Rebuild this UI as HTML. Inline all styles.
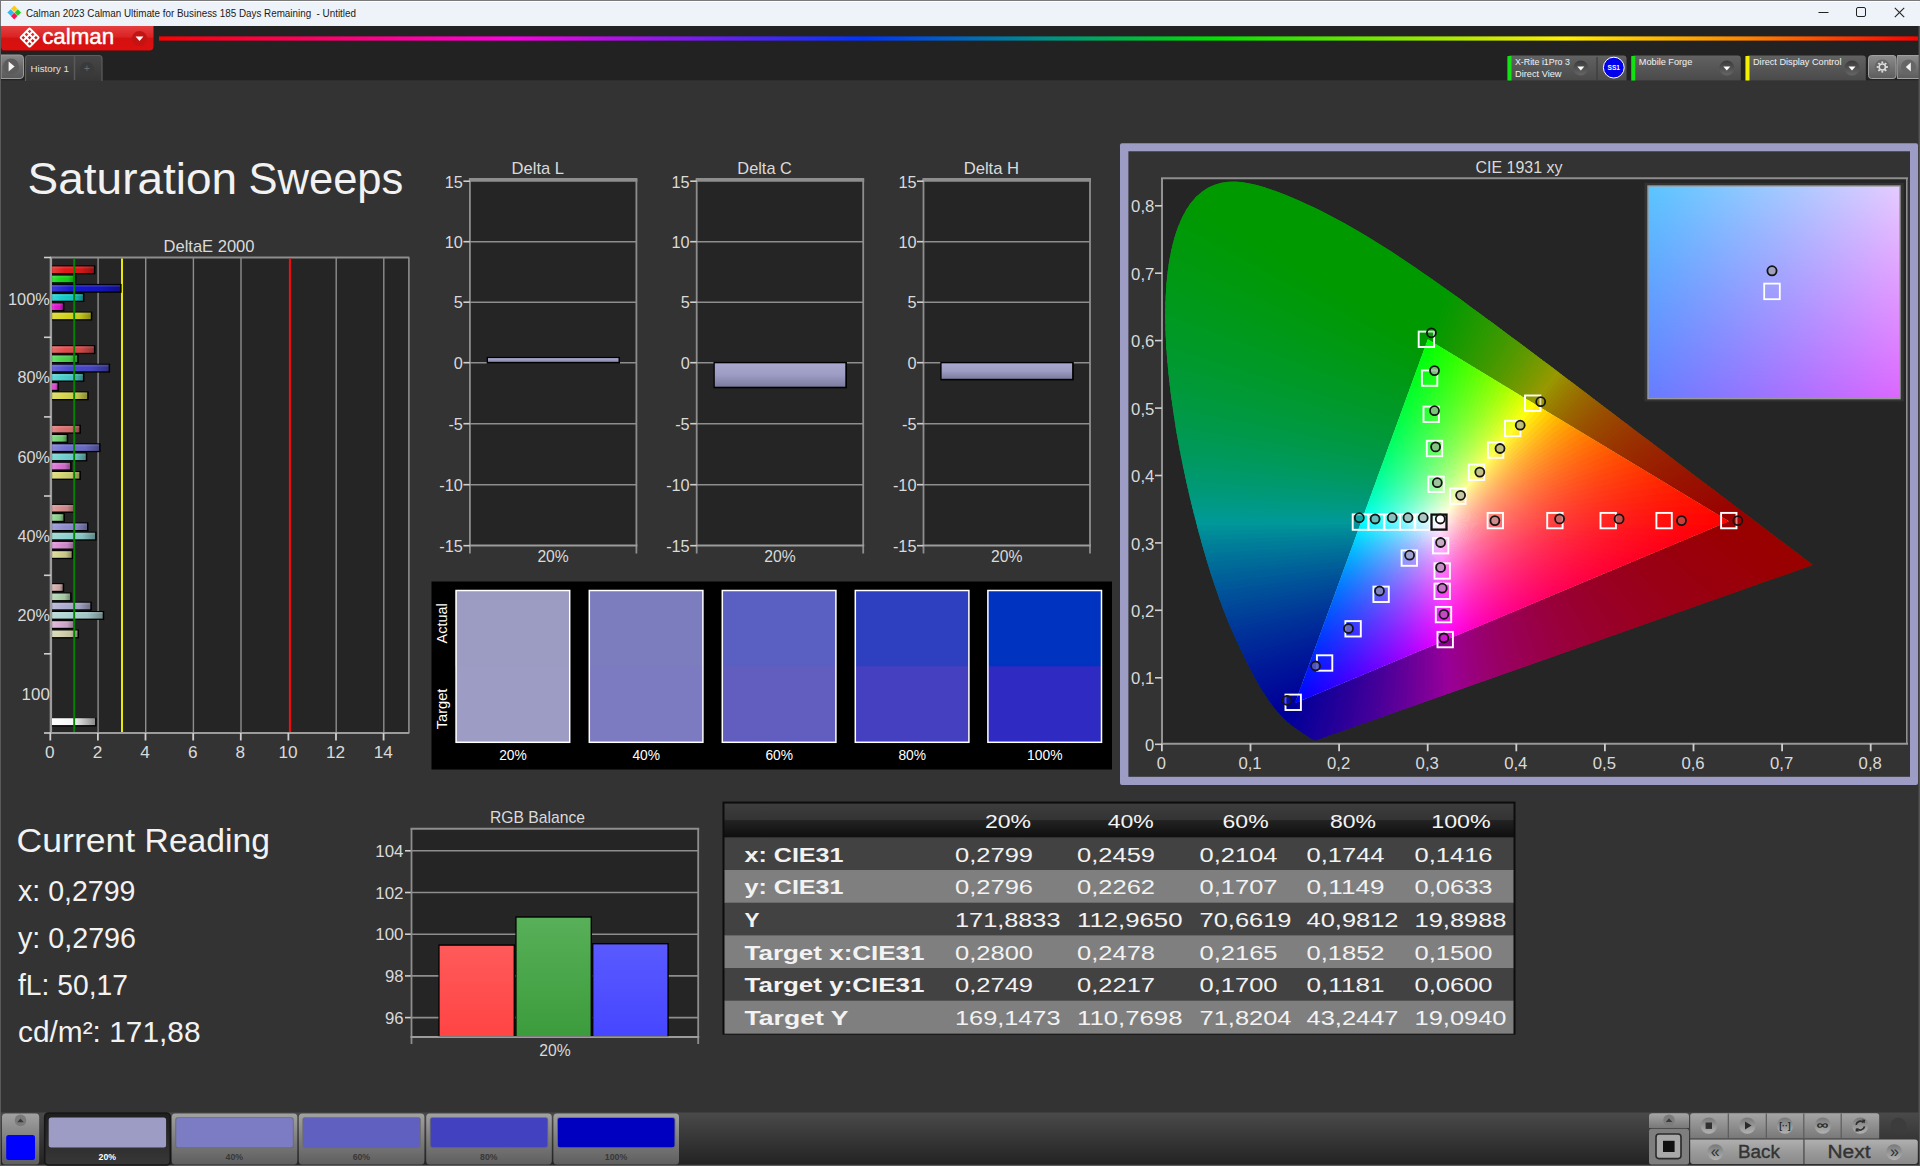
<!DOCTYPE html>
<html lang="en"><head><meta charset="utf-8"><title>Calman 2023 - Saturation Sweeps</title>
<style>
html,body{margin:0;padding:0;background:#333;overflow:hidden}
svg{display:block}
text{font-family:'Liberation Sans', Arial, sans-serif;white-space:pre}
</style></head><body>
<svg width="1920" height="1166" viewBox="0 0 1920 1166">
<defs>
<linearGradient id="redbtn" x1="0" y1="0" x2="0" y2="1"><stop offset="0" stop-color="#e34040"/><stop offset="0.45" stop-color="#dc2222"/><stop offset="0.5" stop-color="#d41111"/><stop offset="1" stop-color="#dd0f0f"/></linearGradient>
<linearGradient id="spec" x1="0" y1="0" x2="1" y2="0"><stop offset="0" stop-color="#ff0000"/><stop offset="0.2" stop-color="#ff00e0"/><stop offset="0.4" stop-color="#0033ff"/><stop offset="0.5" stop-color="#008c8c"/><stop offset="0.6" stop-color="#00e000"/><stop offset="0.8" stop-color="#ffee00"/><stop offset="0.9" stop-color="#ff8800"/><stop offset="1" stop-color="#ff0000"/></linearGradient>
<linearGradient id="gbtn" x1="0" y1="0" x2="0" y2="1"><stop offset="0" stop-color="#8a8a8a"/><stop offset="0.5" stop-color="#6a6a6a"/><stop offset="1" stop-color="#5a5a5a"/></linearGradient>
<linearGradient id="tab" x1="0" y1="0" x2="0" y2="1"><stop offset="0" stop-color="#474747"/><stop offset="1" stop-color="#363636"/></linearGradient>
<linearGradient id="dev" x1="0" y1="0" x2="0" y2="1"><stop offset="0" stop-color="#626262"/><stop offset="1" stop-color="#4a4a4a"/></linearGradient>
<linearGradient id="ddc" x1="0" y1="0" x2="0" y2="1"><stop offset="0" stop-color="#3a3a3a"/><stop offset="1" stop-color="#666666"/></linearGradient>
<linearGradient id="gbtn2" x1="0" y1="0" x2="0" y2="1"><stop offset="0" stop-color="#8c8c8c"/><stop offset="1" stop-color="#5c5c5c"/></linearGradient>
<linearGradient id="db0_0" x1="0" y1="0" x2="1" y2="0"><stop offset="0" stop-color="#e83e3e"/><stop offset="0.3" stop-color="#e41919"/><stop offset="0.7" stop-color="#d21717"/><stop offset="1" stop-color="#921010"/></linearGradient>
<linearGradient id="db0_1" x1="0" y1="0" x2="1" y2="0"><stop offset="0" stop-color="#40dd40"/><stop offset="0.3" stop-color="#1cd71c"/><stop offset="0.7" stop-color="#1ac61a"/><stop offset="1" stop-color="#128a12"/></linearGradient>
<linearGradient id="db0_2" x1="0" y1="0" x2="1" y2="0"><stop offset="0" stop-color="#3b3bd5"/><stop offset="0.3" stop-color="#1616cd"/><stop offset="0.7" stop-color="#1414bd"/><stop offset="1" stop-color="#0e0e83"/></linearGradient>
<linearGradient id="db0_3" x1="0" y1="0" x2="1" y2="0"><stop offset="0" stop-color="#3ed5d5"/><stop offset="0.3" stop-color="#19cdcd"/><stop offset="0.7" stop-color="#17bdbd"/><stop offset="1" stop-color="#108383"/></linearGradient>
<linearGradient id="db0_4" x1="0" y1="0" x2="1" y2="0"><stop offset="0" stop-color="#e83edd"/><stop offset="0.3" stop-color="#e419d7"/><stop offset="0.7" stop-color="#d217c6"/><stop offset="1" stop-color="#92108a"/></linearGradient>
<linearGradient id="db0_5" x1="0" y1="0" x2="1" y2="0"><stop offset="0" stop-color="#dddd42"/><stop offset="0.3" stop-color="#d7d71e"/><stop offset="0.7" stop-color="#c6c61c"/><stop offset="1" stop-color="#8a8a13"/></linearGradient>
<linearGradient id="db1_0" x1="0" y1="0" x2="1" y2="0"><stop offset="0" stop-color="#e56a6a"/><stop offset="0.3" stop-color="#e04d4d"/><stop offset="0.7" stop-color="#ce4747"/><stop offset="1" stop-color="#8f3232"/></linearGradient>
<linearGradient id="db1_1" x1="0" y1="0" x2="1" y2="0"><stop offset="0" stop-color="#6cdd6c"/><stop offset="0.3" stop-color="#50d650"/><stop offset="0.7" stop-color="#49c549"/><stop offset="1" stop-color="#338933"/></linearGradient>
<linearGradient id="db1_2" x1="0" y1="0" x2="1" y2="0"><stop offset="0" stop-color="#6868d7"/><stop offset="0.3" stop-color="#4b4bcf"/><stop offset="0.7" stop-color="#4545be"/><stop offset="1" stop-color="#303084"/></linearGradient>
<linearGradient id="db1_3" x1="0" y1="0" x2="1" y2="0"><stop offset="0" stop-color="#6ad7d7"/><stop offset="0.3" stop-color="#4dcfcf"/><stop offset="0.7" stop-color="#47bebe"/><stop offset="1" stop-color="#328484"/></linearGradient>
<linearGradient id="db1_4" x1="0" y1="0" x2="1" y2="0"><stop offset="0" stop-color="#e56add"/><stop offset="0.3" stop-color="#e04dd6"/><stop offset="0.7" stop-color="#ce47c5"/><stop offset="1" stop-color="#8f3289"/></linearGradient>
<linearGradient id="db1_5" x1="0" y1="0" x2="1" y2="0"><stop offset="0" stop-color="#dddd6d"/><stop offset="0.3" stop-color="#d6d651"/><stop offset="0.7" stop-color="#c5c54a"/><stop offset="1" stop-color="#898934"/></linearGradient>
<linearGradient id="db2_0" x1="0" y1="0" x2="1" y2="0"><stop offset="0" stop-color="#e28989"/><stop offset="0.3" stop-color="#dc7373"/><stop offset="0.7" stop-color="#cb6a6a"/><stop offset="1" stop-color="#8d4949"/></linearGradient>
<linearGradient id="db2_1" x1="0" y1="0" x2="1" y2="0"><stop offset="0" stop-color="#8bdc8b"/><stop offset="0.3" stop-color="#74d674"/><stop offset="0.7" stop-color="#6bc46b"/><stop offset="1" stop-color="#4a894a"/></linearGradient>
<linearGradient id="db2_2" x1="0" y1="0" x2="1" y2="0"><stop offset="0" stop-color="#8888d8"/><stop offset="0.3" stop-color="#7171d0"/><stop offset="0.7" stop-color="#6868c0"/><stop offset="1" stop-color="#484885"/></linearGradient>
<linearGradient id="db2_3" x1="0" y1="0" x2="1" y2="0"><stop offset="0" stop-color="#89d8d8"/><stop offset="0.3" stop-color="#73d0d0"/><stop offset="0.7" stop-color="#6ac0c0"/><stop offset="1" stop-color="#498585"/></linearGradient>
<linearGradient id="db2_4" x1="0" y1="0" x2="1" y2="0"><stop offset="0" stop-color="#e289dc"/><stop offset="0.3" stop-color="#dc73d6"/><stop offset="0.7" stop-color="#cb6ac4"/><stop offset="1" stop-color="#8d4989"/></linearGradient>
<linearGradient id="db2_5" x1="0" y1="0" x2="1" y2="0"><stop offset="0" stop-color="#dcdc8b"/><stop offset="0.3" stop-color="#d6d675"/><stop offset="0.7" stop-color="#c4c46c"/><stop offset="1" stop-color="#89894b"/></linearGradient>
<linearGradient id="db3_0" x1="0" y1="0" x2="1" y2="0"><stop offset="0" stop-color="#e0a2a2"/><stop offset="0.3" stop-color="#da9191"/><stop offset="0.7" stop-color="#c88585"/><stop offset="1" stop-color="#8b5d5d"/></linearGradient>
<linearGradient id="db3_1" x1="0" y1="0" x2="1" y2="0"><stop offset="0" stop-color="#a3dca3"/><stop offset="0.3" stop-color="#92d592"/><stop offset="0.7" stop-color="#86c486"/><stop offset="1" stop-color="#5d885d"/></linearGradient>
<linearGradient id="db3_2" x1="0" y1="0" x2="1" y2="0"><stop offset="0" stop-color="#a1a1d9"/><stop offset="0.3" stop-color="#9090d1"/><stop offset="0.7" stop-color="#8484c1"/><stop offset="1" stop-color="#5c5c86"/></linearGradient>
<linearGradient id="db3_3" x1="0" y1="0" x2="1" y2="0"><stop offset="0" stop-color="#a2d9d9"/><stop offset="0.3" stop-color="#91d1d1"/><stop offset="0.7" stop-color="#85c1c1"/><stop offset="1" stop-color="#5d8686"/></linearGradient>
<linearGradient id="db3_4" x1="0" y1="0" x2="1" y2="0"><stop offset="0" stop-color="#e0a2dc"/><stop offset="0.3" stop-color="#da91d5"/><stop offset="0.7" stop-color="#c885c4"/><stop offset="1" stop-color="#8b5d88"/></linearGradient>
<linearGradient id="db3_5" x1="0" y1="0" x2="1" y2="0"><stop offset="0" stop-color="#dcdca4"/><stop offset="0.3" stop-color="#d5d592"/><stop offset="0.7" stop-color="#c4c487"/><stop offset="1" stop-color="#88885e"/></linearGradient>
<linearGradient id="db4_0" x1="0" y1="0" x2="1" y2="0"><stop offset="0" stop-color="#debbbb"/><stop offset="0.3" stop-color="#d7afaf"/><stop offset="0.7" stop-color="#c6a1a1"/><stop offset="1" stop-color="#8a7070"/></linearGradient>
<linearGradient id="db4_1" x1="0" y1="0" x2="1" y2="0"><stop offset="0" stop-color="#bcdbbc"/><stop offset="0.3" stop-color="#afd5af"/><stop offset="0.7" stop-color="#a1c4a1"/><stop offset="1" stop-color="#708870"/></linearGradient>
<linearGradient id="db4_2" x1="0" y1="0" x2="1" y2="0"><stop offset="0" stop-color="#bbbbda"/><stop offset="0.3" stop-color="#aeaed3"/><stop offset="0.7" stop-color="#a0a0c2"/><stop offset="1" stop-color="#6f6f87"/></linearGradient>
<linearGradient id="db4_3" x1="0" y1="0" x2="1" y2="0"><stop offset="0" stop-color="#bbdada"/><stop offset="0.3" stop-color="#afd3d3"/><stop offset="0.7" stop-color="#a1c2c2"/><stop offset="1" stop-color="#708787"/></linearGradient>
<linearGradient id="db4_4" x1="0" y1="0" x2="1" y2="0"><stop offset="0" stop-color="#debbdb"/><stop offset="0.3" stop-color="#d7afd5"/><stop offset="0.7" stop-color="#c6a1c4"/><stop offset="1" stop-color="#8a7088"/></linearGradient>
<linearGradient id="db4_5" x1="0" y1="0" x2="1" y2="0"><stop offset="0" stop-color="#dbdbbc"/><stop offset="0.3" stop-color="#d5d5b0"/><stop offset="0.7" stop-color="#c4c4a2"/><stop offset="1" stop-color="#888870"/></linearGradient>
<linearGradient id="dbw" x1="0" y1="0" x2="1" y2="0"><stop offset="0" stop-color="#ffffff"/><stop offset="0.5" stop-color="#f4f4f4"/><stop offset="1" stop-color="#8a8a8a"/></linearGradient>
<linearGradient id="lav" x1="0" y1="0" x2="0" y2="1"><stop offset="0" stop-color="#a9a9cf"/><stop offset="0.5" stop-color="#9c9cc4"/><stop offset="1" stop-color="#7c7ca0"/></linearGradient>
<linearGradient id="rb_r" x1="0" y1="0" x2="0" y2="1"><stop offset="0" stop-color="#ff5a5a"/><stop offset="1" stop-color="#ff4444"/></linearGradient>
<linearGradient id="rb_g" x1="0" y1="0" x2="0" y2="1"><stop offset="0" stop-color="#58b058"/><stop offset="1" stop-color="#3c9c3c"/></linearGradient>
<linearGradient id="rb_b" x1="0" y1="0" x2="0" y2="1"><stop offset="0" stop-color="#5a5aff"/><stop offset="1" stop-color="#4646ff"/></linearGradient>
<clipPath id="locus"><path d="M1315.6,740.5 L1312.7,739.7 L1309.9,737.9 L1307.2,736.0 L1304.0,733.9 L1300.8,731.8 L1297.9,729.8 L1294.6,727.6 L1292.2,725.7 L1289.5,723.7 L1286.7,721.3 L1283.7,718.5 L1280.3,714.9 L1276.4,710.4 L1274.2,707.7 L1272.0,704.7 L1269.6,701.5 L1267.2,698.0 L1264.6,694.1 L1261.9,689.9 L1259.1,685.2 L1256.1,680.0 L1253.1,674.4 L1249.8,668.2 L1246.4,661.5 L1242.9,654.3 L1239.2,646.4 L1235.3,638.0 L1231.2,628.8 L1227.1,619.0 L1222.9,608.4 L1218.7,597.1 L1214.6,585.1 L1210.4,572.4 L1206.3,559.0 L1202.2,544.9 L1198.1,530.1 L1194.1,514.6 L1190.1,498.6 L1186.4,482.2 L1182.8,465.5 L1179.5,448.7 L1176.4,431.7 L1173.7,414.6 L1171.3,397.7 L1169.2,380.8 L1167.6,364.2 L1166.3,348.0 L1165.5,332.3 L1165.2,317.1 L1165.4,302.3 L1166.1,288.1 L1167.3,274.5 L1169.1,261.6 L1171.4,249.4 L1174.3,238.1 L1177.7,227.7 L1181.7,218.2 L1186.2,209.8 L1191.1,202.5 L1196.4,196.4 L1202.2,191.4 L1208.2,187.5 L1214.6,184.7 L1221.1,182.7 L1227.8,181.7 L1234.7,181.5 L1241.7,182.1 L1248.8,183.2 L1255.9,184.8 L1263.1,186.8 L1270.4,189.2 L1277.7,191.7 L1284.9,194.5 L1292.0,197.5 L1299.1,200.5 L1306.0,203.7 L1312.8,206.8 L1319.6,210.1 L1326.3,213.4 L1332.9,216.9 L1339.5,220.4 L1346.0,224.0 L1352.5,227.7 L1359.0,231.4 L1365.4,235.3 L1371.9,239.2 L1378.3,243.2 L1384.7,247.2 L1391.1,251.3 L1397.5,255.5 L1403.8,259.7 L1410.2,264.0 L1416.5,268.3 L1422.9,272.7 L1429.2,277.1 L1435.6,281.5 L1441.9,286.0 L1448.2,290.5 L1454.6,295.1 L1460.9,299.6 L1467.2,304.2 L1473.6,308.9 L1479.9,313.5 L1486.2,318.2 L1492.6,322.8 L1498.9,327.5 L1505.2,332.2 L1511.5,336.9 L1517.8,341.6 L1524.1,346.3 L1530.4,351.0 L1536.7,355.7 L1543.0,360.4 L1549.2,365.1 L1555.4,369.8 L1561.6,374.5 L1567.8,379.2 L1574.0,383.8 L1580.1,388.5 L1586.2,393.1 L1592.3,397.7 L1598.3,402.2 L1604.2,406.8 L1610.2,411.3 L1616.1,415.7 L1621.9,420.2 L1627.7,424.5 L1633.4,428.9 L1639.1,433.2 L1644.7,437.4 L1650.2,441.6 L1655.7,445.7 L1661.1,449.8 L1666.4,453.8 L1671.6,457.8 L1676.7,461.7 L1681.8,465.5 L1686.7,469.3 L1691.5,472.9 L1696.2,476.5 L1700.7,479.9 L1705.1,483.2 L1709.4,486.4 L1713.5,489.6 L1717.6,492.6 L1721.5,495.7 L1725.4,498.6 L1729.2,501.4 L1732.8,504.2 L1736.3,506.9 L1739.7,509.4 L1742.9,511.8 L1746.0,514.2 L1749.0,516.4 L1751.9,518.6 L1754.6,520.7 L1757.3,522.7 L1759.8,524.6 L1762.2,526.4 L1766.8,529.9 L1770.9,533.0 L1774.7,535.9 L1778.1,538.5 L1781.3,540.9 L1784.1,543.0 L1786.8,545.0 L1789.2,546.9 L1792.6,549.4 L1795.6,551.7 L1798.3,553.7 L1801.3,556.0 L1803.8,557.9 L1806.5,560.0 L1809.0,561.9 L1811.4,563.7 L1812.9,564.9Z"/></clipPath>
<clipPath id="tri"><path d="M1729.0,521.3 L1427.8,339.3 L1294.9,703.3 Z"/></clipPath>
<linearGradient id="w1" gradientUnits="userSpaceOnUse" x1="1439.1" y1="522.0" x2="1717.0" y2="526.3"><stop offset="0.00" stop-color="#ffffff"/><stop offset="0.08" stop-color="#ffb6b7"/><stop offset="0.18" stop-color="#ff7f81"/><stop offset="0.30" stop-color="#ff5659"/><stop offset="0.45" stop-color="#ff3639"/><stop offset="0.60" stop-color="#ff2024"/><stop offset="0.75" stop-color="#ff1115"/><stop offset="0.88" stop-color="#ff070b"/><stop offset="1.00" stop-color="#ff0004"/></linearGradient>
<linearGradient id="w2" gradientUnits="userSpaceOnUse" x1="1439.1" y1="522.0" x2="1698.3" y2="534.2"><stop offset="0.00" stop-color="#ffffff"/><stop offset="0.08" stop-color="#ffb9bc"/><stop offset="0.18" stop-color="#ff8287"/><stop offset="0.30" stop-color="#ff595f"/><stop offset="0.45" stop-color="#ff3840"/><stop offset="0.60" stop-color="#ff222b"/><stop offset="0.75" stop-color="#ff121c"/><stop offset="0.88" stop-color="#ff0812"/><stop offset="1.00" stop-color="#ff000a"/></linearGradient>
<linearGradient id="w3" gradientUnits="userSpaceOnUse" x1="1439.1" y1="522.0" x2="1681.8" y2="541.1"><stop offset="0.00" stop-color="#ffffff"/><stop offset="0.08" stop-color="#ffbbbf"/><stop offset="0.18" stop-color="#ff858d"/><stop offset="0.30" stop-color="#ff5b66"/><stop offset="0.45" stop-color="#ff3946"/><stop offset="0.60" stop-color="#ff2331"/><stop offset="0.75" stop-color="#ff1322"/><stop offset="0.88" stop-color="#ff0818"/><stop offset="1.00" stop-color="#ff0011"/></linearGradient>
<linearGradient id="w4" gradientUnits="userSpaceOnUse" x1="1439.1" y1="522.0" x2="1667.3" y2="547.2"><stop offset="0.00" stop-color="#ffffff"/><stop offset="0.08" stop-color="#ffbdc3"/><stop offset="0.18" stop-color="#ff8792"/><stop offset="0.30" stop-color="#ff5d6c"/><stop offset="0.45" stop-color="#ff3b4d"/><stop offset="0.60" stop-color="#ff2438"/><stop offset="0.75" stop-color="#ff1328"/><stop offset="0.88" stop-color="#ff081e"/><stop offset="1.00" stop-color="#ff0017"/></linearGradient>
<linearGradient id="w5" gradientUnits="userSpaceOnUse" x1="1439.1" y1="522.0" x2="1654.3" y2="552.6"><stop offset="0.00" stop-color="#ffffff"/><stop offset="0.08" stop-color="#ffbec6"/><stop offset="0.18" stop-color="#ff8996"/><stop offset="0.30" stop-color="#ff5f71"/><stop offset="0.45" stop-color="#ff3d52"/><stop offset="0.60" stop-color="#ff253d"/><stop offset="0.75" stop-color="#ff142e"/><stop offset="0.88" stop-color="#ff0924"/><stop offset="1.00" stop-color="#ff001c"/></linearGradient>
<linearGradient id="w6" gradientUnits="userSpaceOnUse" x1="1439.1" y1="522.0" x2="1642.7" y2="557.5"><stop offset="0.00" stop-color="#ffffff"/><stop offset="0.08" stop-color="#ffc0c8"/><stop offset="0.18" stop-color="#ff8b9b"/><stop offset="0.30" stop-color="#ff6176"/><stop offset="0.45" stop-color="#ff3e58"/><stop offset="0.60" stop-color="#ff2643"/><stop offset="0.75" stop-color="#ff1534"/><stop offset="0.88" stop-color="#ff092a"/><stop offset="1.00" stop-color="#ff0022"/></linearGradient>
<linearGradient id="w7" gradientUnits="userSpaceOnUse" x1="1439.1" y1="522.0" x2="1632.1" y2="561.9"><stop offset="0.00" stop-color="#ffffff"/><stop offset="0.08" stop-color="#ffc1cb"/><stop offset="0.18" stop-color="#ff8d9f"/><stop offset="0.30" stop-color="#ff637b"/><stop offset="0.45" stop-color="#ff405d"/><stop offset="0.60" stop-color="#ff2749"/><stop offset="0.75" stop-color="#ff1539"/><stop offset="0.88" stop-color="#ff092f"/><stop offset="1.00" stop-color="#ff0027"/></linearGradient>
<linearGradient id="w8" gradientUnits="userSpaceOnUse" x1="1439.1" y1="522.0" x2="1622.4" y2="566.0"><stop offset="0.00" stop-color="#ffffff"/><stop offset="0.08" stop-color="#ffc3cd"/><stop offset="0.18" stop-color="#ff8fa3"/><stop offset="0.30" stop-color="#ff6580"/><stop offset="0.45" stop-color="#ff4162"/><stop offset="0.60" stop-color="#ff284e"/><stop offset="0.75" stop-color="#ff163f"/><stop offset="0.88" stop-color="#ff0934"/><stop offset="1.00" stop-color="#ff002c"/></linearGradient>
<linearGradient id="w9" gradientUnits="userSpaceOnUse" x1="1439.1" y1="522.0" x2="1613.5" y2="569.7"><stop offset="0.00" stop-color="#ffffff"/><stop offset="0.08" stop-color="#ffc4d0"/><stop offset="0.18" stop-color="#ff91a6"/><stop offset="0.30" stop-color="#ff6784"/><stop offset="0.45" stop-color="#ff4367"/><stop offset="0.60" stop-color="#ff2953"/><stop offset="0.75" stop-color="#ff1644"/><stop offset="0.88" stop-color="#ff0a39"/><stop offset="1.00" stop-color="#ff0032"/></linearGradient>
<linearGradient id="w10" gradientUnits="userSpaceOnUse" x1="1439.1" y1="522.0" x2="1605.4" y2="573.1"><stop offset="0.00" stop-color="#ffffff"/><stop offset="0.08" stop-color="#ffc5d2"/><stop offset="0.18" stop-color="#ff93aa"/><stop offset="0.30" stop-color="#ff6888"/><stop offset="0.45" stop-color="#ff446c"/><stop offset="0.60" stop-color="#ff2a58"/><stop offset="0.75" stop-color="#ff1748"/><stop offset="0.88" stop-color="#ff0a3e"/><stop offset="1.00" stop-color="#ff0036"/></linearGradient>
<linearGradient id="w11" gradientUnits="userSpaceOnUse" x1="1439.1" y1="522.0" x2="1597.8" y2="576.3"><stop offset="0.00" stop-color="#ffffff"/><stop offset="0.08" stop-color="#ffc6d4"/><stop offset="0.18" stop-color="#ff94ad"/><stop offset="0.30" stop-color="#ff6a8c"/><stop offset="0.45" stop-color="#ff4570"/><stop offset="0.60" stop-color="#ff2b5c"/><stop offset="0.75" stop-color="#ff174d"/><stop offset="0.88" stop-color="#ff0a43"/><stop offset="1.00" stop-color="#ff003b"/></linearGradient>
<linearGradient id="w12" gradientUnits="userSpaceOnUse" x1="1439.1" y1="522.0" x2="1590.7" y2="579.3"><stop offset="0.00" stop-color="#ffffff"/><stop offset="0.08" stop-color="#ffc7d5"/><stop offset="0.18" stop-color="#ff96b0"/><stop offset="0.30" stop-color="#ff6b90"/><stop offset="0.45" stop-color="#ff4675"/><stop offset="0.60" stop-color="#ff2c61"/><stop offset="0.75" stop-color="#ff1852"/><stop offset="0.88" stop-color="#ff0a48"/><stop offset="1.00" stop-color="#ff0040"/></linearGradient>
<linearGradient id="w13" gradientUnits="userSpaceOnUse" x1="1439.1" y1="522.0" x2="1584.1" y2="582.0"><stop offset="0.00" stop-color="#ffffff"/><stop offset="0.08" stop-color="#ffc8d7"/><stop offset="0.18" stop-color="#ff97b3"/><stop offset="0.30" stop-color="#ff6d94"/><stop offset="0.45" stop-color="#ff4779"/><stop offset="0.60" stop-color="#ff2d65"/><stop offset="0.75" stop-color="#ff1856"/><stop offset="0.88" stop-color="#ff0b4c"/><stop offset="1.00" stop-color="#ff0044"/></linearGradient>
<linearGradient id="w14" gradientUnits="userSpaceOnUse" x1="1439.1" y1="522.0" x2="1577.9" y2="584.6"><stop offset="0.00" stop-color="#ffffff"/><stop offset="0.08" stop-color="#ffc9d9"/><stop offset="0.18" stop-color="#ff98b6"/><stop offset="0.30" stop-color="#ff6e98"/><stop offset="0.45" stop-color="#ff497d"/><stop offset="0.60" stop-color="#ff2d69"/><stop offset="0.75" stop-color="#ff195b"/><stop offset="0.88" stop-color="#ff0b51"/><stop offset="1.00" stop-color="#ff0049"/></linearGradient>
<linearGradient id="w15" gradientUnits="userSpaceOnUse" x1="1439.1" y1="522.0" x2="1572.0" y2="587.1"><stop offset="0.00" stop-color="#ffffff"/><stop offset="0.08" stop-color="#ffcada"/><stop offset="0.18" stop-color="#ff9ab8"/><stop offset="0.30" stop-color="#ff6f9b"/><stop offset="0.45" stop-color="#ff4a81"/><stop offset="0.60" stop-color="#ff2e6e"/><stop offset="0.75" stop-color="#ff195f"/><stop offset="0.88" stop-color="#ff0b55"/><stop offset="1.00" stop-color="#ff004d"/></linearGradient>
<linearGradient id="w16" gradientUnits="userSpaceOnUse" x1="1439.1" y1="522.0" x2="1566.5" y2="589.4"><stop offset="0.00" stop-color="#ffffff"/><stop offset="0.08" stop-color="#ffcbdc"/><stop offset="0.18" stop-color="#ff9bbb"/><stop offset="0.30" stop-color="#ff719e"/><stop offset="0.45" stop-color="#ff4b85"/><stop offset="0.60" stop-color="#ff2f72"/><stop offset="0.75" stop-color="#ff1a63"/><stop offset="0.88" stop-color="#ff0b59"/><stop offset="1.00" stop-color="#ff0052"/></linearGradient>
<linearGradient id="w17" gradientUnits="userSpaceOnUse" x1="1439.1" y1="522.0" x2="1561.2" y2="591.6"><stop offset="0.00" stop-color="#ffffff"/><stop offset="0.08" stop-color="#ffccdd"/><stop offset="0.18" stop-color="#ff9cbd"/><stop offset="0.30" stop-color="#ff72a2"/><stop offset="0.45" stop-color="#ff4c88"/><stop offset="0.60" stop-color="#ff3076"/><stop offset="0.75" stop-color="#ff1a68"/><stop offset="0.88" stop-color="#ff0b5e"/><stop offset="1.00" stop-color="#ff0056"/></linearGradient>
<linearGradient id="w18" gradientUnits="userSpaceOnUse" x1="1439.1" y1="522.0" x2="1556.2" y2="593.7"><stop offset="0.00" stop-color="#ffffff"/><stop offset="0.08" stop-color="#ffcdde"/><stop offset="0.18" stop-color="#ff9dc0"/><stop offset="0.30" stop-color="#ff73a5"/><stop offset="0.45" stop-color="#ff4d8c"/><stop offset="0.60" stop-color="#ff317a"/><stop offset="0.75" stop-color="#ff1b6c"/><stop offset="0.88" stop-color="#ff0c62"/><stop offset="1.00" stop-color="#ff005a"/></linearGradient>
<linearGradient id="w19" gradientUnits="userSpaceOnUse" x1="1439.1" y1="522.0" x2="1551.4" y2="595.7"><stop offset="0.00" stop-color="#ffffff"/><stop offset="0.08" stop-color="#ffcde0"/><stop offset="0.18" stop-color="#ff9ec2"/><stop offset="0.30" stop-color="#ff74a8"/><stop offset="0.45" stop-color="#ff4e90"/><stop offset="0.60" stop-color="#ff317e"/><stop offset="0.75" stop-color="#ff1b70"/><stop offset="0.88" stop-color="#ff0c66"/><stop offset="1.00" stop-color="#ff005f"/></linearGradient>
<linearGradient id="w20" gradientUnits="userSpaceOnUse" x1="1439.1" y1="522.0" x2="1546.8" y2="597.7"><stop offset="0.00" stop-color="#ffffff"/><stop offset="0.08" stop-color="#ffcee1"/><stop offset="0.18" stop-color="#ff9fc4"/><stop offset="0.30" stop-color="#ff75ab"/><stop offset="0.45" stop-color="#ff4f93"/><stop offset="0.60" stop-color="#ff3281"/><stop offset="0.75" stop-color="#ff1c74"/><stop offset="0.88" stop-color="#ff0c6a"/><stop offset="1.00" stop-color="#ff0063"/></linearGradient>
<linearGradient id="w21" gradientUnits="userSpaceOnUse" x1="1439.1" y1="522.0" x2="1542.4" y2="599.5"><stop offset="0.00" stop-color="#ffffff"/><stop offset="0.08" stop-color="#ffcfe2"/><stop offset="0.18" stop-color="#ffa0c7"/><stop offset="0.30" stop-color="#ff76ae"/><stop offset="0.45" stop-color="#ff5097"/><stop offset="0.60" stop-color="#ff3385"/><stop offset="0.75" stop-color="#ff1c78"/><stop offset="0.88" stop-color="#ff0c6e"/><stop offset="1.00" stop-color="#ff0067"/></linearGradient>
<linearGradient id="w22" gradientUnits="userSpaceOnUse" x1="1439.1" y1="522.0" x2="1538.1" y2="601.3"><stop offset="0.00" stop-color="#ffffff"/><stop offset="0.08" stop-color="#ffcfe3"/><stop offset="0.18" stop-color="#ffa1c9"/><stop offset="0.30" stop-color="#ff78b1"/><stop offset="0.45" stop-color="#ff519a"/><stop offset="0.60" stop-color="#ff3389"/><stop offset="0.75" stop-color="#ff1d7c"/><stop offset="0.88" stop-color="#ff0d73"/><stop offset="1.00" stop-color="#ff006b"/></linearGradient>
<linearGradient id="w23" gradientUnits="userSpaceOnUse" x1="1439.1" y1="522.0" x2="1534.0" y2="603.0"><stop offset="0.00" stop-color="#ffffff"/><stop offset="0.08" stop-color="#ffd0e5"/><stop offset="0.18" stop-color="#ffa2cb"/><stop offset="0.30" stop-color="#ff79b3"/><stop offset="0.45" stop-color="#ff529d"/><stop offset="0.60" stop-color="#ff348d"/><stop offset="0.75" stop-color="#ff1d80"/><stop offset="0.88" stop-color="#ff0d77"/><stop offset="1.00" stop-color="#ff006f"/></linearGradient>
<linearGradient id="w24" gradientUnits="userSpaceOnUse" x1="1439.1" y1="522.0" x2="1530.0" y2="604.7"><stop offset="0.00" stop-color="#ffffff"/><stop offset="0.08" stop-color="#ffd1e6"/><stop offset="0.18" stop-color="#ffa3cd"/><stop offset="0.30" stop-color="#ff7ab6"/><stop offset="0.45" stop-color="#ff53a1"/><stop offset="0.60" stop-color="#ff3591"/><stop offset="0.75" stop-color="#ff1d84"/><stop offset="0.88" stop-color="#ff0d7b"/><stop offset="1.00" stop-color="#ff0074"/></linearGradient>
<linearGradient id="w25" gradientUnits="userSpaceOnUse" x1="1439.1" y1="522.0" x2="1526.1" y2="606.3"><stop offset="0.00" stop-color="#ffffff"/><stop offset="0.08" stop-color="#ffd1e7"/><stop offset="0.18" stop-color="#ffa4cf"/><stop offset="0.30" stop-color="#ff7bb9"/><stop offset="0.45" stop-color="#ff53a4"/><stop offset="0.60" stop-color="#ff3594"/><stop offset="0.75" stop-color="#ff1e88"/><stop offset="0.88" stop-color="#ff0d7f"/><stop offset="1.00" stop-color="#ff0078"/></linearGradient>
<linearGradient id="w26" gradientUnits="userSpaceOnUse" x1="1439.1" y1="522.0" x2="1522.4" y2="607.9"><stop offset="0.00" stop-color="#ffffff"/><stop offset="0.08" stop-color="#ffd2e8"/><stop offset="0.18" stop-color="#ffa5d1"/><stop offset="0.30" stop-color="#ff7cbc"/><stop offset="0.45" stop-color="#ff54a7"/><stop offset="0.60" stop-color="#ff3698"/><stop offset="0.75" stop-color="#ff1e8c"/><stop offset="0.88" stop-color="#ff0d83"/><stop offset="1.00" stop-color="#ff007c"/></linearGradient>
<linearGradient id="w27" gradientUnits="userSpaceOnUse" x1="1439.1" y1="522.0" x2="1518.7" y2="609.5"><stop offset="0.00" stop-color="#ffffff"/><stop offset="0.08" stop-color="#ffd3e9"/><stop offset="0.18" stop-color="#ffa6d3"/><stop offset="0.30" stop-color="#ff7dbe"/><stop offset="0.45" stop-color="#ff55ab"/><stop offset="0.60" stop-color="#ff379c"/><stop offset="0.75" stop-color="#ff1f90"/><stop offset="0.88" stop-color="#ff0e87"/><stop offset="1.00" stop-color="#ff0080"/></linearGradient>
<linearGradient id="w28" gradientUnits="userSpaceOnUse" x1="1439.1" y1="522.0" x2="1515.1" y2="611.0"><stop offset="0.00" stop-color="#ffffff"/><stop offset="0.08" stop-color="#ffd3ea"/><stop offset="0.18" stop-color="#ffa7d5"/><stop offset="0.30" stop-color="#ff7ec1"/><stop offset="0.45" stop-color="#ff56ae"/><stop offset="0.60" stop-color="#ff389f"/><stop offset="0.75" stop-color="#ff1f94"/><stop offset="0.88" stop-color="#ff0e8b"/><stop offset="1.00" stop-color="#ff0085"/></linearGradient>
<linearGradient id="w29" gradientUnits="userSpaceOnUse" x1="1439.1" y1="522.0" x2="1511.6" y2="612.4"><stop offset="0.00" stop-color="#ffffff"/><stop offset="0.08" stop-color="#ffd4eb"/><stop offset="0.18" stop-color="#ffa8d7"/><stop offset="0.30" stop-color="#ff7fc4"/><stop offset="0.45" stop-color="#ff57b1"/><stop offset="0.60" stop-color="#ff38a3"/><stop offset="0.75" stop-color="#ff2098"/><stop offset="0.88" stop-color="#ff0e90"/><stop offset="1.00" stop-color="#ff0089"/></linearGradient>
<linearGradient id="w30" gradientUnits="userSpaceOnUse" x1="1439.1" y1="522.0" x2="1508.1" y2="613.9"><stop offset="0.00" stop-color="#ffffff"/><stop offset="0.08" stop-color="#ffd4ec"/><stop offset="0.18" stop-color="#ffa9d9"/><stop offset="0.30" stop-color="#ff80c7"/><stop offset="0.45" stop-color="#ff58b5"/><stop offset="0.60" stop-color="#ff39a7"/><stop offset="0.75" stop-color="#ff209c"/><stop offset="0.88" stop-color="#ff0e94"/><stop offset="1.00" stop-color="#ff008e"/></linearGradient>
<linearGradient id="w31" gradientUnits="userSpaceOnUse" x1="1439.1" y1="522.0" x2="1504.7" y2="615.3"><stop offset="0.00" stop-color="#ffffff"/><stop offset="0.08" stop-color="#ffd5ed"/><stop offset="0.18" stop-color="#ffaadb"/><stop offset="0.30" stop-color="#ff81c9"/><stop offset="0.45" stop-color="#ff59b8"/><stop offset="0.60" stop-color="#ff3aab"/><stop offset="0.75" stop-color="#ff21a0"/><stop offset="0.88" stop-color="#ff0e98"/><stop offset="1.00" stop-color="#ff0092"/></linearGradient>
<linearGradient id="w32" gradientUnits="userSpaceOnUse" x1="1439.1" y1="522.0" x2="1501.3" y2="616.7"><stop offset="0.00" stop-color="#ffffff"/><stop offset="0.08" stop-color="#ffd5ee"/><stop offset="0.18" stop-color="#ffabdd"/><stop offset="0.30" stop-color="#ff82cc"/><stop offset="0.45" stop-color="#ff5abc"/><stop offset="0.60" stop-color="#ff3aaf"/><stop offset="0.75" stop-color="#ff21a4"/><stop offset="0.88" stop-color="#ff0f9d"/><stop offset="1.00" stop-color="#ff0097"/></linearGradient>
<linearGradient id="w33" gradientUnits="userSpaceOnUse" x1="1439.1" y1="522.0" x2="1498.0" y2="618.1"><stop offset="0.00" stop-color="#ffffff"/><stop offset="0.08" stop-color="#ffd6ef"/><stop offset="0.18" stop-color="#ffacdf"/><stop offset="0.30" stop-color="#ff83cf"/><stop offset="0.45" stop-color="#ff5bbf"/><stop offset="0.60" stop-color="#ff3bb3"/><stop offset="0.75" stop-color="#ff21a9"/><stop offset="0.88" stop-color="#ff0fa1"/><stop offset="1.00" stop-color="#ff009b"/></linearGradient>
<linearGradient id="w34" gradientUnits="userSpaceOnUse" x1="1439.1" y1="522.0" x2="1494.7" y2="619.5"><stop offset="0.00" stop-color="#ffffff"/><stop offset="0.08" stop-color="#ffd7f0"/><stop offset="0.18" stop-color="#ffade0"/><stop offset="0.30" stop-color="#ff84d1"/><stop offset="0.45" stop-color="#ff5cc2"/><stop offset="0.60" stop-color="#ff3cb7"/><stop offset="0.75" stop-color="#ff22ad"/><stop offset="0.88" stop-color="#ff0fa6"/><stop offset="1.00" stop-color="#ff00a0"/></linearGradient>
<linearGradient id="w35" gradientUnits="userSpaceOnUse" x1="1439.1" y1="522.0" x2="1491.4" y2="620.9"><stop offset="0.00" stop-color="#ffffff"/><stop offset="0.08" stop-color="#ffd7f1"/><stop offset="0.18" stop-color="#ffaee2"/><stop offset="0.30" stop-color="#ff85d4"/><stop offset="0.45" stop-color="#ff5dc6"/><stop offset="0.60" stop-color="#ff3dbb"/><stop offset="0.75" stop-color="#ff22b1"/><stop offset="0.88" stop-color="#ff0fab"/><stop offset="1.00" stop-color="#ff00a5"/></linearGradient>
<linearGradient id="w36" gradientUnits="userSpaceOnUse" x1="1439.1" y1="522.0" x2="1488.2" y2="622.2"><stop offset="0.00" stop-color="#ffffff"/><stop offset="0.08" stop-color="#ffd8f2"/><stop offset="0.18" stop-color="#ffafe4"/><stop offset="0.30" stop-color="#ff86d7"/><stop offset="0.45" stop-color="#ff5ec9"/><stop offset="0.60" stop-color="#ff3dbf"/><stop offset="0.75" stop-color="#ff23b6"/><stop offset="0.88" stop-color="#ff10af"/><stop offset="1.00" stop-color="#ff00aa"/></linearGradient>
<linearGradient id="w37" gradientUnits="userSpaceOnUse" x1="1439.1" y1="522.0" x2="1484.9" y2="623.6"><stop offset="0.00" stop-color="#ffffff"/><stop offset="0.08" stop-color="#ffd8f3"/><stop offset="0.18" stop-color="#ffafe6"/><stop offset="0.30" stop-color="#ff87da"/><stop offset="0.45" stop-color="#ff5fcd"/><stop offset="0.60" stop-color="#ff3ec3"/><stop offset="0.75" stop-color="#ff23bb"/><stop offset="0.88" stop-color="#ff10b4"/><stop offset="1.00" stop-color="#ff00af"/></linearGradient>
<linearGradient id="w38" gradientUnits="userSpaceOnUse" x1="1439.1" y1="522.0" x2="1481.7" y2="625.0"><stop offset="0.00" stop-color="#ffffff"/><stop offset="0.08" stop-color="#ffd9f4"/><stop offset="0.18" stop-color="#ffb0e8"/><stop offset="0.30" stop-color="#ff88dd"/><stop offset="0.45" stop-color="#ff60d1"/><stop offset="0.60" stop-color="#ff3fc7"/><stop offset="0.75" stop-color="#ff24bf"/><stop offset="0.88" stop-color="#ff10ba"/><stop offset="1.00" stop-color="#ff00b5"/></linearGradient>
<linearGradient id="w39" gradientUnits="userSpaceOnUse" x1="1439.1" y1="522.0" x2="1478.5" y2="626.3"><stop offset="0.00" stop-color="#ffffff"/><stop offset="0.08" stop-color="#ffd9f5"/><stop offset="0.18" stop-color="#ffb1ea"/><stop offset="0.30" stop-color="#ff8adf"/><stop offset="0.45" stop-color="#ff61d5"/><stop offset="0.60" stop-color="#ff40cc"/><stop offset="0.75" stop-color="#ff25c4"/><stop offset="0.88" stop-color="#ff10bf"/><stop offset="1.00" stop-color="#ff00ba"/></linearGradient>
<linearGradient id="w40" gradientUnits="userSpaceOnUse" x1="1439.1" y1="522.0" x2="1475.2" y2="627.7"><stop offset="0.00" stop-color="#ffffff"/><stop offset="0.08" stop-color="#ffdaf6"/><stop offset="0.18" stop-color="#ffb2ec"/><stop offset="0.30" stop-color="#ff8be2"/><stop offset="0.45" stop-color="#ff62d8"/><stop offset="0.60" stop-color="#ff41d0"/><stop offset="0.75" stop-color="#ff25c9"/><stop offset="0.88" stop-color="#ff11c4"/><stop offset="1.00" stop-color="#ff00c0"/></linearGradient>
<linearGradient id="w41" gradientUnits="userSpaceOnUse" x1="1439.1" y1="522.0" x2="1472.0" y2="629.0"><stop offset="0.00" stop-color="#ffffff"/><stop offset="0.08" stop-color="#ffdaf7"/><stop offset="0.18" stop-color="#ffb3ee"/><stop offset="0.30" stop-color="#ff8ce5"/><stop offset="0.45" stop-color="#ff63dc"/><stop offset="0.60" stop-color="#ff42d5"/><stop offset="0.75" stop-color="#ff26cf"/><stop offset="0.88" stop-color="#ff11ca"/><stop offset="1.00" stop-color="#ff00c6"/></linearGradient>
<linearGradient id="w42" gradientUnits="userSpaceOnUse" x1="1439.1" y1="522.0" x2="1468.7" y2="630.4"><stop offset="0.00" stop-color="#ffffff"/><stop offset="0.08" stop-color="#ffdbf8"/><stop offset="0.18" stop-color="#ffb4f0"/><stop offset="0.30" stop-color="#ff8de9"/><stop offset="0.45" stop-color="#ff64e0"/><stop offset="0.60" stop-color="#ff43da"/><stop offset="0.75" stop-color="#ff26d4"/><stop offset="0.88" stop-color="#ff11d0"/><stop offset="1.00" stop-color="#ff00cd"/></linearGradient>
<linearGradient id="w43" gradientUnits="userSpaceOnUse" x1="1439.1" y1="522.0" x2="1465.4" y2="631.8"><stop offset="0.00" stop-color="#ffffff"/><stop offset="0.08" stop-color="#ffdcf9"/><stop offset="0.18" stop-color="#ffb5f2"/><stop offset="0.30" stop-color="#ff8eec"/><stop offset="0.45" stop-color="#ff65e5"/><stop offset="0.60" stop-color="#ff43df"/><stop offset="0.75" stop-color="#ff27da"/><stop offset="0.88" stop-color="#ff11d6"/><stop offset="1.00" stop-color="#ff00d3"/></linearGradient>
<linearGradient id="w44" gradientUnits="userSpaceOnUse" x1="1439.1" y1="522.0" x2="1462.1" y2="633.2"><stop offset="0.00" stop-color="#ffffff"/><stop offset="0.08" stop-color="#ffdcfa"/><stop offset="0.18" stop-color="#ffb6f5"/><stop offset="0.30" stop-color="#ff8fef"/><stop offset="0.45" stop-color="#ff67e9"/><stop offset="0.60" stop-color="#ff44e4"/><stop offset="0.75" stop-color="#ff28e0"/><stop offset="0.88" stop-color="#ff12dd"/><stop offset="1.00" stop-color="#ff00da"/></linearGradient>
<linearGradient id="w45" gradientUnits="userSpaceOnUse" x1="1439.1" y1="522.0" x2="1458.7" y2="634.6"><stop offset="0.00" stop-color="#ffffff"/><stop offset="0.08" stop-color="#ffddfb"/><stop offset="0.18" stop-color="#ffb7f7"/><stop offset="0.30" stop-color="#ff91f2"/><stop offset="0.45" stop-color="#ff68ee"/><stop offset="0.60" stop-color="#ff45ea"/><stop offset="0.75" stop-color="#ff28e6"/><stop offset="0.88" stop-color="#ff12e4"/><stop offset="1.00" stop-color="#ff00e1"/></linearGradient>
<linearGradient id="w46" gradientUnits="userSpaceOnUse" x1="1439.1" y1="522.0" x2="1455.3" y2="636.0"><stop offset="0.00" stop-color="#ffffff"/><stop offset="0.08" stop-color="#ffddfc"/><stop offset="0.18" stop-color="#ffb8f9"/><stop offset="0.30" stop-color="#ff92f6"/><stop offset="0.45" stop-color="#ff69f2"/><stop offset="0.60" stop-color="#ff47ef"/><stop offset="0.75" stop-color="#ff29ed"/><stop offset="0.88" stop-color="#ff13eb"/><stop offset="1.00" stop-color="#ff00e9"/></linearGradient>
<linearGradient id="w47" gradientUnits="userSpaceOnUse" x1="1439.1" y1="522.0" x2="1451.8" y2="637.5"><stop offset="0.00" stop-color="#ffffff"/><stop offset="0.08" stop-color="#ffdefd"/><stop offset="0.18" stop-color="#ffbafb"/><stop offset="0.30" stop-color="#ff93f9"/><stop offset="0.45" stop-color="#ff6af7"/><stop offset="0.60" stop-color="#ff48f5"/><stop offset="0.75" stop-color="#ff2af4"/><stop offset="0.88" stop-color="#ff13f2"/><stop offset="1.00" stop-color="#ff00f1"/></linearGradient>
<linearGradient id="w48" gradientUnits="userSpaceOnUse" x1="1439.1" y1="522.0" x2="1448.3" y2="639.0"><stop offset="0.00" stop-color="#ffffff"/><stop offset="0.08" stop-color="#ffdffe"/><stop offset="0.18" stop-color="#ffbbfe"/><stop offset="0.30" stop-color="#ff95fd"/><stop offset="0.45" stop-color="#ff6cfc"/><stop offset="0.60" stop-color="#ff49fc"/><stop offset="0.75" stop-color="#ff2bfb"/><stop offset="0.88" stop-color="#ff13fa"/><stop offset="1.00" stop-color="#ff00fa"/></linearGradient>
<linearGradient id="w49" gradientUnits="userSpaceOnUse" x1="1439.1" y1="522.0" x2="1444.6" y2="640.5"><stop offset="0.00" stop-color="#ffffff"/><stop offset="0.08" stop-color="#fedfff"/><stop offset="0.18" stop-color="#febbff"/><stop offset="0.30" stop-color="#fd95ff"/><stop offset="0.45" stop-color="#fc6cff"/><stop offset="0.60" stop-color="#fc49ff"/><stop offset="0.75" stop-color="#fb2bff"/><stop offset="0.88" stop-color="#fb13ff"/><stop offset="1.00" stop-color="#fb00ff"/></linearGradient>
<linearGradient id="w50" gradientUnits="userSpaceOnUse" x1="1439.1" y1="522.0" x2="1440.9" y2="642.0"><stop offset="0.00" stop-color="#ffffff"/><stop offset="0.08" stop-color="#fddfff"/><stop offset="0.18" stop-color="#fbbaff"/><stop offset="0.30" stop-color="#f994ff"/><stop offset="0.45" stop-color="#f76bff"/><stop offset="0.60" stop-color="#f549ff"/><stop offset="0.75" stop-color="#f42aff"/><stop offset="0.88" stop-color="#f213ff"/><stop offset="1.00" stop-color="#f100ff"/></linearGradient>
<linearGradient id="w51" gradientUnits="userSpaceOnUse" x1="1439.1" y1="522.0" x2="1437.1" y2="643.6"><stop offset="0.00" stop-color="#ffffff"/><stop offset="0.08" stop-color="#fcdeff"/><stop offset="0.18" stop-color="#f9baff"/><stop offset="0.30" stop-color="#f594ff"/><stop offset="0.45" stop-color="#f26bff"/><stop offset="0.60" stop-color="#ee48ff"/><stop offset="0.75" stop-color="#ec2aff"/><stop offset="0.88" stop-color="#ea13ff"/><stop offset="1.00" stop-color="#e800ff"/></linearGradient>
<linearGradient id="w52" gradientUnits="userSpaceOnUse" x1="1439.1" y1="522.0" x2="1433.2" y2="645.3"><stop offset="0.00" stop-color="#ffffff"/><stop offset="0.08" stop-color="#fbdeff"/><stop offset="0.18" stop-color="#f6b9ff"/><stop offset="0.30" stop-color="#f193ff"/><stop offset="0.45" stop-color="#ec6aff"/><stop offset="0.60" stop-color="#e847ff"/><stop offset="0.75" stop-color="#e429ff"/><stop offset="0.88" stop-color="#e113ff"/><stop offset="1.00" stop-color="#df00ff"/></linearGradient>
<linearGradient id="w53" gradientUnits="userSpaceOnUse" x1="1439.1" y1="522.0" x2="1429.2" y2="647.0"><stop offset="0.00" stop-color="#ffffff"/><stop offset="0.08" stop-color="#f9ddff"/><stop offset="0.18" stop-color="#f3b8ff"/><stop offset="0.30" stop-color="#ed92ff"/><stop offset="0.45" stop-color="#e669ff"/><stop offset="0.60" stop-color="#e146ff"/><stop offset="0.75" stop-color="#dc29ff"/><stop offset="0.88" stop-color="#d812ff"/><stop offset="1.00" stop-color="#d500ff"/></linearGradient>
<linearGradient id="w54" gradientUnits="userSpaceOnUse" x1="1439.1" y1="522.0" x2="1425.1" y2="648.7"><stop offset="0.00" stop-color="#ffffff"/><stop offset="0.08" stop-color="#f8ddff"/><stop offset="0.18" stop-color="#f1b8ff"/><stop offset="0.30" stop-color="#e991ff"/><stop offset="0.45" stop-color="#e168ff"/><stop offset="0.60" stop-color="#da46ff"/><stop offset="0.75" stop-color="#d428ff"/><stop offset="0.88" stop-color="#cf12ff"/><stop offset="1.00" stop-color="#cc00ff"/></linearGradient>
<linearGradient id="w55" gradientUnits="userSpaceOnUse" x1="1439.1" y1="522.0" x2="1420.8" y2="650.5"><stop offset="0.00" stop-color="#ffffff"/><stop offset="0.08" stop-color="#f7ddff"/><stop offset="0.18" stop-color="#eeb7ff"/><stop offset="0.30" stop-color="#e590ff"/><stop offset="0.45" stop-color="#db67ff"/><stop offset="0.60" stop-color="#d345ff"/><stop offset="0.75" stop-color="#cc28ff"/><stop offset="0.88" stop-color="#c712ff"/><stop offset="1.00" stop-color="#c200ff"/></linearGradient>
<linearGradient id="w56" gradientUnits="userSpaceOnUse" x1="1439.1" y1="522.0" x2="1416.3" y2="652.4"><stop offset="0.00" stop-color="#ffffff"/><stop offset="0.08" stop-color="#f5dcff"/><stop offset="0.18" stop-color="#ebb6ff"/><stop offset="0.30" stop-color="#e08fff"/><stop offset="0.45" stop-color="#d566ff"/><stop offset="0.60" stop-color="#cc44ff"/><stop offset="0.75" stop-color="#c427ff"/><stop offset="0.88" stop-color="#be12ff"/><stop offset="1.00" stop-color="#b900ff"/></linearGradient>
<linearGradient id="w57" gradientUnits="userSpaceOnUse" x1="1439.1" y1="522.0" x2="1411.6" y2="654.3"><stop offset="0.00" stop-color="#ffffff"/><stop offset="0.08" stop-color="#f4dcff"/><stop offset="0.18" stop-color="#e8b5ff"/><stop offset="0.30" stop-color="#dc8eff"/><stop offset="0.45" stop-color="#cf66ff"/><stop offset="0.60" stop-color="#c444ff"/><stop offset="0.75" stop-color="#bb27ff"/><stop offset="0.88" stop-color="#b512ff"/><stop offset="1.00" stop-color="#af00ff"/></linearGradient>
<linearGradient id="w58" gradientUnits="userSpaceOnUse" x1="1439.1" y1="522.0" x2="1406.8" y2="656.4"><stop offset="0.00" stop-color="#ffffff"/><stop offset="0.08" stop-color="#f2dbff"/><stop offset="0.18" stop-color="#e5b5ff"/><stop offset="0.30" stop-color="#d78dff"/><stop offset="0.45" stop-color="#c965ff"/><stop offset="0.60" stop-color="#bd43ff"/><stop offset="0.75" stop-color="#b326ff"/><stop offset="0.88" stop-color="#ab11ff"/><stop offset="1.00" stop-color="#a500ff"/></linearGradient>
<linearGradient id="w59" gradientUnits="userSpaceOnUse" x1="1439.1" y1="522.0" x2="1401.7" y2="658.5"><stop offset="0.00" stop-color="#ffffff"/><stop offset="0.08" stop-color="#f1dbff"/><stop offset="0.18" stop-color="#e2b4ff"/><stop offset="0.30" stop-color="#d28cff"/><stop offset="0.45" stop-color="#c264ff"/><stop offset="0.60" stop-color="#b542ff"/><stop offset="0.75" stop-color="#aa26ff"/><stop offset="0.88" stop-color="#a211ff"/><stop offset="1.00" stop-color="#9b00ff"/></linearGradient>
<linearGradient id="w60" gradientUnits="userSpaceOnUse" x1="1439.1" y1="522.0" x2="1396.4" y2="660.7"><stop offset="0.00" stop-color="#ffffff"/><stop offset="0.08" stop-color="#efdaff"/><stop offset="0.18" stop-color="#deb3ff"/><stop offset="0.30" stop-color="#cd8bff"/><stop offset="0.45" stop-color="#bc63ff"/><stop offset="0.60" stop-color="#ad41ff"/><stop offset="0.75" stop-color="#a125ff"/><stop offset="0.88" stop-color="#9811ff"/><stop offset="1.00" stop-color="#9100ff"/></linearGradient>
<linearGradient id="w61" gradientUnits="userSpaceOnUse" x1="1439.1" y1="522.0" x2="1390.7" y2="663.1"><stop offset="0.00" stop-color="#ffffff"/><stop offset="0.08" stop-color="#eddaff"/><stop offset="0.18" stop-color="#dbb2ff"/><stop offset="0.30" stop-color="#c88aff"/><stop offset="0.45" stop-color="#b562ff"/><stop offset="0.60" stop-color="#a540ff"/><stop offset="0.75" stop-color="#9825ff"/><stop offset="0.88" stop-color="#8f11ff"/><stop offset="1.00" stop-color="#8700ff"/></linearGradient>
<linearGradient id="w62" gradientUnits="userSpaceOnUse" x1="1439.1" y1="522.0" x2="1384.8" y2="665.6"><stop offset="0.00" stop-color="#ffffff"/><stop offset="0.08" stop-color="#ecd9ff"/><stop offset="0.18" stop-color="#d7b1ff"/><stop offset="0.30" stop-color="#c389ff"/><stop offset="0.45" stop-color="#ae61ff"/><stop offset="0.60" stop-color="#9d40ff"/><stop offset="0.75" stop-color="#8f24ff"/><stop offset="0.88" stop-color="#8510ff"/><stop offset="1.00" stop-color="#7c00ff"/></linearGradient>
<linearGradient id="w63" gradientUnits="userSpaceOnUse" x1="1439.1" y1="522.0" x2="1378.5" y2="668.2"><stop offset="0.00" stop-color="#ffffff"/><stop offset="0.08" stop-color="#ead9ff"/><stop offset="0.18" stop-color="#d3b0ff"/><stop offset="0.30" stop-color="#bd88ff"/><stop offset="0.45" stop-color="#a660ff"/><stop offset="0.60" stop-color="#943fff"/><stop offset="0.75" stop-color="#8524ff"/><stop offset="0.88" stop-color="#7a10ff"/><stop offset="1.00" stop-color="#7100ff"/></linearGradient>
<linearGradient id="w64" gradientUnits="userSpaceOnUse" x1="1439.1" y1="522.0" x2="1371.7" y2="671.1"><stop offset="0.00" stop-color="#ffffff"/><stop offset="0.08" stop-color="#e8d8ff"/><stop offset="0.18" stop-color="#cfafff"/><stop offset="0.30" stop-color="#b787ff"/><stop offset="0.45" stop-color="#9f5eff"/><stop offset="0.60" stop-color="#8b3eff"/><stop offset="0.75" stop-color="#7b23ff"/><stop offset="0.88" stop-color="#7010ff"/><stop offset="1.00" stop-color="#6600ff"/></linearGradient>
<linearGradient id="w65" gradientUnits="userSpaceOnUse" x1="1439.1" y1="522.0" x2="1364.5" y2="674.1"><stop offset="0.00" stop-color="#ffffff"/><stop offset="0.08" stop-color="#e5d7ff"/><stop offset="0.18" stop-color="#cbaeff"/><stop offset="0.30" stop-color="#b186ff"/><stop offset="0.45" stop-color="#975dff"/><stop offset="0.60" stop-color="#823dff"/><stop offset="0.75" stop-color="#7123ff"/><stop offset="0.88" stop-color="#650fff"/><stop offset="1.00" stop-color="#5b00ff"/></linearGradient>
<linearGradient id="w66" gradientUnits="userSpaceOnUse" x1="1439.1" y1="522.0" x2="1356.8" y2="677.3"><stop offset="0.00" stop-color="#ffffff"/><stop offset="0.08" stop-color="#e3d7ff"/><stop offset="0.18" stop-color="#c6adff"/><stop offset="0.30" stop-color="#aa84ff"/><stop offset="0.45" stop-color="#8f5cff"/><stop offset="0.60" stop-color="#793cff"/><stop offset="0.75" stop-color="#6722ff"/><stop offset="0.88" stop-color="#5a0fff"/><stop offset="1.00" stop-color="#4f00ff"/></linearGradient>
<linearGradient id="w67" gradientUnits="userSpaceOnUse" x1="1439.1" y1="522.0" x2="1348.4" y2="680.8"><stop offset="0.00" stop-color="#ffffff"/><stop offset="0.08" stop-color="#e1d6ff"/><stop offset="0.18" stop-color="#c1acff"/><stop offset="0.30" stop-color="#a383ff"/><stop offset="0.45" stop-color="#865bff"/><stop offset="0.60" stop-color="#6e3bff"/><stop offset="0.75" stop-color="#5c21ff"/><stop offset="0.88" stop-color="#4e0fff"/><stop offset="1.00" stop-color="#4300ff"/></linearGradient>
<linearGradient id="w68" gradientUnits="userSpaceOnUse" x1="1439.1" y1="522.0" x2="1339.4" y2="684.6"><stop offset="0.00" stop-color="#ffffff"/><stop offset="0.08" stop-color="#ded5ff"/><stop offset="0.18" stop-color="#bcaaff"/><stop offset="0.30" stop-color="#9c81ff"/><stop offset="0.45" stop-color="#7d59ff"/><stop offset="0.60" stop-color="#643aff"/><stop offset="0.75" stop-color="#5021ff"/><stop offset="0.88" stop-color="#420eff"/><stop offset="1.00" stop-color="#3600ff"/></linearGradient>
<linearGradient id="w69" gradientUnits="userSpaceOnUse" x1="1439.1" y1="522.0" x2="1329.5" y2="688.8"><stop offset="0.00" stop-color="#ffffff"/><stop offset="0.08" stop-color="#dbd4ff"/><stop offset="0.18" stop-color="#b7a9ff"/><stop offset="0.30" stop-color="#9480ff"/><stop offset="0.45" stop-color="#7358ff"/><stop offset="0.60" stop-color="#5939ff"/><stop offset="0.75" stop-color="#4420ff"/><stop offset="0.88" stop-color="#350eff"/><stop offset="1.00" stop-color="#2900ff"/></linearGradient>
<linearGradient id="w70" gradientUnits="userSpaceOnUse" x1="1439.1" y1="522.0" x2="1318.6" y2="693.3"><stop offset="0.00" stop-color="#ffffff"/><stop offset="0.08" stop-color="#d8d3ff"/><stop offset="0.18" stop-color="#b1a7ff"/><stop offset="0.30" stop-color="#8c7eff"/><stop offset="0.45" stop-color="#6856ff"/><stop offset="0.60" stop-color="#4d38ff"/><stop offset="0.75" stop-color="#371fff"/><stop offset="0.88" stop-color="#280eff"/><stop offset="1.00" stop-color="#1c00ff"/></linearGradient>
<linearGradient id="w71" gradientUnits="userSpaceOnUse" x1="1439.1" y1="522.0" x2="1306.6" y2="698.4"><stop offset="0.00" stop-color="#ffffff"/><stop offset="0.08" stop-color="#d4d2ff"/><stop offset="0.18" stop-color="#aaa6ff"/><stop offset="0.30" stop-color="#837cff"/><stop offset="0.45" stop-color="#5d55ff"/><stop offset="0.60" stop-color="#4136ff"/><stop offset="0.75" stop-color="#2a1eff"/><stop offset="0.88" stop-color="#1a0dff"/><stop offset="1.00" stop-color="#0d00ff"/></linearGradient>
<linearGradient id="w72" gradientUnits="userSpaceOnUse" x1="1439.1" y1="522.0" x2="1297.5" y2="702.2"><stop offset="0.00" stop-color="#ffffff"/><stop offset="0.08" stop-color="#d2d1ff"/><stop offset="0.18" stop-color="#a5a4ff"/><stop offset="0.30" stop-color="#7c7bff"/><stop offset="0.45" stop-color="#5553ff"/><stop offset="0.60" stop-color="#3835ff"/><stop offset="0.75" stop-color="#201eff"/><stop offset="0.88" stop-color="#100dff"/><stop offset="1.00" stop-color="#0300ff"/></linearGradient>
<linearGradient id="w73" gradientUnits="userSpaceOnUse" x1="1439.1" y1="522.0" x2="1297.3" y2="696.8"><stop offset="0.00" stop-color="#ffffff"/><stop offset="0.08" stop-color="#d2d3ff"/><stop offset="0.18" stop-color="#a5a7ff"/><stop offset="0.30" stop-color="#7c7eff"/><stop offset="0.45" stop-color="#5457ff"/><stop offset="0.60" stop-color="#363aff"/><stop offset="0.75" stop-color="#1e22ff"/><stop offset="0.88" stop-color="#0d12ff"/><stop offset="1.00" stop-color="#0005ff"/></linearGradient>
<linearGradient id="w74" gradientUnits="userSpaceOnUse" x1="1439.1" y1="522.0" x2="1302.9" y2="681.4"><stop offset="0.00" stop-color="#ffffff"/><stop offset="0.08" stop-color="#d3d6ff"/><stop offset="0.18" stop-color="#a8adff"/><stop offset="0.30" stop-color="#7e87ff"/><stop offset="0.45" stop-color="#5762ff"/><stop offset="0.60" stop-color="#3845ff"/><stop offset="0.75" stop-color="#1f2eff"/><stop offset="0.88" stop-color="#0e1dff"/><stop offset="1.00" stop-color="#0010ff"/></linearGradient>
<linearGradient id="w75" gradientUnits="userSpaceOnUse" x1="1439.1" y1="522.0" x2="1308.9" y2="665.0"><stop offset="0.00" stop-color="#ffffff"/><stop offset="0.08" stop-color="#d5daff"/><stop offset="0.18" stop-color="#aab4ff"/><stop offset="0.30" stop-color="#8190ff"/><stop offset="0.45" stop-color="#596dff"/><stop offset="0.60" stop-color="#3a51ff"/><stop offset="0.75" stop-color="#213bff"/><stop offset="0.88" stop-color="#0e2bff"/><stop offset="1.00" stop-color="#001eff"/></linearGradient>
<linearGradient id="w76" gradientUnits="userSpaceOnUse" x1="1439.1" y1="522.0" x2="1314.0" y2="651.0"><stop offset="0.00" stop-color="#ffffff"/><stop offset="0.08" stop-color="#d7ddff"/><stop offset="0.18" stop-color="#adbbff"/><stop offset="0.30" stop-color="#8499ff"/><stop offset="0.45" stop-color="#5c78ff"/><stop offset="0.60" stop-color="#3c5dff"/><stop offset="0.75" stop-color="#2247ff"/><stop offset="0.88" stop-color="#0f38ff"/><stop offset="1.00" stop-color="#002bff"/></linearGradient>
<linearGradient id="w77" gradientUnits="userSpaceOnUse" x1="1439.1" y1="522.0" x2="1318.4" y2="638.9"><stop offset="0.00" stop-color="#ffffff"/><stop offset="0.08" stop-color="#d8e0ff"/><stop offset="0.18" stop-color="#afc0ff"/><stop offset="0.30" stop-color="#87a1ff"/><stop offset="0.45" stop-color="#5e81ff"/><stop offset="0.60" stop-color="#3e68ff"/><stop offset="0.75" stop-color="#2353ff"/><stop offset="0.88" stop-color="#1044ff"/><stop offset="1.00" stop-color="#0037ff"/></linearGradient>
<linearGradient id="w78" gradientUnits="userSpaceOnUse" x1="1439.1" y1="522.0" x2="1322.3" y2="628.2"><stop offset="0.00" stop-color="#ffffff"/><stop offset="0.08" stop-color="#d9e3ff"/><stop offset="0.18" stop-color="#b1c5ff"/><stop offset="0.30" stop-color="#89a8ff"/><stop offset="0.45" stop-color="#618aff"/><stop offset="0.60" stop-color="#4072ff"/><stop offset="0.75" stop-color="#245eff"/><stop offset="0.88" stop-color="#104fff"/><stop offset="1.00" stop-color="#0043ff"/></linearGradient>
<linearGradient id="w79" gradientUnits="userSpaceOnUse" x1="1439.1" y1="522.0" x2="1325.8" y2="618.7"><stop offset="0.00" stop-color="#ffffff"/><stop offset="0.08" stop-color="#dae5ff"/><stop offset="0.18" stop-color="#b3caff"/><stop offset="0.30" stop-color="#8bafff"/><stop offset="0.45" stop-color="#6392ff"/><stop offset="0.60" stop-color="#417bff"/><stop offset="0.75" stop-color="#2568ff"/><stop offset="0.88" stop-color="#115aff"/><stop offset="1.00" stop-color="#004eff"/></linearGradient>
<linearGradient id="w80" gradientUnits="userSpaceOnUse" x1="1439.1" y1="522.0" x2="1328.9" y2="610.2"><stop offset="0.00" stop-color="#ffffff"/><stop offset="0.08" stop-color="#dbe8ff"/><stop offset="0.18" stop-color="#b4ceff"/><stop offset="0.30" stop-color="#8db5ff"/><stop offset="0.45" stop-color="#649aff"/><stop offset="0.60" stop-color="#4384ff"/><stop offset="0.75" stop-color="#2671ff"/><stop offset="0.88" stop-color="#1164ff"/><stop offset="1.00" stop-color="#0058ff"/></linearGradient>
<linearGradient id="w81" gradientUnits="userSpaceOnUse" x1="1439.1" y1="522.0" x2="1331.7" y2="602.6"><stop offset="0.00" stop-color="#ffffff"/><stop offset="0.08" stop-color="#dce9ff"/><stop offset="0.18" stop-color="#b6d2ff"/><stop offset="0.30" stop-color="#8fbaff"/><stop offset="0.45" stop-color="#66a1ff"/><stop offset="0.60" stop-color="#448cff"/><stop offset="0.75" stop-color="#277bff"/><stop offset="0.88" stop-color="#126dff"/><stop offset="1.00" stop-color="#0062ff"/></linearGradient>
<linearGradient id="w82" gradientUnits="userSpaceOnUse" x1="1439.1" y1="522.0" x2="1334.2" y2="595.6"><stop offset="0.00" stop-color="#ffffff"/><stop offset="0.08" stop-color="#ddebff"/><stop offset="0.18" stop-color="#b7d6ff"/><stop offset="0.30" stop-color="#91bfff"/><stop offset="0.45" stop-color="#68a8ff"/><stop offset="0.60" stop-color="#4594ff"/><stop offset="0.75" stop-color="#2883ff"/><stop offset="0.88" stop-color="#1276ff"/><stop offset="1.00" stop-color="#006cff"/></linearGradient>
<linearGradient id="w83" gradientUnits="userSpaceOnUse" x1="1439.1" y1="522.0" x2="1336.5" y2="589.3"><stop offset="0.00" stop-color="#ffffff"/><stop offset="0.08" stop-color="#ddedff"/><stop offset="0.18" stop-color="#b9d9ff"/><stop offset="0.30" stop-color="#92c4ff"/><stop offset="0.45" stop-color="#69aeff"/><stop offset="0.60" stop-color="#479bff"/><stop offset="0.75" stop-color="#298bff"/><stop offset="0.88" stop-color="#137fff"/><stop offset="1.00" stop-color="#0075ff"/></linearGradient>
<linearGradient id="w84" gradientUnits="userSpaceOnUse" x1="1439.1" y1="522.0" x2="1338.6" y2="583.5"><stop offset="0.00" stop-color="#ffffff"/><stop offset="0.08" stop-color="#deeeff"/><stop offset="0.18" stop-color="#badcff"/><stop offset="0.30" stop-color="#94c9ff"/><stop offset="0.45" stop-color="#6bb4ff"/><stop offset="0.60" stop-color="#48a3ff"/><stop offset="0.75" stop-color="#2a93ff"/><stop offset="0.88" stop-color="#1388ff"/><stop offset="1.00" stop-color="#007eff"/></linearGradient>
<linearGradient id="w85" gradientUnits="userSpaceOnUse" x1="1439.1" y1="522.0" x2="1340.6" y2="578.1"><stop offset="0.00" stop-color="#ffffff"/><stop offset="0.08" stop-color="#dff0ff"/><stop offset="0.18" stop-color="#bbdfff"/><stop offset="0.30" stop-color="#95cdff"/><stop offset="0.45" stop-color="#6cbaff"/><stop offset="0.60" stop-color="#49a9ff"/><stop offset="0.75" stop-color="#2b9bff"/><stop offset="0.88" stop-color="#1390ff"/><stop offset="1.00" stop-color="#0087ff"/></linearGradient>
<linearGradient id="w86" gradientUnits="userSpaceOnUse" x1="1439.1" y1="522.0" x2="1342.4" y2="573.1"><stop offset="0.00" stop-color="#ffffff"/><stop offset="0.08" stop-color="#dff1ff"/><stop offset="0.18" stop-color="#bce2ff"/><stop offset="0.30" stop-color="#96d1ff"/><stop offset="0.45" stop-color="#6ebfff"/><stop offset="0.60" stop-color="#4ab0ff"/><stop offset="0.75" stop-color="#2ba2ff"/><stop offset="0.88" stop-color="#1498ff"/><stop offset="1.00" stop-color="#008fff"/></linearGradient>
<linearGradient id="w87" gradientUnits="userSpaceOnUse" x1="1439.1" y1="522.0" x2="1344.1" y2="568.5"><stop offset="0.00" stop-color="#ffffff"/><stop offset="0.08" stop-color="#e0f2ff"/><stop offset="0.18" stop-color="#bde4ff"/><stop offset="0.30" stop-color="#98d5ff"/><stop offset="0.45" stop-color="#6fc4ff"/><stop offset="0.60" stop-color="#4bb6ff"/><stop offset="0.75" stop-color="#2ca9ff"/><stop offset="0.88" stop-color="#14a0ff"/><stop offset="1.00" stop-color="#0097ff"/></linearGradient>
<linearGradient id="w88" gradientUnits="userSpaceOnUse" x1="1439.1" y1="522.0" x2="1345.7" y2="564.1"><stop offset="0.00" stop-color="#ffffff"/><stop offset="0.08" stop-color="#e0f4ff"/><stop offset="0.18" stop-color="#bee7ff"/><stop offset="0.30" stop-color="#99d9ff"/><stop offset="0.45" stop-color="#70c9ff"/><stop offset="0.60" stop-color="#4cbcff"/><stop offset="0.75" stop-color="#2db0ff"/><stop offset="0.88" stop-color="#14a7ff"/><stop offset="1.00" stop-color="#009fff"/></linearGradient>
<linearGradient id="w89" gradientUnits="userSpaceOnUse" x1="1439.1" y1="522.0" x2="1347.2" y2="560.0"><stop offset="0.00" stop-color="#ffffff"/><stop offset="0.08" stop-color="#e1f5ff"/><stop offset="0.18" stop-color="#bfe9ff"/><stop offset="0.30" stop-color="#9adcff"/><stop offset="0.45" stop-color="#71ceff"/><stop offset="0.60" stop-color="#4dc2ff"/><stop offset="0.75" stop-color="#2eb7ff"/><stop offset="0.88" stop-color="#15aeff"/><stop offset="1.00" stop-color="#00a7ff"/></linearGradient>
<linearGradient id="w90" gradientUnits="userSpaceOnUse" x1="1439.1" y1="522.0" x2="1348.6" y2="556.1"><stop offset="0.00" stop-color="#ffffff"/><stop offset="0.08" stop-color="#e1f6ff"/><stop offset="0.18" stop-color="#c0ebff"/><stop offset="0.30" stop-color="#9bdfff"/><stop offset="0.45" stop-color="#72d3ff"/><stop offset="0.60" stop-color="#4ec7ff"/><stop offset="0.75" stop-color="#2ebdff"/><stop offset="0.88" stop-color="#15b5ff"/><stop offset="1.00" stop-color="#00afff"/></linearGradient>
<linearGradient id="w91" gradientUnits="userSpaceOnUse" x1="1439.1" y1="522.0" x2="1350.0" y2="552.5"><stop offset="0.00" stop-color="#ffffff"/><stop offset="0.08" stop-color="#e2f7ff"/><stop offset="0.18" stop-color="#c0edff"/><stop offset="0.30" stop-color="#9ce3ff"/><stop offset="0.45" stop-color="#73d7ff"/><stop offset="0.60" stop-color="#4fcdff"/><stop offset="0.75" stop-color="#2fc3ff"/><stop offset="0.88" stop-color="#16bcff"/><stop offset="1.00" stop-color="#00b6ff"/></linearGradient>
<linearGradient id="w92" gradientUnits="userSpaceOnUse" x1="1439.1" y1="522.0" x2="1351.2" y2="549.0"><stop offset="0.00" stop-color="#ffffff"/><stop offset="0.08" stop-color="#e2f8ff"/><stop offset="0.18" stop-color="#c1efff"/><stop offset="0.30" stop-color="#9de6ff"/><stop offset="0.45" stop-color="#74dbff"/><stop offset="0.60" stop-color="#50d2ff"/><stop offset="0.75" stop-color="#30caff"/><stop offset="0.88" stop-color="#16c3ff"/><stop offset="1.00" stop-color="#00bdff"/></linearGradient>
<linearGradient id="w93" gradientUnits="userSpaceOnUse" x1="1439.1" y1="522.0" x2="1352.5" y2="545.6"><stop offset="0.00" stop-color="#ffffff"/><stop offset="0.08" stop-color="#e3f8ff"/><stop offset="0.18" stop-color="#c2f1ff"/><stop offset="0.30" stop-color="#9ee9ff"/><stop offset="0.45" stop-color="#75dfff"/><stop offset="0.60" stop-color="#51d7ff"/><stop offset="0.75" stop-color="#30d0ff"/><stop offset="0.88" stop-color="#16caff"/><stop offset="1.00" stop-color="#00c5ff"/></linearGradient>
<linearGradient id="w94" gradientUnits="userSpaceOnUse" x1="1439.1" y1="522.0" x2="1353.6" y2="542.5"><stop offset="0.00" stop-color="#ffffff"/><stop offset="0.08" stop-color="#e3f9ff"/><stop offset="0.18" stop-color="#c3f3ff"/><stop offset="0.30" stop-color="#9fecff"/><stop offset="0.45" stop-color="#76e3ff"/><stop offset="0.60" stop-color="#52dcff"/><stop offset="0.75" stop-color="#31d5ff"/><stop offset="0.88" stop-color="#16d0ff"/><stop offset="1.00" stop-color="#00ccff"/></linearGradient>
<linearGradient id="w95" gradientUnits="userSpaceOnUse" x1="1439.1" y1="522.0" x2="1354.7" y2="539.4"><stop offset="0.00" stop-color="#ffffff"/><stop offset="0.08" stop-color="#e3faff"/><stop offset="0.18" stop-color="#c3f5ff"/><stop offset="0.30" stop-color="#a0eeff"/><stop offset="0.45" stop-color="#77e7ff"/><stop offset="0.60" stop-color="#53e1ff"/><stop offset="0.75" stop-color="#31dbff"/><stop offset="0.88" stop-color="#17d7ff"/><stop offset="1.00" stop-color="#00d3ff"/></linearGradient>
<linearGradient id="w96" gradientUnits="userSpaceOnUse" x1="1439.1" y1="522.0" x2="1355.8" y2="536.5"><stop offset="0.00" stop-color="#ffffff"/><stop offset="0.08" stop-color="#e4fbff"/><stop offset="0.18" stop-color="#c4f6ff"/><stop offset="0.30" stop-color="#a1f1ff"/><stop offset="0.45" stop-color="#78ebff"/><stop offset="0.60" stop-color="#53e6ff"/><stop offset="0.75" stop-color="#32e1ff"/><stop offset="0.88" stop-color="#17ddff"/><stop offset="1.00" stop-color="#00daff"/></linearGradient>
<linearGradient id="w97" gradientUnits="userSpaceOnUse" x1="1439.1" y1="522.0" x2="1356.8" y2="533.7"><stop offset="0.00" stop-color="#ffffff"/><stop offset="0.08" stop-color="#e4fcff"/><stop offset="0.18" stop-color="#c5f8ff"/><stop offset="0.30" stop-color="#a2f4ff"/><stop offset="0.45" stop-color="#79efff"/><stop offset="0.60" stop-color="#54ebff"/><stop offset="0.75" stop-color="#33e7ff"/><stop offset="0.88" stop-color="#17e3ff"/><stop offset="1.00" stop-color="#00e1ff"/></linearGradient>
<linearGradient id="w98" gradientUnits="userSpaceOnUse" x1="1439.1" y1="522.0" x2="1357.8" y2="530.9"><stop offset="0.00" stop-color="#ffffff"/><stop offset="0.08" stop-color="#e4fdff"/><stop offset="0.18" stop-color="#c5faff"/><stop offset="0.30" stop-color="#a2f6ff"/><stop offset="0.45" stop-color="#7af3ff"/><stop offset="0.60" stop-color="#55efff"/><stop offset="0.75" stop-color="#33ecff"/><stop offset="0.88" stop-color="#18eaff"/><stop offset="1.00" stop-color="#00e7ff"/></linearGradient>
<linearGradient id="w99" gradientUnits="userSpaceOnUse" x1="1439.1" y1="522.0" x2="1358.8" y2="528.3"><stop offset="0.00" stop-color="#ffffff"/><stop offset="0.08" stop-color="#e5fdff"/><stop offset="0.18" stop-color="#c6fbff"/><stop offset="0.30" stop-color="#a3f9ff"/><stop offset="0.45" stop-color="#7bf6ff"/><stop offset="0.60" stop-color="#56f4ff"/><stop offset="0.75" stop-color="#34f2ff"/><stop offset="0.88" stop-color="#18f0ff"/><stop offset="1.00" stop-color="#00eeff"/></linearGradient>
<linearGradient id="w100" gradientUnits="userSpaceOnUse" x1="1439.1" y1="522.0" x2="1359.7" y2="525.7"><stop offset="0.00" stop-color="#ffffff"/><stop offset="0.08" stop-color="#e5feff"/><stop offset="0.18" stop-color="#c7fdff"/><stop offset="0.30" stop-color="#a4fbff"/><stop offset="0.45" stop-color="#7cfaff"/><stop offset="0.60" stop-color="#57f8ff"/><stop offset="0.75" stop-color="#34f7ff"/><stop offset="0.88" stop-color="#18f6ff"/><stop offset="1.00" stop-color="#00f5ff"/></linearGradient>
<linearGradient id="w101" gradientUnits="userSpaceOnUse" x1="1439.1" y1="522.0" x2="1360.7" y2="523.2"><stop offset="0.00" stop-color="#ffffff"/><stop offset="0.08" stop-color="#e5ffff"/><stop offset="0.18" stop-color="#c7feff"/><stop offset="0.30" stop-color="#a5feff"/><stop offset="0.45" stop-color="#7dfdff"/><stop offset="0.60" stop-color="#57fdff"/><stop offset="0.75" stop-color="#35fdff"/><stop offset="0.88" stop-color="#19fcff"/><stop offset="1.00" stop-color="#00fcff"/></linearGradient>
<linearGradient id="w102" gradientUnits="userSpaceOnUse" x1="1439.1" y1="522.0" x2="1361.5" y2="520.7"><stop offset="0.00" stop-color="#ffffff"/><stop offset="0.08" stop-color="#e5ffff"/><stop offset="0.18" stop-color="#c7fffe"/><stop offset="0.30" stop-color="#a5fffe"/><stop offset="0.45" stop-color="#7dfffd"/><stop offset="0.60" stop-color="#57fffc"/><stop offset="0.75" stop-color="#35fffc"/><stop offset="0.88" stop-color="#19fffc"/><stop offset="1.00" stop-color="#00fffb"/></linearGradient>
<linearGradient id="w103" gradientUnits="userSpaceOnUse" x1="1439.1" y1="522.0" x2="1362.4" y2="518.3"><stop offset="0.00" stop-color="#ffffff"/><stop offset="0.08" stop-color="#e5fffe"/><stop offset="0.18" stop-color="#c6fffd"/><stop offset="0.30" stop-color="#a4fffb"/><stop offset="0.45" stop-color="#7cfffa"/><stop offset="0.60" stop-color="#57fff8"/><stop offset="0.75" stop-color="#34fff7"/><stop offset="0.88" stop-color="#18fff6"/><stop offset="1.00" stop-color="#00fff5"/></linearGradient>
<linearGradient id="w104" gradientUnits="userSpaceOnUse" x1="1439.1" y1="522.0" x2="1363.3" y2="516.0"><stop offset="0.00" stop-color="#ffffff"/><stop offset="0.08" stop-color="#e5fffd"/><stop offset="0.18" stop-color="#c6fffb"/><stop offset="0.30" stop-color="#a3fff9"/><stop offset="0.45" stop-color="#7bfff6"/><stop offset="0.60" stop-color="#56fff4"/><stop offset="0.75" stop-color="#34fff2"/><stop offset="0.88" stop-color="#18fff0"/><stop offset="1.00" stop-color="#00ffee"/></linearGradient>
<linearGradient id="w105" gradientUnits="userSpaceOnUse" x1="1439.1" y1="522.0" x2="1364.1" y2="513.7"><stop offset="0.00" stop-color="#ffffff"/><stop offset="0.08" stop-color="#e5fffd"/><stop offset="0.18" stop-color="#c5fffa"/><stop offset="0.30" stop-color="#a2fff7"/><stop offset="0.45" stop-color="#7afff3"/><stop offset="0.60" stop-color="#55fff0"/><stop offset="0.75" stop-color="#33ffed"/><stop offset="0.88" stop-color="#18ffeb"/><stop offset="1.00" stop-color="#00ffe8"/></linearGradient>
<linearGradient id="w106" gradientUnits="userSpaceOnUse" x1="1439.1" y1="522.0" x2="1365.0" y2="511.4"><stop offset="0.00" stop-color="#ffffff"/><stop offset="0.08" stop-color="#e4fffc"/><stop offset="0.18" stop-color="#c5fff9"/><stop offset="0.30" stop-color="#a2fff5"/><stop offset="0.45" stop-color="#79fff0"/><stop offset="0.60" stop-color="#55ffec"/><stop offset="0.75" stop-color="#33ffe8"/><stop offset="0.88" stop-color="#17ffe5"/><stop offset="1.00" stop-color="#00ffe3"/></linearGradient>
<linearGradient id="w107" gradientUnits="userSpaceOnUse" x1="1439.1" y1="522.0" x2="1365.8" y2="509.2"><stop offset="0.00" stop-color="#ffffff"/><stop offset="0.08" stop-color="#e4fffb"/><stop offset="0.18" stop-color="#c4fff7"/><stop offset="0.30" stop-color="#a1fff3"/><stop offset="0.45" stop-color="#79ffed"/><stop offset="0.60" stop-color="#54ffe8"/><stop offset="0.75" stop-color="#32ffe4"/><stop offset="0.88" stop-color="#17ffe0"/><stop offset="1.00" stop-color="#00ffdd"/></linearGradient>
<linearGradient id="w108" gradientUnits="userSpaceOnUse" x1="1439.1" y1="522.0" x2="1366.6" y2="506.9"><stop offset="0.00" stop-color="#ffffff"/><stop offset="0.08" stop-color="#e4fffb"/><stop offset="0.18" stop-color="#c4fff6"/><stop offset="0.30" stop-color="#a0fff0"/><stop offset="0.45" stop-color="#78ffea"/><stop offset="0.60" stop-color="#53ffe5"/><stop offset="0.75" stop-color="#32ffdf"/><stop offset="0.88" stop-color="#17ffdb"/><stop offset="1.00" stop-color="#00ffd8"/></linearGradient>
<linearGradient id="w109" gradientUnits="userSpaceOnUse" x1="1439.1" y1="522.0" x2="1367.4" y2="504.7"><stop offset="0.00" stop-color="#ffffff"/><stop offset="0.08" stop-color="#e3fffa"/><stop offset="0.18" stop-color="#c3fff5"/><stop offset="0.30" stop-color="#a0ffee"/><stop offset="0.45" stop-color="#77ffe7"/><stop offset="0.60" stop-color="#53ffe1"/><stop offset="0.75" stop-color="#31ffdb"/><stop offset="0.88" stop-color="#17ffd7"/><stop offset="1.00" stop-color="#00ffd3"/></linearGradient>
<linearGradient id="w110" gradientUnits="userSpaceOnUse" x1="1439.1" y1="522.0" x2="1368.2" y2="502.6"><stop offset="0.00" stop-color="#ffffff"/><stop offset="0.08" stop-color="#e3fffa"/><stop offset="0.18" stop-color="#c3fff3"/><stop offset="0.30" stop-color="#9fffec"/><stop offset="0.45" stop-color="#77ffe5"/><stop offset="0.60" stop-color="#52ffdd"/><stop offset="0.75" stop-color="#31ffd7"/><stop offset="0.88" stop-color="#17ffd2"/><stop offset="1.00" stop-color="#00ffce"/></linearGradient>
<linearGradient id="w111" gradientUnits="userSpaceOnUse" x1="1439.1" y1="522.0" x2="1369.0" y2="500.4"><stop offset="0.00" stop-color="#ffffff"/><stop offset="0.08" stop-color="#e3fff9"/><stop offset="0.18" stop-color="#c2fff2"/><stop offset="0.30" stop-color="#9effea"/><stop offset="0.45" stop-color="#76ffe2"/><stop offset="0.60" stop-color="#51ffda"/><stop offset="0.75" stop-color="#30ffd3"/><stop offset="0.88" stop-color="#16ffcd"/><stop offset="1.00" stop-color="#00ffc9"/></linearGradient>
<linearGradient id="w112" gradientUnits="userSpaceOnUse" x1="1439.1" y1="522.0" x2="1369.8" y2="498.2"><stop offset="0.00" stop-color="#ffffff"/><stop offset="0.08" stop-color="#e3fff8"/><stop offset="0.18" stop-color="#c2fff1"/><stop offset="0.30" stop-color="#9effe8"/><stop offset="0.45" stop-color="#75ffdf"/><stop offset="0.60" stop-color="#51ffd7"/><stop offset="0.75" stop-color="#30ffcf"/><stop offset="0.88" stop-color="#16ffc9"/><stop offset="1.00" stop-color="#00ffc4"/></linearGradient>
<linearGradient id="w113" gradientUnits="userSpaceOnUse" x1="1439.1" y1="522.0" x2="1370.6" y2="496.1"><stop offset="0.00" stop-color="#ffffff"/><stop offset="0.08" stop-color="#e2fff8"/><stop offset="0.18" stop-color="#c1fff0"/><stop offset="0.30" stop-color="#9dffe7"/><stop offset="0.45" stop-color="#75ffdc"/><stop offset="0.60" stop-color="#50ffd3"/><stop offset="0.75" stop-color="#30ffcb"/><stop offset="0.88" stop-color="#16ffc5"/><stop offset="1.00" stop-color="#00ffbf"/></linearGradient>
<linearGradient id="w114" gradientUnits="userSpaceOnUse" x1="1439.1" y1="522.0" x2="1371.3" y2="493.9"><stop offset="0.00" stop-color="#ffffff"/><stop offset="0.08" stop-color="#e2fff7"/><stop offset="0.18" stop-color="#c1ffee"/><stop offset="0.30" stop-color="#9dffe5"/><stop offset="0.45" stop-color="#74ffda"/><stop offset="0.60" stop-color="#50ffd0"/><stop offset="0.75" stop-color="#2fffc7"/><stop offset="0.88" stop-color="#16ffc0"/><stop offset="1.00" stop-color="#00ffbb"/></linearGradient>
<linearGradient id="w115" gradientUnits="userSpaceOnUse" x1="1439.1" y1="522.0" x2="1372.1" y2="491.7"><stop offset="0.00" stop-color="#ffffff"/><stop offset="0.08" stop-color="#e2fff7"/><stop offset="0.18" stop-color="#c0ffed"/><stop offset="0.30" stop-color="#9cffe3"/><stop offset="0.45" stop-color="#73ffd7"/><stop offset="0.60" stop-color="#4fffcd"/><stop offset="0.75" stop-color="#2fffc3"/><stop offset="0.88" stop-color="#15ffbc"/><stop offset="1.00" stop-color="#00ffb6"/></linearGradient>
<linearGradient id="w116" gradientUnits="userSpaceOnUse" x1="1439.1" y1="522.0" x2="1372.9" y2="489.6"><stop offset="0.00" stop-color="#ffffff"/><stop offset="0.08" stop-color="#e2fff6"/><stop offset="0.18" stop-color="#c0ffec"/><stop offset="0.30" stop-color="#9bffe1"/><stop offset="0.45" stop-color="#73ffd4"/><stop offset="0.60" stop-color="#4fffca"/><stop offset="0.75" stop-color="#2effc0"/><stop offset="0.88" stop-color="#15ffb8"/><stop offset="1.00" stop-color="#00ffb2"/></linearGradient>
<linearGradient id="w117" gradientUnits="userSpaceOnUse" x1="1439.1" y1="522.0" x2="1373.7" y2="487.4"><stop offset="0.00" stop-color="#ffffff"/><stop offset="0.08" stop-color="#e1fff6"/><stop offset="0.18" stop-color="#bfffeb"/><stop offset="0.30" stop-color="#9bffdf"/><stop offset="0.45" stop-color="#72ffd2"/><stop offset="0.60" stop-color="#4effc6"/><stop offset="0.75" stop-color="#2effbc"/><stop offset="0.88" stop-color="#15ffb4"/><stop offset="1.00" stop-color="#00ffad"/></linearGradient>
<linearGradient id="w118" gradientUnits="userSpaceOnUse" x1="1439.1" y1="522.0" x2="1374.5" y2="485.2"><stop offset="0.00" stop-color="#ffffff"/><stop offset="0.08" stop-color="#e1fff5"/><stop offset="0.18" stop-color="#bfffe9"/><stop offset="0.30" stop-color="#9affdd"/><stop offset="0.45" stop-color="#71ffcf"/><stop offset="0.60" stop-color="#4dffc3"/><stop offset="0.75" stop-color="#2effb8"/><stop offset="0.88" stop-color="#15ffb0"/><stop offset="1.00" stop-color="#00ffa9"/></linearGradient>
<linearGradient id="w119" gradientUnits="userSpaceOnUse" x1="1439.1" y1="522.0" x2="1375.4" y2="482.9"><stop offset="0.00" stop-color="#ffffff"/><stop offset="0.08" stop-color="#e1fff4"/><stop offset="0.18" stop-color="#beffe8"/><stop offset="0.30" stop-color="#99ffdb"/><stop offset="0.45" stop-color="#71ffcd"/><stop offset="0.60" stop-color="#4dffc0"/><stop offset="0.75" stop-color="#2dffb5"/><stop offset="0.88" stop-color="#15ffac"/><stop offset="1.00" stop-color="#00ffa5"/></linearGradient>
<linearGradient id="w120" gradientUnits="userSpaceOnUse" x1="1439.1" y1="522.0" x2="1376.2" y2="480.7"><stop offset="0.00" stop-color="#ffffff"/><stop offset="0.08" stop-color="#e1fff4"/><stop offset="0.18" stop-color="#beffe7"/><stop offset="0.30" stop-color="#99ffd9"/><stop offset="0.45" stop-color="#70ffca"/><stop offset="0.60" stop-color="#4cffbd"/><stop offset="0.75" stop-color="#2dffb1"/><stop offset="0.88" stop-color="#14ffa8"/><stop offset="1.00" stop-color="#00ffa0"/></linearGradient>
<linearGradient id="w121" gradientUnits="userSpaceOnUse" x1="1439.1" y1="522.0" x2="1377.0" y2="478.4"><stop offset="0.00" stop-color="#ffffff"/><stop offset="0.08" stop-color="#e0fff3"/><stop offset="0.18" stop-color="#bdffe6"/><stop offset="0.30" stop-color="#98ffd7"/><stop offset="0.45" stop-color="#6fffc7"/><stop offset="0.60" stop-color="#4cffba"/><stop offset="0.75" stop-color="#2dffad"/><stop offset="0.88" stop-color="#14ffa4"/><stop offset="1.00" stop-color="#00ff9c"/></linearGradient>
<linearGradient id="w122" gradientUnits="userSpaceOnUse" x1="1439.1" y1="522.0" x2="1377.9" y2="476.0"><stop offset="0.00" stop-color="#ffffff"/><stop offset="0.08" stop-color="#e0fff3"/><stop offset="0.18" stop-color="#bdffe4"/><stop offset="0.30" stop-color="#98ffd5"/><stop offset="0.45" stop-color="#6fffc5"/><stop offset="0.60" stop-color="#4bffb6"/><stop offset="0.75" stop-color="#2cffaa"/><stop offset="0.88" stop-color="#14ffa0"/><stop offset="1.00" stop-color="#00ff98"/></linearGradient>
<linearGradient id="w123" gradientUnits="userSpaceOnUse" x1="1439.1" y1="522.0" x2="1378.7" y2="473.6"><stop offset="0.00" stop-color="#ffffff"/><stop offset="0.08" stop-color="#e0fff2"/><stop offset="0.18" stop-color="#bcffe3"/><stop offset="0.30" stop-color="#97ffd3"/><stop offset="0.45" stop-color="#6effc2"/><stop offset="0.60" stop-color="#4bffb3"/><stop offset="0.75" stop-color="#2cffa6"/><stop offset="0.88" stop-color="#14ff9c"/><stop offset="1.00" stop-color="#00ff94"/></linearGradient>
<linearGradient id="w124" gradientUnits="userSpaceOnUse" x1="1439.1" y1="522.0" x2="1379.6" y2="471.2"><stop offset="0.00" stop-color="#ffffff"/><stop offset="0.08" stop-color="#dffff1"/><stop offset="0.18" stop-color="#bcffe2"/><stop offset="0.30" stop-color="#96ffd1"/><stop offset="0.45" stop-color="#6dffbf"/><stop offset="0.60" stop-color="#4affb0"/><stop offset="0.75" stop-color="#2bffa3"/><stop offset="0.88" stop-color="#14ff98"/><stop offset="1.00" stop-color="#00ff90"/></linearGradient>
<linearGradient id="w125" gradientUnits="userSpaceOnUse" x1="1439.1" y1="522.0" x2="1380.5" y2="468.7"><stop offset="0.00" stop-color="#ffffff"/><stop offset="0.08" stop-color="#dffff1"/><stop offset="0.18" stop-color="#bbffe0"/><stop offset="0.30" stop-color="#96ffcf"/><stop offset="0.45" stop-color="#6dffbd"/><stop offset="0.60" stop-color="#4affad"/><stop offset="0.75" stop-color="#2bff9f"/><stop offset="0.88" stop-color="#14ff94"/><stop offset="1.00" stop-color="#00ff8b"/></linearGradient>
<linearGradient id="w126" gradientUnits="userSpaceOnUse" x1="1439.1" y1="522.0" x2="1381.5" y2="466.2"><stop offset="0.00" stop-color="#ffffff"/><stop offset="0.08" stop-color="#dffff0"/><stop offset="0.18" stop-color="#bbffdf"/><stop offset="0.30" stop-color="#95ffcd"/><stop offset="0.45" stop-color="#6cffba"/><stop offset="0.60" stop-color="#49ffaa"/><stop offset="0.75" stop-color="#2bff9b"/><stop offset="0.88" stop-color="#13ff90"/><stop offset="1.00" stop-color="#00ff87"/></linearGradient>
<linearGradient id="w127" gradientUnits="userSpaceOnUse" x1="1439.1" y1="522.0" x2="1382.4" y2="463.5"><stop offset="0.00" stop-color="#ffffff"/><stop offset="0.08" stop-color="#deffef"/><stop offset="0.18" stop-color="#baffde"/><stop offset="0.30" stop-color="#94ffcb"/><stop offset="0.45" stop-color="#6bffb7"/><stop offset="0.60" stop-color="#48ffa6"/><stop offset="0.75" stop-color="#2aff97"/><stop offset="0.88" stop-color="#13ff8c"/><stop offset="1.00" stop-color="#00ff83"/></linearGradient>
<linearGradient id="w128" gradientUnits="userSpaceOnUse" x1="1439.1" y1="522.0" x2="1383.4" y2="460.8"><stop offset="0.00" stop-color="#ffffff"/><stop offset="0.08" stop-color="#deffef"/><stop offset="0.18" stop-color="#baffdc"/><stop offset="0.30" stop-color="#94ffc9"/><stop offset="0.45" stop-color="#6bffb4"/><stop offset="0.60" stop-color="#48ffa3"/><stop offset="0.75" stop-color="#2aff94"/><stop offset="0.88" stop-color="#13ff88"/><stop offset="1.00" stop-color="#00ff7f"/></linearGradient>
<linearGradient id="w129" gradientUnits="userSpaceOnUse" x1="1439.1" y1="522.0" x2="1384.4" y2="458.0"><stop offset="0.00" stop-color="#ffffff"/><stop offset="0.08" stop-color="#deffee"/><stop offset="0.18" stop-color="#b9ffdb"/><stop offset="0.30" stop-color="#93ffc7"/><stop offset="0.45" stop-color="#6affb1"/><stop offset="0.60" stop-color="#47ff9f"/><stop offset="0.75" stop-color="#29ff90"/><stop offset="0.88" stop-color="#13ff84"/><stop offset="1.00" stop-color="#00ff7a"/></linearGradient>
<linearGradient id="w130" gradientUnits="userSpaceOnUse" x1="1439.1" y1="522.0" x2="1385.5" y2="455.1"><stop offset="0.00" stop-color="#ffffff"/><stop offset="0.08" stop-color="#ddffed"/><stop offset="0.18" stop-color="#b9ffd9"/><stop offset="0.30" stop-color="#92ffc5"/><stop offset="0.45" stop-color="#69ffaf"/><stop offset="0.60" stop-color="#47ff9c"/><stop offset="0.75" stop-color="#29ff8c"/><stop offset="0.88" stop-color="#13ff80"/><stop offset="1.00" stop-color="#00ff76"/></linearGradient>
<linearGradient id="w131" gradientUnits="userSpaceOnUse" x1="1439.1" y1="522.0" x2="1386.6" y2="452.1"><stop offset="0.00" stop-color="#ffffff"/><stop offset="0.08" stop-color="#ddffec"/><stop offset="0.18" stop-color="#b8ffd8"/><stop offset="0.30" stop-color="#91ffc2"/><stop offset="0.45" stop-color="#69ffac"/><stop offset="0.60" stop-color="#46ff98"/><stop offset="0.75" stop-color="#29ff88"/><stop offset="0.88" stop-color="#12ff7c"/><stop offset="1.00" stop-color="#00ff71"/></linearGradient>
<linearGradient id="w132" gradientUnits="userSpaceOnUse" x1="1439.1" y1="522.0" x2="1387.8" y2="449.0"><stop offset="0.00" stop-color="#ffffff"/><stop offset="0.08" stop-color="#ddffeb"/><stop offset="0.18" stop-color="#b7ffd6"/><stop offset="0.30" stop-color="#91ffc0"/><stop offset="0.45" stop-color="#68ffa8"/><stop offset="0.60" stop-color="#45ff95"/><stop offset="0.75" stop-color="#28ff84"/><stop offset="0.88" stop-color="#12ff77"/><stop offset="1.00" stop-color="#00ff6d"/></linearGradient>
<linearGradient id="w133" gradientUnits="userSpaceOnUse" x1="1439.1" y1="522.0" x2="1389.0" y2="445.7"><stop offset="0.00" stop-color="#ffffff"/><stop offset="0.08" stop-color="#dcffeb"/><stop offset="0.18" stop-color="#b7ffd4"/><stop offset="0.30" stop-color="#90ffbd"/><stop offset="0.45" stop-color="#67ffa5"/><stop offset="0.60" stop-color="#45ff91"/><stop offset="0.75" stop-color="#28ff80"/><stop offset="0.88" stop-color="#12ff73"/><stop offset="1.00" stop-color="#00ff68"/></linearGradient>
<linearGradient id="w134" gradientUnits="userSpaceOnUse" x1="1439.1" y1="522.0" x2="1390.2" y2="442.2"><stop offset="0.00" stop-color="#ffffff"/><stop offset="0.08" stop-color="#dcffea"/><stop offset="0.18" stop-color="#b6ffd3"/><stop offset="0.30" stop-color="#8fffbb"/><stop offset="0.45" stop-color="#66ffa2"/><stop offset="0.60" stop-color="#44ff8d"/><stop offset="0.75" stop-color="#27ff7c"/><stop offset="0.88" stop-color="#12ff6e"/><stop offset="1.00" stop-color="#00ff64"/></linearGradient>
<linearGradient id="w135" gradientUnits="userSpaceOnUse" x1="1439.1" y1="522.0" x2="1391.5" y2="438.6"><stop offset="0.00" stop-color="#ffffff"/><stop offset="0.08" stop-color="#dcffe9"/><stop offset="0.18" stop-color="#b5ffd1"/><stop offset="0.30" stop-color="#8effb8"/><stop offset="0.45" stop-color="#65ff9e"/><stop offset="0.60" stop-color="#43ff89"/><stop offset="0.75" stop-color="#27ff77"/><stop offset="0.88" stop-color="#11ff6a"/><stop offset="1.00" stop-color="#00ff5f"/></linearGradient>
<linearGradient id="w136" gradientUnits="userSpaceOnUse" x1="1439.1" y1="522.0" x2="1392.9" y2="434.8"><stop offset="0.00" stop-color="#ffffff"/><stop offset="0.08" stop-color="#dbffe8"/><stop offset="0.18" stop-color="#b4ffcf"/><stop offset="0.30" stop-color="#8dffb5"/><stop offset="0.45" stop-color="#64ff9b"/><stop offset="0.60" stop-color="#43ff85"/><stop offset="0.75" stop-color="#26ff73"/><stop offset="0.88" stop-color="#11ff65"/><stop offset="1.00" stop-color="#00ff5a"/></linearGradient>
<linearGradient id="w137" gradientUnits="userSpaceOnUse" x1="1439.1" y1="522.0" x2="1394.4" y2="430.8"><stop offset="0.00" stop-color="#ffffff"/><stop offset="0.08" stop-color="#dbffe7"/><stop offset="0.18" stop-color="#b4ffcd"/><stop offset="0.30" stop-color="#8cffb2"/><stop offset="0.45" stop-color="#64ff97"/><stop offset="0.60" stop-color="#42ff81"/><stop offset="0.75" stop-color="#26ff6e"/><stop offset="0.88" stop-color="#11ff60"/><stop offset="1.00" stop-color="#00ff55"/></linearGradient>
<linearGradient id="w138" gradientUnits="userSpaceOnUse" x1="1439.1" y1="522.0" x2="1396.0" y2="426.5"><stop offset="0.00" stop-color="#ffffff"/><stop offset="0.08" stop-color="#daffe6"/><stop offset="0.18" stop-color="#b3ffcb"/><stop offset="0.30" stop-color="#8bffaf"/><stop offset="0.45" stop-color="#63ff93"/><stop offset="0.60" stop-color="#41ff7d"/><stop offset="0.75" stop-color="#25ff69"/><stop offset="0.88" stop-color="#11ff5b"/><stop offset="1.00" stop-color="#00ff50"/></linearGradient>
<linearGradient id="w139" gradientUnits="userSpaceOnUse" x1="1439.1" y1="522.0" x2="1397.6" y2="421.9"><stop offset="0.00" stop-color="#ffffff"/><stop offset="0.08" stop-color="#daffe5"/><stop offset="0.18" stop-color="#b2ffc8"/><stop offset="0.30" stop-color="#8affac"/><stop offset="0.45" stop-color="#62ff8f"/><stop offset="0.60" stop-color="#40ff78"/><stop offset="0.75" stop-color="#25ff64"/><stop offset="0.88" stop-color="#10ff56"/><stop offset="1.00" stop-color="#00ff4a"/></linearGradient>
<linearGradient id="w140" gradientUnits="userSpaceOnUse" x1="1439.1" y1="522.0" x2="1399.4" y2="417.0"><stop offset="0.00" stop-color="#ffffff"/><stop offset="0.08" stop-color="#d9ffe3"/><stop offset="0.18" stop-color="#b1ffc6"/><stop offset="0.30" stop-color="#89ffa9"/><stop offset="0.45" stop-color="#61ff8b"/><stop offset="0.60" stop-color="#40ff73"/><stop offset="0.75" stop-color="#24ff5f"/><stop offset="0.88" stop-color="#10ff51"/><stop offset="1.00" stop-color="#00ff45"/></linearGradient>
<linearGradient id="w141" gradientUnits="userSpaceOnUse" x1="1439.1" y1="522.0" x2="1401.3" y2="411.8"><stop offset="0.00" stop-color="#ffffff"/><stop offset="0.08" stop-color="#d9ffe2"/><stop offset="0.18" stop-color="#b0ffc4"/><stop offset="0.30" stop-color="#88ffa5"/><stop offset="0.45" stop-color="#5fff87"/><stop offset="0.60" stop-color="#3fff6e"/><stop offset="0.75" stop-color="#24ff5a"/><stop offset="0.88" stop-color="#10ff4b"/><stop offset="1.00" stop-color="#00ff3f"/></linearGradient>
<linearGradient id="w142" gradientUnits="userSpaceOnUse" x1="1439.1" y1="522.0" x2="1403.4" y2="406.1"><stop offset="0.00" stop-color="#ffffff"/><stop offset="0.08" stop-color="#d8ffe1"/><stop offset="0.18" stop-color="#afffc1"/><stop offset="0.30" stop-color="#87ffa2"/><stop offset="0.45" stop-color="#5eff82"/><stop offset="0.60" stop-color="#3eff69"/><stop offset="0.75" stop-color="#23ff54"/><stop offset="0.88" stop-color="#10ff45"/><stop offset="1.00" stop-color="#00ff39"/></linearGradient>
<linearGradient id="w143" gradientUnits="userSpaceOnUse" x1="1439.1" y1="522.0" x2="1405.7" y2="399.9"><stop offset="0.00" stop-color="#ffffff"/><stop offset="0.08" stop-color="#d7ffdf"/><stop offset="0.18" stop-color="#aeffbe"/><stop offset="0.30" stop-color="#85ff9e"/><stop offset="0.45" stop-color="#5dff7d"/><stop offset="0.60" stop-color="#3dff63"/><stop offset="0.75" stop-color="#23ff4e"/><stop offset="0.88" stop-color="#0fff3f"/><stop offset="1.00" stop-color="#00ff32"/></linearGradient>
<linearGradient id="w144" gradientUnits="userSpaceOnUse" x1="1439.1" y1="522.0" x2="1408.1" y2="393.2"><stop offset="0.00" stop-color="#ffffff"/><stop offset="0.08" stop-color="#d6ffdd"/><stop offset="0.18" stop-color="#adffbb"/><stop offset="0.30" stop-color="#84ff99"/><stop offset="0.45" stop-color="#5cff78"/><stop offset="0.60" stop-color="#3cff5d"/><stop offset="0.75" stop-color="#22ff48"/><stop offset="0.88" stop-color="#0fff38"/><stop offset="1.00" stop-color="#00ff2c"/></linearGradient>
<linearGradient id="w145" gradientUnits="userSpaceOnUse" x1="1439.1" y1="522.0" x2="1410.8" y2="385.7"><stop offset="0.00" stop-color="#ffffff"/><stop offset="0.08" stop-color="#d6ffdc"/><stop offset="0.18" stop-color="#abffb7"/><stop offset="0.30" stop-color="#83ff95"/><stop offset="0.45" stop-color="#5aff72"/><stop offset="0.60" stop-color="#3bff57"/><stop offset="0.75" stop-color="#21ff41"/><stop offset="0.88" stop-color="#0fff32"/><stop offset="1.00" stop-color="#00ff25"/></linearGradient>
<linearGradient id="w146" gradientUnits="userSpaceOnUse" x1="1439.1" y1="522.0" x2="1413.8" y2="377.5"><stop offset="0.00" stop-color="#ffffff"/><stop offset="0.08" stop-color="#d5ffda"/><stop offset="0.18" stop-color="#aaffb4"/><stop offset="0.30" stop-color="#81ff90"/><stop offset="0.45" stop-color="#59ff6c"/><stop offset="0.60" stop-color="#3aff51"/><stop offset="0.75" stop-color="#20ff3a"/><stop offset="0.88" stop-color="#0eff2a"/><stop offset="1.00" stop-color="#00ff1e"/></linearGradient>
<linearGradient id="w147" gradientUnits="userSpaceOnUse" x1="1439.1" y1="522.0" x2="1417.2" y2="368.4"><stop offset="0.00" stop-color="#ffffff"/><stop offset="0.08" stop-color="#d4ffd8"/><stop offset="0.18" stop-color="#a8ffb0"/><stop offset="0.30" stop-color="#7fff8a"/><stop offset="0.45" stop-color="#57ff66"/><stop offset="0.60" stop-color="#38ff4a"/><stop offset="0.75" stop-color="#20ff33"/><stop offset="0.88" stop-color="#0eff23"/><stop offset="1.00" stop-color="#00ff16"/></linearGradient>
<linearGradient id="w148" gradientUnits="userSpaceOnUse" x1="1439.1" y1="522.0" x2="1421.0" y2="358.0"><stop offset="0.00" stop-color="#ffffff"/><stop offset="0.08" stop-color="#d3ffd5"/><stop offset="0.18" stop-color="#a7ffab"/><stop offset="0.30" stop-color="#7dff84"/><stop offset="0.45" stop-color="#56ff5f"/><stop offset="0.60" stop-color="#37ff42"/><stop offset="0.75" stop-color="#1fff2b"/><stop offset="0.88" stop-color="#0eff1b"/><stop offset="1.00" stop-color="#00ff0e"/></linearGradient>
<linearGradient id="w149" gradientUnits="userSpaceOnUse" x1="1439.1" y1="522.0" x2="1425.2" y2="346.3"><stop offset="0.00" stop-color="#ffffff"/><stop offset="0.08" stop-color="#d1ffd2"/><stop offset="0.18" stop-color="#a5ffa6"/><stop offset="0.30" stop-color="#7bff7e"/><stop offset="0.45" stop-color="#54ff57"/><stop offset="0.60" stop-color="#36ff3a"/><stop offset="0.75" stop-color="#1eff22"/><stop offset="0.88" stop-color="#0dff12"/><stop offset="1.00" stop-color="#00ff05"/></linearGradient>
<linearGradient id="w150" gradientUnits="userSpaceOnUse" x1="1439.1" y1="522.0" x2="1427.7" y2="339.6"><stop offset="0.00" stop-color="#ffffff"/><stop offset="0.08" stop-color="#d1ffd1"/><stop offset="0.18" stop-color="#a4ffa4"/><stop offset="0.30" stop-color="#7aff7a"/><stop offset="0.45" stop-color="#53ff53"/><stop offset="0.60" stop-color="#35ff35"/><stop offset="0.75" stop-color="#1dff1e"/><stop offset="0.88" stop-color="#0dff0d"/><stop offset="1.00" stop-color="#00ff00"/></linearGradient>
<linearGradient id="w151" gradientUnits="userSpaceOnUse" x1="1439.1" y1="522.0" x2="1430.6" y2="341.0"><stop offset="0.00" stop-color="#ffffff"/><stop offset="0.08" stop-color="#d2ffd1"/><stop offset="0.18" stop-color="#a6ffa4"/><stop offset="0.30" stop-color="#7dff7a"/><stop offset="0.45" stop-color="#56ff53"/><stop offset="0.60" stop-color="#39ff35"/><stop offset="0.75" stop-color="#22ff1e"/><stop offset="0.88" stop-color="#11ff0d"/><stop offset="1.00" stop-color="#04ff00"/></linearGradient>
<linearGradient id="w152" gradientUnits="userSpaceOnUse" x1="1439.1" y1="522.0" x2="1436.3" y2="344.4"><stop offset="0.00" stop-color="#ffffff"/><stop offset="0.08" stop-color="#d4ffd2"/><stop offset="0.18" stop-color="#aaffa5"/><stop offset="0.30" stop-color="#83ff7c"/><stop offset="0.45" stop-color="#5dff54"/><stop offset="0.60" stop-color="#41ff36"/><stop offset="0.75" stop-color="#2aff1e"/><stop offset="0.88" stop-color="#1aff0d"/><stop offset="1.00" stop-color="#0eff00"/></linearGradient>
<linearGradient id="w153" gradientUnits="userSpaceOnUse" x1="1439.1" y1="522.0" x2="1441.8" y2="347.8"><stop offset="0.00" stop-color="#ffffff"/><stop offset="0.08" stop-color="#d6ffd3"/><stop offset="0.18" stop-color="#aeffa6"/><stop offset="0.30" stop-color="#89ff7d"/><stop offset="0.45" stop-color="#65ff55"/><stop offset="0.60" stop-color="#49ff37"/><stop offset="0.75" stop-color="#33ff1f"/><stop offset="0.88" stop-color="#23ff0e"/><stop offset="1.00" stop-color="#17ff00"/></linearGradient>
<linearGradient id="w154" gradientUnits="userSpaceOnUse" x1="1439.1" y1="522.0" x2="1447.1" y2="351.0"><stop offset="0.00" stop-color="#ffffff"/><stop offset="0.08" stop-color="#d9ffd3"/><stop offset="0.18" stop-color="#b2ffa7"/><stop offset="0.30" stop-color="#8eff7e"/><stop offset="0.45" stop-color="#6cff56"/><stop offset="0.60" stop-color="#51ff38"/><stop offset="0.75" stop-color="#3cff1f"/><stop offset="0.88" stop-color="#2cff0e"/><stop offset="1.00" stop-color="#20ff00"/></linearGradient>
<linearGradient id="w155" gradientUnits="userSpaceOnUse" x1="1439.1" y1="522.0" x2="1452.3" y2="354.1"><stop offset="0.00" stop-color="#ffffff"/><stop offset="0.08" stop-color="#dbffd4"/><stop offset="0.18" stop-color="#b7ffa8"/><stop offset="0.30" stop-color="#94ff7f"/><stop offset="0.45" stop-color="#73ff57"/><stop offset="0.60" stop-color="#59ff38"/><stop offset="0.75" stop-color="#44ff20"/><stop offset="0.88" stop-color="#35ff0e"/><stop offset="1.00" stop-color="#2aff00"/></linearGradient>
<linearGradient id="w156" gradientUnits="userSpaceOnUse" x1="1439.1" y1="522.0" x2="1457.3" y2="357.1"><stop offset="0.00" stop-color="#ffffff"/><stop offset="0.08" stop-color="#ddffd5"/><stop offset="0.18" stop-color="#bbffa9"/><stop offset="0.30" stop-color="#9aff80"/><stop offset="0.45" stop-color="#7aff58"/><stop offset="0.60" stop-color="#61ff39"/><stop offset="0.75" stop-color="#4dff20"/><stop offset="0.88" stop-color="#3fff0e"/><stop offset="1.00" stop-color="#33ff00"/></linearGradient>
<linearGradient id="w157" gradientUnits="userSpaceOnUse" x1="1439.1" y1="522.0" x2="1462.1" y2="360.0"><stop offset="0.00" stop-color="#ffffff"/><stop offset="0.08" stop-color="#dfffd5"/><stop offset="0.18" stop-color="#bfffaa"/><stop offset="0.30" stop-color="#9fff82"/><stop offset="0.45" stop-color="#81ff5a"/><stop offset="0.60" stop-color="#69ff3a"/><stop offset="0.75" stop-color="#56ff21"/><stop offset="0.88" stop-color="#48ff0f"/><stop offset="1.00" stop-color="#3dff00"/></linearGradient>
<linearGradient id="w158" gradientUnits="userSpaceOnUse" x1="1439.1" y1="522.0" x2="1466.8" y2="362.9"><stop offset="0.00" stop-color="#ffffff"/><stop offset="0.08" stop-color="#e1ffd6"/><stop offset="0.18" stop-color="#c2ffab"/><stop offset="0.30" stop-color="#a5ff83"/><stop offset="0.45" stop-color="#88ff5b"/><stop offset="0.60" stop-color="#71ff3b"/><stop offset="0.75" stop-color="#5eff21"/><stop offset="0.88" stop-color="#51ff0f"/><stop offset="1.00" stop-color="#46ff00"/></linearGradient>
<linearGradient id="w159" gradientUnits="userSpaceOnUse" x1="1439.1" y1="522.0" x2="1471.4" y2="365.7"><stop offset="0.00" stop-color="#ffffff"/><stop offset="0.08" stop-color="#e3ffd6"/><stop offset="0.18" stop-color="#c6ffac"/><stop offset="0.30" stop-color="#aaff84"/><stop offset="0.45" stop-color="#8fff5c"/><stop offset="0.60" stop-color="#79ff3c"/><stop offset="0.75" stop-color="#67ff22"/><stop offset="0.88" stop-color="#5aff0f"/><stop offset="1.00" stop-color="#50ff00"/></linearGradient>
<linearGradient id="w160" gradientUnits="userSpaceOnUse" x1="1439.1" y1="522.0" x2="1475.9" y2="368.4"><stop offset="0.00" stop-color="#ffffff"/><stop offset="0.08" stop-color="#e5ffd7"/><stop offset="0.18" stop-color="#caffad"/><stop offset="0.30" stop-color="#b0ff85"/><stop offset="0.45" stop-color="#96ff5d"/><stop offset="0.60" stop-color="#81ff3d"/><stop offset="0.75" stop-color="#70ff22"/><stop offset="0.88" stop-color="#64ff0f"/><stop offset="1.00" stop-color="#5aff00"/></linearGradient>
<linearGradient id="w161" gradientUnits="userSpaceOnUse" x1="1439.1" y1="522.0" x2="1480.3" y2="371.0"><stop offset="0.00" stop-color="#ffffff"/><stop offset="0.08" stop-color="#e7ffd8"/><stop offset="0.18" stop-color="#ceffae"/><stop offset="0.30" stop-color="#b5ff86"/><stop offset="0.45" stop-color="#9dff5e"/><stop offset="0.60" stop-color="#89ff3d"/><stop offset="0.75" stop-color="#79ff23"/><stop offset="0.88" stop-color="#6dff10"/><stop offset="1.00" stop-color="#64ff00"/></linearGradient>
<linearGradient id="w162" gradientUnits="userSpaceOnUse" x1="1439.1" y1="522.0" x2="1484.7" y2="373.7"><stop offset="0.00" stop-color="#ffffff"/><stop offset="0.08" stop-color="#e9ffd8"/><stop offset="0.18" stop-color="#d2ffaf"/><stop offset="0.30" stop-color="#bbff87"/><stop offset="0.45" stop-color="#a4ff5f"/><stop offset="0.60" stop-color="#91ff3e"/><stop offset="0.75" stop-color="#82ff23"/><stop offset="0.88" stop-color="#77ff10"/><stop offset="1.00" stop-color="#6eff00"/></linearGradient>
<linearGradient id="w163" gradientUnits="userSpaceOnUse" x1="1439.1" y1="522.0" x2="1488.9" y2="376.2"><stop offset="0.00" stop-color="#ffffff"/><stop offset="0.08" stop-color="#ebffd9"/><stop offset="0.18" stop-color="#d5ffb0"/><stop offset="0.30" stop-color="#c0ff88"/><stop offset="0.45" stop-color="#abff60"/><stop offset="0.60" stop-color="#99ff3f"/><stop offset="0.75" stop-color="#8bff24"/><stop offset="0.88" stop-color="#81ff10"/><stop offset="1.00" stop-color="#78ff00"/></linearGradient>
<linearGradient id="w164" gradientUnits="userSpaceOnUse" x1="1439.1" y1="522.0" x2="1493.2" y2="378.8"><stop offset="0.00" stop-color="#ffffff"/><stop offset="0.08" stop-color="#edffd9"/><stop offset="0.18" stop-color="#d9ffb1"/><stop offset="0.30" stop-color="#c6ff89"/><stop offset="0.45" stop-color="#b2ff61"/><stop offset="0.60" stop-color="#a2ff40"/><stop offset="0.75" stop-color="#94ff24"/><stop offset="0.88" stop-color="#8bff10"/><stop offset="1.00" stop-color="#83ff00"/></linearGradient>
<linearGradient id="w165" gradientUnits="userSpaceOnUse" x1="1439.1" y1="522.0" x2="1497.3" y2="381.3"><stop offset="0.00" stop-color="#ffffff"/><stop offset="0.08" stop-color="#eeffda"/><stop offset="0.18" stop-color="#ddffb2"/><stop offset="0.30" stop-color="#cbff8b"/><stop offset="0.45" stop-color="#b9ff62"/><stop offset="0.60" stop-color="#aaff41"/><stop offset="0.75" stop-color="#9eff25"/><stop offset="0.88" stop-color="#95ff11"/><stop offset="1.00" stop-color="#8dff00"/></linearGradient>
<linearGradient id="w166" gradientUnits="userSpaceOnUse" x1="1439.1" y1="522.0" x2="1501.4" y2="383.8"><stop offset="0.00" stop-color="#ffffff"/><stop offset="0.08" stop-color="#f0ffda"/><stop offset="0.18" stop-color="#e1ffb3"/><stop offset="0.30" stop-color="#d1ff8c"/><stop offset="0.45" stop-color="#c0ff63"/><stop offset="0.60" stop-color="#b3ff42"/><stop offset="0.75" stop-color="#a8ff26"/><stop offset="0.88" stop-color="#9fff11"/><stop offset="1.00" stop-color="#99ff00"/></linearGradient>
<linearGradient id="w167" gradientUnits="userSpaceOnUse" x1="1439.1" y1="522.0" x2="1505.5" y2="386.3"><stop offset="0.00" stop-color="#ffffff"/><stop offset="0.08" stop-color="#f2ffdb"/><stop offset="0.18" stop-color="#e4ffb4"/><stop offset="0.30" stop-color="#d6ff8d"/><stop offset="0.45" stop-color="#c8ff64"/><stop offset="0.60" stop-color="#bcff42"/><stop offset="0.75" stop-color="#b2ff26"/><stop offset="0.88" stop-color="#aaff11"/><stop offset="1.00" stop-color="#a4ff00"/></linearGradient>
<linearGradient id="w168" gradientUnits="userSpaceOnUse" x1="1439.1" y1="522.0" x2="1509.6" y2="388.7"><stop offset="0.00" stop-color="#ffffff"/><stop offset="0.08" stop-color="#f4ffdc"/><stop offset="0.18" stop-color="#e8ffb5"/><stop offset="0.30" stop-color="#dcff8e"/><stop offset="0.45" stop-color="#cfff65"/><stop offset="0.60" stop-color="#c5ff43"/><stop offset="0.75" stop-color="#bcff27"/><stop offset="0.88" stop-color="#b5ff11"/><stop offset="1.00" stop-color="#b0ff00"/></linearGradient>
<linearGradient id="w169" gradientUnits="userSpaceOnUse" x1="1439.1" y1="522.0" x2="1513.7" y2="391.2"><stop offset="0.00" stop-color="#ffffff"/><stop offset="0.08" stop-color="#f6ffdc"/><stop offset="0.18" stop-color="#ecffb6"/><stop offset="0.30" stop-color="#e2ff8f"/><stop offset="0.45" stop-color="#d7ff66"/><stop offset="0.60" stop-color="#ceff44"/><stop offset="0.75" stop-color="#c6ff27"/><stop offset="0.88" stop-color="#c1ff12"/><stop offset="1.00" stop-color="#bcff00"/></linearGradient>
<linearGradient id="w170" gradientUnits="userSpaceOnUse" x1="1439.1" y1="522.0" x2="1517.7" y2="393.6"><stop offset="0.00" stop-color="#ffffff"/><stop offset="0.08" stop-color="#f8ffdd"/><stop offset="0.18" stop-color="#f0ffb7"/><stop offset="0.30" stop-color="#e7ff90"/><stop offset="0.45" stop-color="#dfff68"/><stop offset="0.60" stop-color="#d7ff45"/><stop offset="0.75" stop-color="#d1ff28"/><stop offset="0.88" stop-color="#ccff12"/><stop offset="1.00" stop-color="#c9ff00"/></linearGradient>
<linearGradient id="w171" gradientUnits="userSpaceOnUse" x1="1439.1" y1="522.0" x2="1521.8" y2="396.1"><stop offset="0.00" stop-color="#ffffff"/><stop offset="0.08" stop-color="#f9ffdd"/><stop offset="0.18" stop-color="#f3ffb8"/><stop offset="0.30" stop-color="#edff92"/><stop offset="0.45" stop-color="#e7ff69"/><stop offset="0.60" stop-color="#e1ff46"/><stop offset="0.75" stop-color="#dcff29"/><stop offset="0.88" stop-color="#d9ff12"/><stop offset="1.00" stop-color="#d6ff00"/></linearGradient>
<linearGradient id="w172" gradientUnits="userSpaceOnUse" x1="1439.1" y1="522.0" x2="1525.8" y2="398.5"><stop offset="0.00" stop-color="#ffffff"/><stop offset="0.08" stop-color="#fbffde"/><stop offset="0.18" stop-color="#f7ffb9"/><stop offset="0.30" stop-color="#f3ff93"/><stop offset="0.45" stop-color="#efff6a"/><stop offset="0.60" stop-color="#ebff47"/><stop offset="0.75" stop-color="#e8ff29"/><stop offset="0.88" stop-color="#e5ff13"/><stop offset="1.00" stop-color="#e3ff00"/></linearGradient>
<linearGradient id="w173" gradientUnits="userSpaceOnUse" x1="1439.1" y1="522.0" x2="1529.9" y2="401.0"><stop offset="0.00" stop-color="#ffffff"/><stop offset="0.08" stop-color="#fdffde"/><stop offset="0.18" stop-color="#fbffba"/><stop offset="0.30" stop-color="#f9ff94"/><stop offset="0.45" stop-color="#f7ff6b"/><stop offset="0.60" stop-color="#f5ff48"/><stop offset="0.75" stop-color="#f4ff2a"/><stop offset="0.88" stop-color="#f3ff13"/><stop offset="1.00" stop-color="#f2ff00"/></linearGradient>
<linearGradient id="w174" gradientUnits="userSpaceOnUse" x1="1439.1" y1="522.0" x2="1534.0" y2="403.5"><stop offset="0.00" stop-color="#ffffff"/><stop offset="0.08" stop-color="#ffffdf"/><stop offset="0.18" stop-color="#ffffbb"/><stop offset="0.30" stop-color="#fffe95"/><stop offset="0.45" stop-color="#fffe6c"/><stop offset="0.60" stop-color="#fffe49"/><stop offset="0.75" stop-color="#fffe2b"/><stop offset="0.88" stop-color="#fffd13"/><stop offset="1.00" stop-color="#fffd00"/></linearGradient>
<linearGradient id="w175" gradientUnits="userSpaceOnUse" x1="1439.1" y1="522.0" x2="1538.1" y2="406.0"><stop offset="0.00" stop-color="#ffffff"/><stop offset="0.08" stop-color="#fffdde"/><stop offset="0.18" stop-color="#fffbb9"/><stop offset="0.30" stop-color="#fff893"/><stop offset="0.45" stop-color="#fff56a"/><stop offset="0.60" stop-color="#fff347"/><stop offset="0.75" stop-color="#fff129"/><stop offset="0.88" stop-color="#fff013"/><stop offset="1.00" stop-color="#ffef00"/></linearGradient>
<linearGradient id="w176" gradientUnits="userSpaceOnUse" x1="1439.1" y1="522.0" x2="1542.3" y2="408.5"><stop offset="0.00" stop-color="#ffffff"/><stop offset="0.08" stop-color="#fffbdd"/><stop offset="0.18" stop-color="#fff7b7"/><stop offset="0.30" stop-color="#fff290"/><stop offset="0.45" stop-color="#ffed67"/><stop offset="0.60" stop-color="#ffe945"/><stop offset="0.75" stop-color="#ffe628"/><stop offset="0.88" stop-color="#ffe312"/><stop offset="1.00" stop-color="#ffe100"/></linearGradient>
<linearGradient id="w177" gradientUnits="userSpaceOnUse" x1="1439.1" y1="522.0" x2="1546.5" y2="411.0"><stop offset="0.00" stop-color="#ffffff"/><stop offset="0.08" stop-color="#fff9dc"/><stop offset="0.18" stop-color="#fff3b5"/><stop offset="0.30" stop-color="#ffec8e"/><stop offset="0.45" stop-color="#ffe565"/><stop offset="0.60" stop-color="#ffdf43"/><stop offset="0.75" stop-color="#ffda27"/><stop offset="0.88" stop-color="#ffd711"/><stop offset="1.00" stop-color="#ffd400"/></linearGradient>
<linearGradient id="w178" gradientUnits="userSpaceOnUse" x1="1439.1" y1="522.0" x2="1550.8" y2="413.6"><stop offset="0.00" stop-color="#ffffff"/><stop offset="0.08" stop-color="#fff7da"/><stop offset="0.18" stop-color="#ffefb3"/><stop offset="0.30" stop-color="#ffe68c"/><stop offset="0.45" stop-color="#ffdd63"/><stop offset="0.60" stop-color="#ffd642"/><stop offset="0.75" stop-color="#ffd026"/><stop offset="0.88" stop-color="#ffcb11"/><stop offset="1.00" stop-color="#ffc800"/></linearGradient>
<linearGradient id="w179" gradientUnits="userSpaceOnUse" x1="1439.1" y1="522.0" x2="1555.2" y2="416.3"><stop offset="0.00" stop-color="#ffffff"/><stop offset="0.08" stop-color="#fff5d9"/><stop offset="0.18" stop-color="#ffebb1"/><stop offset="0.30" stop-color="#ffe08a"/><stop offset="0.45" stop-color="#ffd661"/><stop offset="0.60" stop-color="#ffcd40"/><stop offset="0.75" stop-color="#ffc625"/><stop offset="0.88" stop-color="#ffc010"/><stop offset="1.00" stop-color="#ffbc00"/></linearGradient>
<linearGradient id="w180" gradientUnits="userSpaceOnUse" x1="1439.1" y1="522.0" x2="1559.7" y2="419.0"><stop offset="0.00" stop-color="#ffffff"/><stop offset="0.08" stop-color="#fff3d8"/><stop offset="0.18" stop-color="#ffe7b0"/><stop offset="0.30" stop-color="#ffda87"/><stop offset="0.45" stop-color="#ffce5f"/><stop offset="0.60" stop-color="#ffc43e"/><stop offset="0.75" stop-color="#ffbc23"/><stop offset="0.88" stop-color="#ffb610"/><stop offset="1.00" stop-color="#ffb100"/></linearGradient>
<linearGradient id="w181" gradientUnits="userSpaceOnUse" x1="1439.1" y1="522.0" x2="1564.2" y2="421.7"><stop offset="0.00" stop-color="#ffffff"/><stop offset="0.08" stop-color="#fff1d7"/><stop offset="0.18" stop-color="#ffe3ae"/><stop offset="0.30" stop-color="#ffd585"/><stop offset="0.45" stop-color="#ffc75d"/><stop offset="0.60" stop-color="#ffbc3d"/><stop offset="0.75" stop-color="#ffb322"/><stop offset="0.88" stop-color="#ffac0f"/><stop offset="1.00" stop-color="#ffa700"/></linearGradient>
<linearGradient id="w182" gradientUnits="userSpaceOnUse" x1="1439.1" y1="522.0" x2="1568.8" y2="424.5"><stop offset="0.00" stop-color="#ffffff"/><stop offset="0.08" stop-color="#ffefd6"/><stop offset="0.18" stop-color="#ffdfac"/><stop offset="0.30" stop-color="#ffcf83"/><stop offset="0.45" stop-color="#ffc05b"/><stop offset="0.60" stop-color="#ffb33b"/><stop offset="0.75" stop-color="#ffaa21"/><stop offset="0.88" stop-color="#ffa20f"/><stop offset="1.00" stop-color="#ff9d00"/></linearGradient>
<linearGradient id="w183" gradientUnits="userSpaceOnUse" x1="1439.1" y1="522.0" x2="1573.6" y2="427.4"><stop offset="0.00" stop-color="#ffffff"/><stop offset="0.08" stop-color="#ffedd5"/><stop offset="0.18" stop-color="#ffdbaa"/><stop offset="0.30" stop-color="#ffca81"/><stop offset="0.45" stop-color="#ffb959"/><stop offset="0.60" stop-color="#ffab3a"/><stop offset="0.75" stop-color="#ffa120"/><stop offset="0.88" stop-color="#ff990e"/><stop offset="1.00" stop-color="#ff9300"/></linearGradient>
<linearGradient id="w184" gradientUnits="userSpaceOnUse" x1="1439.1" y1="522.0" x2="1578.5" y2="430.3"><stop offset="0.00" stop-color="#ffffff"/><stop offset="0.08" stop-color="#ffebd4"/><stop offset="0.18" stop-color="#ffd7a8"/><stop offset="0.30" stop-color="#ffc47f"/><stop offset="0.45" stop-color="#ffb257"/><stop offset="0.60" stop-color="#ffa438"/><stop offset="0.75" stop-color="#ff9820"/><stop offset="0.88" stop-color="#ff900e"/><stop offset="1.00" stop-color="#ff8a00"/></linearGradient>
<linearGradient id="w185" gradientUnits="userSpaceOnUse" x1="1439.1" y1="522.0" x2="1583.6" y2="433.4"><stop offset="0.00" stop-color="#ffffff"/><stop offset="0.08" stop-color="#ffe9d2"/><stop offset="0.18" stop-color="#ffd3a6"/><stop offset="0.30" stop-color="#ffbf7d"/><stop offset="0.45" stop-color="#ffab55"/><stop offset="0.60" stop-color="#ff9c37"/><stop offset="0.75" stop-color="#ff901f"/><stop offset="0.88" stop-color="#ff870e"/><stop offset="1.00" stop-color="#ff8100"/></linearGradient>
<linearGradient id="w186" gradientUnits="userSpaceOnUse" x1="1439.1" y1="522.0" x2="1588.8" y2="436.5"><stop offset="0.00" stop-color="#ffffff"/><stop offset="0.08" stop-color="#ffe7d1"/><stop offset="0.18" stop-color="#ffcfa4"/><stop offset="0.30" stop-color="#ffb97b"/><stop offset="0.45" stop-color="#ffa453"/><stop offset="0.60" stop-color="#ff9435"/><stop offset="0.75" stop-color="#ff881e"/><stop offset="0.88" stop-color="#ff7f0d"/><stop offset="1.00" stop-color="#ff7800"/></linearGradient>
<linearGradient id="w187" gradientUnits="userSpaceOnUse" x1="1439.1" y1="522.0" x2="1594.2" y2="439.8"><stop offset="0.00" stop-color="#ffffff"/><stop offset="0.08" stop-color="#ffe5d0"/><stop offset="0.18" stop-color="#ffcba2"/><stop offset="0.30" stop-color="#ffb379"/><stop offset="0.45" stop-color="#ff9e51"/><stop offset="0.60" stop-color="#ff8d34"/><stop offset="0.75" stop-color="#ff801d"/><stop offset="0.88" stop-color="#ff770d"/><stop offset="1.00" stop-color="#ff7000"/></linearGradient>
<linearGradient id="w188" gradientUnits="userSpaceOnUse" x1="1439.1" y1="522.0" x2="1599.8" y2="443.2"><stop offset="0.00" stop-color="#ffffff"/><stop offset="0.08" stop-color="#ffe2cf"/><stop offset="0.18" stop-color="#ffc7a0"/><stop offset="0.30" stop-color="#ffae76"/><stop offset="0.45" stop-color="#ff9750"/><stop offset="0.60" stop-color="#ff8633"/><stop offset="0.75" stop-color="#ff781c"/><stop offset="0.88" stop-color="#ff6f0c"/><stop offset="1.00" stop-color="#ff6800"/></linearGradient>
<linearGradient id="w189" gradientUnits="userSpaceOnUse" x1="1439.1" y1="522.0" x2="1605.6" y2="446.7"><stop offset="0.00" stop-color="#ffffff"/><stop offset="0.08" stop-color="#ffe0cd"/><stop offset="0.18" stop-color="#ffc39e"/><stop offset="0.30" stop-color="#ffa874"/><stop offset="0.45" stop-color="#ff904e"/><stop offset="0.60" stop-color="#ff7e31"/><stop offset="0.75" stop-color="#ff711b"/><stop offset="0.88" stop-color="#ff670c"/><stop offset="1.00" stop-color="#ff6000"/></linearGradient>
<linearGradient id="w190" gradientUnits="userSpaceOnUse" x1="1439.1" y1="522.0" x2="1611.7" y2="450.4"><stop offset="0.00" stop-color="#ffffff"/><stop offset="0.08" stop-color="#ffdecc"/><stop offset="0.18" stop-color="#ffbe9c"/><stop offset="0.30" stop-color="#ffa372"/><stop offset="0.45" stop-color="#ff8a4c"/><stop offset="0.60" stop-color="#ff7730"/><stop offset="0.75" stop-color="#ff691a"/><stop offset="0.88" stop-color="#ff5f0c"/><stop offset="1.00" stop-color="#ff5800"/></linearGradient>
<linearGradient id="w191" gradientUnits="userSpaceOnUse" x1="1439.1" y1="522.0" x2="1618.1" y2="454.3"><stop offset="0.00" stop-color="#ffffff"/><stop offset="0.08" stop-color="#ffdbcb"/><stop offset="0.18" stop-color="#ffba9a"/><stop offset="0.30" stop-color="#ff9d70"/><stop offset="0.45" stop-color="#ff834a"/><stop offset="0.60" stop-color="#ff702f"/><stop offset="0.75" stop-color="#ff621a"/><stop offset="0.88" stop-color="#ff580b"/><stop offset="1.00" stop-color="#ff5000"/></linearGradient>
<linearGradient id="w192" gradientUnits="userSpaceOnUse" x1="1439.1" y1="522.0" x2="1624.9" y2="458.3"><stop offset="0.00" stop-color="#ffffff"/><stop offset="0.08" stop-color="#ffd9c9"/><stop offset="0.18" stop-color="#ffb598"/><stop offset="0.30" stop-color="#ff976e"/><stop offset="0.45" stop-color="#ff7d48"/><stop offset="0.60" stop-color="#ff692d"/><stop offset="0.75" stop-color="#ff5b19"/><stop offset="0.88" stop-color="#ff510b"/><stop offset="1.00" stop-color="#ff4900"/></linearGradient>
<linearGradient id="w193" gradientUnits="userSpaceOnUse" x1="1439.1" y1="522.0" x2="1631.9" y2="462.6"><stop offset="0.00" stop-color="#ffffff"/><stop offset="0.08" stop-color="#ffd6c8"/><stop offset="0.18" stop-color="#ffb196"/><stop offset="0.30" stop-color="#ff926c"/><stop offset="0.45" stop-color="#ff7647"/><stop offset="0.60" stop-color="#ff622c"/><stop offset="0.75" stop-color="#ff5318"/><stop offset="0.88" stop-color="#ff490a"/><stop offset="1.00" stop-color="#ff4200"/></linearGradient>
<linearGradient id="w194" gradientUnits="userSpaceOnUse" x1="1439.1" y1="522.0" x2="1639.4" y2="467.1"><stop offset="0.00" stop-color="#ffffff"/><stop offset="0.08" stop-color="#ffd3c6"/><stop offset="0.18" stop-color="#ffac94"/><stop offset="0.30" stop-color="#ff8c69"/><stop offset="0.45" stop-color="#ff6f45"/><stop offset="0.60" stop-color="#ff5b2b"/><stop offset="0.75" stop-color="#ff4c17"/><stop offset="0.88" stop-color="#ff420a"/><stop offset="1.00" stop-color="#ff3a00"/></linearGradient>
<linearGradient id="w195" gradientUnits="userSpaceOnUse" x1="1439.1" y1="522.0" x2="1647.4" y2="471.9"><stop offset="0.00" stop-color="#ffffff"/><stop offset="0.08" stop-color="#ffd0c4"/><stop offset="0.18" stop-color="#ffa791"/><stop offset="0.30" stop-color="#ff8667"/><stop offset="0.45" stop-color="#ff6943"/><stop offset="0.60" stop-color="#ff5429"/><stop offset="0.75" stop-color="#ff4517"/><stop offset="0.88" stop-color="#ff3b0a"/><stop offset="1.00" stop-color="#ff3300"/></linearGradient>
<linearGradient id="w196" gradientUnits="userSpaceOnUse" x1="1439.1" y1="522.0" x2="1655.8" y2="477.1"><stop offset="0.00" stop-color="#ffffff"/><stop offset="0.08" stop-color="#ffcdc3"/><stop offset="0.18" stop-color="#ffa28f"/><stop offset="0.30" stop-color="#ff8065"/><stop offset="0.45" stop-color="#ff6241"/><stop offset="0.60" stop-color="#ff4d28"/><stop offset="0.75" stop-color="#ff3e16"/><stop offset="0.88" stop-color="#ff3409"/><stop offset="1.00" stop-color="#ff2c00"/></linearGradient>
<linearGradient id="w197" gradientUnits="userSpaceOnUse" x1="1439.1" y1="522.0" x2="1664.9" y2="482.5"><stop offset="0.00" stop-color="#ffffff"/><stop offset="0.08" stop-color="#ffcac1"/><stop offset="0.18" stop-color="#ff9d8d"/><stop offset="0.30" stop-color="#ff7962"/><stop offset="0.45" stop-color="#ff5b3f"/><stop offset="0.60" stop-color="#ff4627"/><stop offset="0.75" stop-color="#ff3715"/><stop offset="0.88" stop-color="#ff2d09"/><stop offset="1.00" stop-color="#ff2500"/></linearGradient>
<linearGradient id="w198" gradientUnits="userSpaceOnUse" x1="1439.1" y1="522.0" x2="1674.7" y2="488.4"><stop offset="0.00" stop-color="#ffffff"/><stop offset="0.08" stop-color="#ffc7bf"/><stop offset="0.18" stop-color="#ff988a"/><stop offset="0.30" stop-color="#ff7360"/><stop offset="0.45" stop-color="#ff543d"/><stop offset="0.60" stop-color="#ff3f26"/><stop offset="0.75" stop-color="#ff3014"/><stop offset="0.88" stop-color="#ff2609"/><stop offset="1.00" stop-color="#ff1e00"/></linearGradient>
<linearGradient id="w199" gradientUnits="userSpaceOnUse" x1="1439.1" y1="522.0" x2="1685.2" y2="494.8"><stop offset="0.00" stop-color="#ffffff"/><stop offset="0.08" stop-color="#ffc3bd"/><stop offset="0.18" stop-color="#ff9287"/><stop offset="0.30" stop-color="#ff6c5e"/><stop offset="0.45" stop-color="#ff4d3b"/><stop offset="0.60" stop-color="#ff3824"/><stop offset="0.75" stop-color="#ff2913"/><stop offset="0.88" stop-color="#ff1f08"/><stop offset="1.00" stop-color="#ff1700"/></linearGradient>
<linearGradient id="w200" gradientUnits="userSpaceOnUse" x1="1439.1" y1="522.0" x2="1696.6" y2="501.7"><stop offset="0.00" stop-color="#ffffff"/><stop offset="0.08" stop-color="#ffbfbb"/><stop offset="0.18" stop-color="#ff8d85"/><stop offset="0.30" stop-color="#ff665b"/><stop offset="0.45" stop-color="#ff4639"/><stop offset="0.60" stop-color="#ff3123"/><stop offset="0.75" stop-color="#ff2213"/><stop offset="0.88" stop-color="#ff1808"/><stop offset="1.00" stop-color="#ff1100"/></linearGradient>
<linearGradient id="w201" gradientUnits="userSpaceOnUse" x1="1439.1" y1="522.0" x2="1709.1" y2="509.2"><stop offset="0.00" stop-color="#ffffff"/><stop offset="0.08" stop-color="#ffbbb8"/><stop offset="0.18" stop-color="#ff8682"/><stop offset="0.30" stop-color="#ff5f58"/><stop offset="0.45" stop-color="#ff3f37"/><stop offset="0.60" stop-color="#ff2a22"/><stop offset="0.75" stop-color="#ff1b12"/><stop offset="0.88" stop-color="#ff1108"/><stop offset="1.00" stop-color="#ff0a00"/></linearGradient>
<linearGradient id="w202" gradientUnits="userSpaceOnUse" x1="1439.1" y1="522.0" x2="1722.2" y2="517.2"><stop offset="0.00" stop-color="#ffffff"/><stop offset="0.08" stop-color="#ffb7b6"/><stop offset="0.18" stop-color="#ff807f"/><stop offset="0.30" stop-color="#ff5856"/><stop offset="0.45" stop-color="#ff3835"/><stop offset="0.60" stop-color="#ff2320"/><stop offset="0.75" stop-color="#ff1411"/><stop offset="0.88" stop-color="#ff0a07"/><stop offset="1.00" stop-color="#ff0300"/></linearGradient>
<linearGradient id="w203" gradientUnits="userSpaceOnUse" x1="1439.1" y1="522.0" x2="1728.2" y2="521.6"><stop offset="0.00" stop-color="#ffffff"/><stop offset="0.08" stop-color="#ffb5b5"/><stop offset="0.18" stop-color="#ff7d7e"/><stop offset="0.30" stop-color="#ff5555"/><stop offset="0.45" stop-color="#ff3535"/><stop offset="0.60" stop-color="#ff2020"/><stop offset="0.75" stop-color="#ff1111"/><stop offset="0.88" stop-color="#ff0707"/><stop offset="1.00" stop-color="#ff0000"/></linearGradient>
<linearGradient id="in_t" x1="0" y1="0" x2="1" y2="0"><stop offset="0" stop-color="#5ac6ff"/><stop offset="1" stop-color="#e6ccff"/></linearGradient>
<linearGradient id="in_b" x1="0" y1="0" x2="1" y2="0"><stop offset="0" stop-color="#667cff"/><stop offset="1" stop-color="#dc66ff"/></linearGradient>
<linearGradient id="in_m" x1="0" y1="0" x2="0" y2="1"><stop offset="0" stop-color="#fff" stop-opacity="0"/><stop offset="1" stop-color="#fff" stop-opacity="1"/></linearGradient><mask id="inmask" maskContentUnits="userSpaceOnUse"><rect x="1648" y="186" width="252" height="213" fill="url(#in_m)"/></mask>
<linearGradient id="th1" x1="0" y1="0" x2="0" y2="1"><stop offset="0" stop-color="#3d3d3d"/><stop offset="1" stop-color="#333333"/></linearGradient>
<linearGradient id="th2" x1="0" y1="0" x2="0" y2="1"><stop offset="0" stop-color="#222222"/><stop offset="1" stop-color="#0e0e0e"/></linearGradient>
<linearGradient id="bbar" x1="0" y1="0" x2="0" y2="1"><stop offset="0" stop-color="#4a4a4a"/><stop offset="0.35" stop-color="#3c3c3c"/><stop offset="1" stop-color="#222222"/></linearGradient>
<linearGradient id="bb1" x1="0" y1="0" x2="0" y2="1"><stop offset="0" stop-color="#a2a2a2"/><stop offset="0.5" stop-color="#7e7e7e"/><stop offset="1" stop-color="#5e5e5e"/></linearGradient>
<linearGradient id="bbsel" x1="0" y1="0" x2="0" y2="1"><stop offset="0" stop-color="#1e1e1e"/><stop offset="1" stop-color="#383838"/></linearGradient>
<linearGradient id="bb2" x1="0" y1="0" x2="0" y2="1"><stop offset="0" stop-color="#a6a6a6"/><stop offset="1" stop-color="#787878"/></linearGradient>
<linearGradient id="bb3" x1="0" y1="0" x2="0" y2="1"><stop offset="0" stop-color="#b0b0b0"/><stop offset="0.5" stop-color="#9a9a9a"/><stop offset="1" stop-color="#8a8a8a"/></linearGradient>
<linearGradient id="icg" x1="0" y1="0" x2="0" y2="1"><stop offset="0" stop-color="#787878"/><stop offset="1" stop-color="#b2b2b2"/></linearGradient>
</defs>
<rect x="0.0" y="0.0" width="1920.0" height="1166.0" fill="#333333"/>
<rect x="0.0" y="0.0" width="1920.0" height="26.0" fill="#eef3f9"/>
<rect x="0.0" y="0.0" width="1920.0" height="1.0" fill="#7a7a7a"/>
<rect x="0.0" y="0.0" width="1.0" height="26.0" fill="#767676"/>
<rect x="1.0" y="1.0" width="1918.0" height="1.0" fill="#ffffff"/>
<polygon points="14.2,5.4 17.5,8.7 14.2,12.0 10.9,8.7" fill="#ffc81e"/>
<polygon points="10.7,9.2 14.0,12.5 10.7,15.8 7.4,12.5" fill="#25bef5"/>
<polygon points="17.8,9.2 21.1,12.5 17.8,15.8 14.5,12.5" fill="#22d022"/>
<polygon points="14.2,12.8 17.5,16.1 14.2,19.4 10.9,16.1" fill="#f5145a"/>
<text x="26.0" y="17.3" font-size="11.6" fill="#1a1a1a" textLength="330.0" lengthAdjust="spacingAndGlyphs">Calman 2023 Calman Ultimate for Business 185 Days Remaining  - Untitled</text>
<line x1="1818.5" y1="12.5" x2="1828.5" y2="12.5" stroke="#222" stroke-width="1.0"/>
<rect x="1856.5" y="7.5" width="9" height="9" rx="1.5" fill="none" stroke="#222" stroke-width="1"/>
<line x1="1894.8" y1="7.8" x2="1904.2" y2="17.2" stroke="#222" stroke-width="1.1"/>
<line x1="1904.2" y1="7.8" x2="1894.8" y2="17.2" stroke="#222" stroke-width="1.1"/>
<rect x="0.0" y="26.0" width="1920.0" height="54.2" fill="#222222"/>
<path d="M1,26 H153.5 V46 Q153.5,50.5 149,50.5 H5 Q1,50.5 1,46 Z" fill="url(#redbtn)"/>
<path d="M1,50.5 H150" stroke="#8d0c0c" stroke-width="1" opacity=".6"/>
<g transform="translate(29.6,37.6) rotate(45)" fill="none" stroke="#fff" stroke-width="1.9"><rect x="-6.6" y="-6.6" width="13.2" height="13.2" rx="1"/><line x1="-2.2" y1="-6.6" x2="-2.2" y2="6.6"/><line x1="2.2" y1="-6.6" x2="2.2" y2="6.6"/><line x1="-6.6" y1="-2.2" x2="6.6" y2="-2.2"/><line x1="-6.6" y1="2.2" x2="6.6" y2="2.2"/></g>
<text x="42.2" y="43.7" font-size="22.2" fill="#ffffff" textLength="72.0" lengthAdjust="spacingAndGlyphs" stroke="#fff" stroke-width="0.45">calman</text>
<circle cx="139.5" cy="38.5" r="7.6" fill="#c31414"/>
<path d="M135.6,36.6 h7.8 l-3.9,4.4z" fill="#fff"/>
<rect x="159.0" y="36.4" width="1759.0" height="4.2" fill="url(#spec)"/>
<path d="M1,55 H20 Q23.5,55 23.5,58.5 V75 Q23.5,78.5 20,78.5 H1Z" fill="url(#gbtn)" stroke="#9c9c9c" stroke-width="1"/>
<circle cx="11" cy="66.5" r="8" fill="#5c5c5c"/>
<path d="M8.6,61.6 v9.8 l6,-4.9z" fill="#f4f4f4"/>
<path d="M25.5,81 V58.5 Q25.5,55.5 28.5,55.5 H99 Q102,55.5 102,58.5 V81Z" fill="url(#tab)"/>
<path d="M25.5,81 V58.5 Q25.5,55.5 28.5,55.5 H99 Q102,55.5 102,58.5 V81" fill="none" stroke="#5c5c5c" stroke-width="1.2"/>
<line x1="74.5" y1="56.0" x2="74.5" y2="80.0" stroke="#5a5a5a" stroke-width="1.5"/>
<text x="30.5" y="71.6" font-size="9.6" fill="#e0e0e0" textLength="38.5" lengthAdjust="spacingAndGlyphs">History 1</text>
<circle cx="87" cy="69" r="7" fill="#3a3a3a"/>
<text x="87.0" y="72.4" font-size="10.0" fill="#6c6c6c" text-anchor="middle">+</text>
<path d="M1507.5,80.5 V58.5 Q1507.5,55.5 1510.5,55.5 H1623.5 Q1626.5,55.5 1626.5,58.5 V80.5Z" fill="url(#dev)"/>
<rect x="1507.5" y="56.0" width="4.0" height="24.5" fill="#12e212"/>
<text x="1515.0" y="65.0" font-size="8.7" fill="#f2f2f2" textLength="54.8" lengthAdjust="spacingAndGlyphs">X-Rite i1Pro 3</text>
<text x="1515.0" y="76.6" font-size="8.7" fill="#f2f2f2" textLength="46.5" lengthAdjust="spacingAndGlyphs">Direct View</text>
<circle cx="1580.8" cy="68" r="7.6" fill="url(#ddc)"/>
<path d="M1577.3,66.4 h7 l-3.5,4.2z" fill="#fff"/>
<line x1="1597.0" y1="57.0" x2="1597.0" y2="80.0" stroke="#3c3c3c" stroke-width="1.2"/>
<circle cx="1613.8" cy="67.6" r="10.4" fill="#0000ee" stroke="#fff" stroke-width="1"/>
<text x="1613.8" y="70.4" font-size="7.4" fill="#fff" text-anchor="middle" textLength="12.5" lengthAdjust="spacingAndGlyphs" font-weight="bold">SS1</text>
<path d="M1631.3,80.5 V58.5 Q1631.3,55.5 1634.3,55.5 H1737.8 Q1740.8,55.5 1740.8,58.5 V80.5Z" fill="url(#dev)"/>
<rect x="1631.3" y="56.0" width="4.0" height="24.5" fill="#12e212"/>
<text x="1638.8" y="65.0" font-size="8.7" fill="#f2f2f2" textLength="53.5" lengthAdjust="spacingAndGlyphs">Mobile Forge</text>
<circle cx="1726.8" cy="68" r="7.6" fill="url(#ddc)"/>
<path d="M1723.3,66.4 h7 l-3.5,4.2z" fill="#fff"/>
<path d="M1745.5,80.5 V58.5 Q1745.5,55.5 1748.5,55.5 H1862.8 Q1865.8,55.5 1865.8,58.5 V80.5Z" fill="url(#dev)"/>
<rect x="1745.5" y="56.0" width="4.0" height="24.5" fill="#f0f000"/>
<text x="1753.0" y="65.0" font-size="8.7" fill="#f2f2f2" textLength="88.5" lengthAdjust="spacingAndGlyphs">Direct Display Control</text>
<circle cx="1852.0" cy="68" r="7.6" fill="url(#ddc)"/>
<path d="M1848.5,66.4 h7 l-3.5,4.2z" fill="#fff"/>
<rect x="1868.5" y="55.5" width="27.5" height="23" rx="3" fill="url(#gbtn2)" stroke="#a0a0a0" stroke-width="1"/>
<circle cx="1882.3" cy="67" r="7.6" fill="#666666"/>
<g transform="translate(1882.3,67)" fill="none" stroke="#ddd"><circle r="3.1" stroke-width="1.5"/><g stroke-width="1.8"><line x1="0" y1="-3.6" x2="0" y2="-5.6" transform="rotate(0)"/><line x1="0" y1="-3.6" x2="0" y2="-5.6" transform="rotate(45)"/><line x1="0" y1="-3.6" x2="0" y2="-5.6" transform="rotate(90)"/><line x1="0" y1="-3.6" x2="0" y2="-5.6" transform="rotate(135)"/><line x1="0" y1="-3.6" x2="0" y2="-5.6" transform="rotate(180)"/><line x1="0" y1="-3.6" x2="0" y2="-5.6" transform="rotate(225)"/><line x1="0" y1="-3.6" x2="0" y2="-5.6" transform="rotate(270)"/><line x1="0" y1="-3.6" x2="0" y2="-5.6" transform="rotate(315)"/></g></g>
<path d="M1897.5,55.5 H1920 V78.5 H1897.5 Q1896.5,67 1897.5,55.5Z" fill="url(#gbtn2)" stroke="#a0a0a0" stroke-width="1"/>
<circle cx="1908.5" cy="67" r="7.6" fill="#666666"/>
<path d="M1910.8,62.4 v9.2 l-5,-4.6z" fill="#f4f4f4"/>
<rect x="0.0" y="26.0" width="1.0" height="1140.0" fill="#5a5a5a"/>
<rect x="1918.6" y="26.0" width="1.4" height="1140.0" fill="#555555"/>
<text x="27.6" y="194.0" font-size="44.5" fill="#f2f2f2" textLength="209.5" lengthAdjust="spacingAndGlyphs">Saturation</text>
<text x="248.4" y="194.0" font-size="44.5" fill="#f2f2f2" textLength="155.0" lengthAdjust="spacingAndGlyphs">Sweeps</text>
<rect x="50.9" y="257.5" width="358.4" height="475.5" fill="#252525"/>
<text x="209.0" y="252.0" font-size="16.1" fill="#dadada" text-anchor="middle" textLength="91.0" lengthAdjust="spacingAndGlyphs">DeltaE 2000</text>
<line x1="98.1" y1="257.5" x2="98.1" y2="733.0" stroke="#8e8e8e" stroke-width="1.4"/>
<line x1="145.7" y1="257.5" x2="145.7" y2="733.0" stroke="#8e8e8e" stroke-width="1.4"/>
<line x1="193.4" y1="257.5" x2="193.4" y2="733.0" stroke="#8e8e8e" stroke-width="1.4"/>
<line x1="241.0" y1="257.5" x2="241.0" y2="733.0" stroke="#8e8e8e" stroke-width="1.4"/>
<line x1="336.2" y1="257.5" x2="336.2" y2="733.0" stroke="#8e8e8e" stroke-width="1.4"/>
<line x1="383.8" y1="257.5" x2="383.8" y2="733.0" stroke="#8e8e8e" stroke-width="1.4"/>
<line x1="49.9" y1="257.5" x2="409.3" y2="257.5" stroke="#8e8e8e" stroke-width="2.0"/>
<line x1="408.9" y1="257.5" x2="408.9" y2="733.0" stroke="#8e8e8e" stroke-width="1.6"/>
<line x1="50.9" y1="257.5" x2="50.9" y2="734.0" stroke="#9c9c9c" stroke-width="2.4"/>
<line x1="49.9" y1="733.0" x2="409.3" y2="733.0" stroke="#9c9c9c" stroke-width="2.0"/>
<line x1="122.0" y1="258.5" x2="122.0" y2="732.0" stroke="#ffff00" stroke-width="1.8"/>
<line x1="289.9" y1="258.5" x2="289.9" y2="732.0" stroke="#ff0a0a" stroke-width="2.0"/>
<line x1="44.0" y1="257.5" x2="50.9" y2="257.5" stroke="#cfcfcf" stroke-width="1.6"/>
<line x1="44.0" y1="337.3" x2="50.9" y2="337.3" stroke="#cfcfcf" stroke-width="1.6"/>
<line x1="44.0" y1="416.9" x2="50.9" y2="416.9" stroke="#cfcfcf" stroke-width="1.6"/>
<line x1="44.0" y1="496.0" x2="50.9" y2="496.0" stroke="#cfcfcf" stroke-width="1.6"/>
<line x1="44.0" y1="575.3" x2="50.9" y2="575.3" stroke="#cfcfcf" stroke-width="1.6"/>
<line x1="44.0" y1="653.8" x2="50.9" y2="653.8" stroke="#cfcfcf" stroke-width="1.6"/>
<line x1="44.0" y1="733.0" x2="50.9" y2="733.0" stroke="#cfcfcf" stroke-width="1.6"/>
<line x1="50.3" y1="733.0" x2="50.3" y2="740.5" stroke="#cfcfcf" stroke-width="1.8"/>
<text x="49.9" y="758.4" font-size="17.2" fill="#dadada" text-anchor="middle">0</text>
<line x1="97.9" y1="733.0" x2="97.9" y2="740.5" stroke="#cfcfcf" stroke-width="1.8"/>
<text x="97.5" y="758.4" font-size="17.2" fill="#dadada" text-anchor="middle">2</text>
<line x1="145.5" y1="733.0" x2="145.5" y2="740.5" stroke="#cfcfcf" stroke-width="1.8"/>
<text x="145.1" y="758.4" font-size="17.2" fill="#dadada" text-anchor="middle">4</text>
<line x1="193.2" y1="733.0" x2="193.2" y2="740.5" stroke="#cfcfcf" stroke-width="1.8"/>
<text x="192.8" y="758.4" font-size="17.2" fill="#dadada" text-anchor="middle">6</text>
<line x1="240.8" y1="733.0" x2="240.8" y2="740.5" stroke="#cfcfcf" stroke-width="1.8"/>
<text x="240.4" y="758.4" font-size="17.2" fill="#dadada" text-anchor="middle">8</text>
<line x1="288.4" y1="733.0" x2="288.4" y2="740.5" stroke="#cfcfcf" stroke-width="1.8"/>
<text x="288.0" y="758.4" font-size="17.2" fill="#dadada" text-anchor="middle">10</text>
<line x1="336.0" y1="733.0" x2="336.0" y2="740.5" stroke="#cfcfcf" stroke-width="1.8"/>
<text x="335.6" y="758.4" font-size="17.2" fill="#dadada" text-anchor="middle">12</text>
<line x1="383.6" y1="733.0" x2="383.6" y2="740.5" stroke="#cfcfcf" stroke-width="1.8"/>
<text x="383.2" y="758.4" font-size="17.2" fill="#dadada" text-anchor="middle">14</text>
<text x="49.8" y="304.9" font-size="16.8" fill="#dadada" text-anchor="end" textLength="41.8" lengthAdjust="spacingAndGlyphs">100%</text>
<text x="49.8" y="383.4" font-size="16.8" fill="#dadada" text-anchor="end" textLength="32.4" lengthAdjust="spacingAndGlyphs">80%</text>
<text x="49.8" y="462.8" font-size="16.8" fill="#dadada" text-anchor="end" textLength="32.4" lengthAdjust="spacingAndGlyphs">60%</text>
<text x="49.8" y="541.9" font-size="16.8" fill="#dadada" text-anchor="end" textLength="32.4" lengthAdjust="spacingAndGlyphs">40%</text>
<text x="49.8" y="620.8" font-size="16.8" fill="#dadada" text-anchor="end" textLength="32.4" lengthAdjust="spacingAndGlyphs">20%</text>
<text x="49.8" y="699.7" font-size="16.8" fill="#dadada" text-anchor="end" textLength="28.2" lengthAdjust="spacingAndGlyphs">100</text>
<rect x="52.1" y="265.4" width="43.3" height="8.9" fill="#000"/>
<rect x="52.1" y="266.4" width="41.8" height="6.6" fill="url(#db0_0)"/>
<rect x="52.1" y="266.4" width="41.8" height="2.0" fill="#fff" opacity=".10"/>
<rect x="52.1" y="274.6" width="24.2" height="8.9" fill="#000"/>
<rect x="52.1" y="275.6" width="22.7" height="6.6" fill="url(#db0_1)"/>
<rect x="52.1" y="275.6" width="22.7" height="2.0" fill="#fff" opacity=".10"/>
<rect x="52.1" y="283.9" width="69.5" height="8.9" fill="#000"/>
<rect x="52.1" y="284.9" width="68.0" height="6.6" fill="url(#db0_2)"/>
<rect x="52.1" y="284.9" width="68.0" height="2.0" fill="#fff" opacity=".10"/>
<rect x="52.1" y="293.1" width="32.3" height="8.9" fill="#000"/>
<rect x="52.1" y="294.1" width="30.8" height="6.6" fill="url(#db0_3)"/>
<rect x="52.1" y="294.1" width="30.8" height="2.0" fill="#fff" opacity=".10"/>
<rect x="52.1" y="302.4" width="12.3" height="8.9" fill="#000"/>
<rect x="52.1" y="303.4" width="10.8" height="6.6" fill="url(#db0_4)"/>
<rect x="52.1" y="303.4" width="10.8" height="2.0" fill="#fff" opacity=".10"/>
<rect x="52.1" y="311.6" width="40.2" height="8.9" fill="#000"/>
<rect x="52.1" y="312.6" width="38.7" height="6.6" fill="url(#db0_5)"/>
<rect x="52.1" y="312.6" width="38.7" height="2.0" fill="#fff" opacity=".10"/>
<rect x="52.1" y="345.2" width="43.3" height="8.9" fill="#000"/>
<rect x="52.1" y="346.2" width="41.8" height="6.6" fill="url(#db1_0)"/>
<rect x="52.1" y="346.2" width="41.8" height="2.0" fill="#fff" opacity=".10"/>
<rect x="52.1" y="354.4" width="26.6" height="8.9" fill="#000"/>
<rect x="52.1" y="355.4" width="25.1" height="6.6" fill="url(#db1_1)"/>
<rect x="52.1" y="355.4" width="25.1" height="2.0" fill="#fff" opacity=".10"/>
<rect x="52.1" y="363.7" width="58.0" height="8.9" fill="#000"/>
<rect x="52.1" y="364.7" width="56.5" height="6.6" fill="url(#db1_2)"/>
<rect x="52.1" y="364.7" width="56.5" height="2.0" fill="#fff" opacity=".10"/>
<rect x="52.1" y="372.9" width="32.3" height="8.9" fill="#000"/>
<rect x="52.1" y="373.9" width="30.8" height="6.6" fill="url(#db1_3)"/>
<rect x="52.1" y="373.9" width="30.8" height="2.0" fill="#fff" opacity=".10"/>
<rect x="52.1" y="382.2" width="6.9" height="8.9" fill="#000"/>
<rect x="52.1" y="383.2" width="5.4" height="6.6" fill="url(#db1_4)"/>
<rect x="52.1" y="383.2" width="5.4" height="2.0" fill="#fff" opacity=".10"/>
<rect x="52.1" y="391.4" width="36.6" height="8.9" fill="#000"/>
<rect x="52.1" y="392.4" width="35.1" height="6.6" fill="url(#db1_5)"/>
<rect x="52.1" y="392.4" width="35.1" height="2.0" fill="#fff" opacity=".10"/>
<rect x="52.1" y="424.8" width="28.8" height="8.9" fill="#000"/>
<rect x="52.1" y="425.8" width="27.3" height="6.6" fill="url(#db2_0)"/>
<rect x="52.1" y="425.8" width="27.3" height="2.0" fill="#fff" opacity=".10"/>
<rect x="52.1" y="434.0" width="16.1" height="8.9" fill="#000"/>
<rect x="52.1" y="435.0" width="14.6" height="6.6" fill="url(#db2_1)"/>
<rect x="52.1" y="435.0" width="14.6" height="2.0" fill="#fff" opacity=".10"/>
<rect x="52.1" y="443.3" width="48.5" height="8.9" fill="#000"/>
<rect x="52.1" y="444.3" width="47.0" height="6.6" fill="url(#db2_2)"/>
<rect x="52.1" y="444.3" width="47.0" height="2.0" fill="#fff" opacity=".10"/>
<rect x="52.1" y="452.5" width="35.2" height="8.9" fill="#000"/>
<rect x="52.1" y="453.5" width="33.7" height="6.6" fill="url(#db2_3)"/>
<rect x="52.1" y="453.5" width="33.7" height="2.0" fill="#fff" opacity=".10"/>
<rect x="52.1" y="461.8" width="19.5" height="8.9" fill="#000"/>
<rect x="52.1" y="462.8" width="18.0" height="6.6" fill="url(#db2_4)"/>
<rect x="52.1" y="462.8" width="18.0" height="2.0" fill="#fff" opacity=".10"/>
<rect x="52.1" y="471.0" width="28.8" height="8.9" fill="#000"/>
<rect x="52.1" y="472.0" width="27.3" height="6.6" fill="url(#db2_5)"/>
<rect x="52.1" y="472.0" width="27.3" height="2.0" fill="#fff" opacity=".10"/>
<rect x="52.1" y="503.9" width="23.0" height="8.9" fill="#000"/>
<rect x="52.1" y="504.9" width="21.5" height="6.6" fill="url(#db3_0)"/>
<rect x="52.1" y="504.9" width="21.5" height="2.0" fill="#fff" opacity=".10"/>
<rect x="52.1" y="513.2" width="12.8" height="8.9" fill="#000"/>
<rect x="52.1" y="514.2" width="11.3" height="6.6" fill="url(#db3_1)"/>
<rect x="52.1" y="514.2" width="11.3" height="2.0" fill="#fff" opacity=".10"/>
<rect x="52.1" y="522.4" width="36.4" height="8.9" fill="#000"/>
<rect x="52.1" y="523.4" width="34.9" height="6.6" fill="url(#db3_2)"/>
<rect x="52.1" y="523.4" width="34.9" height="2.0" fill="#fff" opacity=".10"/>
<rect x="52.1" y="531.7" width="44.5" height="8.9" fill="#000"/>
<rect x="52.1" y="532.7" width="43.0" height="6.6" fill="url(#db3_3)"/>
<rect x="52.1" y="532.7" width="43.0" height="2.0" fill="#fff" opacity=".10"/>
<rect x="52.1" y="540.9" width="23.0" height="8.9" fill="#000"/>
<rect x="52.1" y="541.9" width="21.5" height="6.6" fill="url(#db3_4)"/>
<rect x="52.1" y="541.9" width="21.5" height="2.0" fill="#fff" opacity=".10"/>
<rect x="52.1" y="550.2" width="21.1" height="8.9" fill="#000"/>
<rect x="52.1" y="551.2" width="19.6" height="6.6" fill="url(#db3_5)"/>
<rect x="52.1" y="551.2" width="19.6" height="2.0" fill="#fff" opacity=".10"/>
<rect x="52.1" y="583.2" width="12.1" height="8.9" fill="#000"/>
<rect x="52.1" y="584.2" width="10.6" height="6.6" fill="url(#db4_0)"/>
<rect x="52.1" y="584.2" width="10.6" height="2.0" fill="#fff" opacity=".10"/>
<rect x="52.1" y="592.5" width="19.5" height="8.9" fill="#000"/>
<rect x="52.1" y="593.5" width="18.0" height="6.6" fill="url(#db4_1)"/>
<rect x="52.1" y="593.5" width="18.0" height="2.0" fill="#fff" opacity=".10"/>
<rect x="52.1" y="601.7" width="39.7" height="8.9" fill="#000"/>
<rect x="52.1" y="602.7" width="38.2" height="6.6" fill="url(#db4_2)"/>
<rect x="52.1" y="602.7" width="38.2" height="2.0" fill="#fff" opacity=".10"/>
<rect x="52.1" y="611.0" width="52.1" height="8.9" fill="#000"/>
<rect x="52.1" y="612.0" width="50.6" height="6.6" fill="url(#db4_3)"/>
<rect x="52.1" y="612.0" width="50.6" height="2.0" fill="#fff" opacity=".10"/>
<rect x="52.1" y="620.2" width="23.0" height="8.9" fill="#000"/>
<rect x="52.1" y="621.2" width="21.5" height="6.6" fill="url(#db4_4)"/>
<rect x="52.1" y="621.2" width="21.5" height="2.0" fill="#fff" opacity=".10"/>
<rect x="52.1" y="629.5" width="26.9" height="8.9" fill="#000"/>
<rect x="52.1" y="630.5" width="25.4" height="6.6" fill="url(#db4_5)"/>
<rect x="52.1" y="630.5" width="25.4" height="2.0" fill="#fff" opacity=".10"/>
<rect x="51.9" y="717.9" width="44.6" height="8.6" fill="#000"/>
<rect x="51.9" y="718.2" width="43.2" height="6.9" fill="url(#dbw)"/>
<line x1="74.2" y1="258.5" x2="74.2" y2="732.0" stroke="#008400" stroke-width="1.9"/>
<rect x="469.9" y="179.0" width="166.5" height="366.4" fill="#252525"/>
<line x1="469.9" y1="241.7" x2="636.4" y2="241.7" stroke="#8e8e8e" stroke-width="1.5"/>
<line x1="469.9" y1="302.2" x2="636.4" y2="302.2" stroke="#8e8e8e" stroke-width="1.5"/>
<line x1="469.9" y1="362.7" x2="636.4" y2="362.7" stroke="#8e8e8e" stroke-width="1.5"/>
<line x1="469.9" y1="423.7" x2="636.4" y2="423.7" stroke="#8e8e8e" stroke-width="1.5"/>
<line x1="469.9" y1="484.7" x2="636.4" y2="484.7" stroke="#8e8e8e" stroke-width="1.5"/>
<line x1="468.9" y1="179.9" x2="637.4" y2="179.9" stroke="#8e8e8e" stroke-width="3.8"/>
<line x1="469.9" y1="179.0" x2="469.9" y2="553.4" stroke="#8e8e8e" stroke-width="1.8"/>
<line x1="636.4" y1="179.0" x2="636.4" y2="553.4" stroke="#8e8e8e" stroke-width="1.8"/>
<line x1="468.9" y1="545.4" x2="637.4" y2="545.4" stroke="#9c9c9c" stroke-width="2.0"/>
<line x1="463.4" y1="181.2" x2="469.9" y2="181.2" stroke="#cfcfcf" stroke-width="1.6"/>
<text x="462.9" y="188.0" font-size="16.3" fill="#dadada" text-anchor="end">15</text>
<line x1="463.4" y1="241.7" x2="469.9" y2="241.7" stroke="#cfcfcf" stroke-width="1.6"/>
<text x="462.9" y="247.7" font-size="16.3" fill="#dadada" text-anchor="end">10</text>
<line x1="463.4" y1="302.2" x2="469.9" y2="302.2" stroke="#cfcfcf" stroke-width="1.6"/>
<text x="462.9" y="308.2" font-size="16.3" fill="#dadada" text-anchor="end">5</text>
<line x1="463.4" y1="362.7" x2="469.9" y2="362.7" stroke="#cfcfcf" stroke-width="1.6"/>
<text x="462.9" y="368.7" font-size="16.3" fill="#dadada" text-anchor="end">0</text>
<line x1="463.4" y1="423.7" x2="469.9" y2="423.7" stroke="#cfcfcf" stroke-width="1.6"/>
<text x="462.9" y="429.7" font-size="16.3" fill="#dadada" text-anchor="end">-5</text>
<line x1="463.4" y1="484.7" x2="469.9" y2="484.7" stroke="#cfcfcf" stroke-width="1.6"/>
<text x="462.9" y="490.7" font-size="16.3" fill="#dadada" text-anchor="end">-10</text>
<line x1="463.4" y1="545.7" x2="469.9" y2="545.7" stroke="#cfcfcf" stroke-width="1.6"/>
<text x="462.9" y="551.7" font-size="16.3" fill="#dadada" text-anchor="end">-15</text>
<text x="537.8" y="173.5" font-size="16.1" fill="#dadada" text-anchor="middle" textLength="52.5" lengthAdjust="spacingAndGlyphs">Delta L</text>
<text x="553.1" y="562.0" font-size="16.3" fill="#dadada" text-anchor="middle" textLength="31.4" lengthAdjust="spacingAndGlyphs">20%</text>
<rect x="486.7" y="356.9" width="133.3" height="6.8" fill="#000"/>
<rect x="488.0" y="358.1" width="130.5" height="3.8" fill="url(#lav)"/>
<rect x="696.7" y="179.0" width="166.5" height="366.4" fill="#252525"/>
<line x1="696.7" y1="241.7" x2="863.2" y2="241.7" stroke="#8e8e8e" stroke-width="1.5"/>
<line x1="696.7" y1="302.2" x2="863.2" y2="302.2" stroke="#8e8e8e" stroke-width="1.5"/>
<line x1="696.7" y1="362.7" x2="863.2" y2="362.7" stroke="#8e8e8e" stroke-width="1.5"/>
<line x1="696.7" y1="423.7" x2="863.2" y2="423.7" stroke="#8e8e8e" stroke-width="1.5"/>
<line x1="696.7" y1="484.7" x2="863.2" y2="484.7" stroke="#8e8e8e" stroke-width="1.5"/>
<line x1="695.7" y1="179.9" x2="864.2" y2="179.9" stroke="#8e8e8e" stroke-width="3.8"/>
<line x1="696.7" y1="179.0" x2="696.7" y2="553.4" stroke="#8e8e8e" stroke-width="1.8"/>
<line x1="863.2" y1="179.0" x2="863.2" y2="553.4" stroke="#8e8e8e" stroke-width="1.8"/>
<line x1="695.7" y1="545.4" x2="864.2" y2="545.4" stroke="#9c9c9c" stroke-width="2.0"/>
<line x1="690.2" y1="181.2" x2="696.7" y2="181.2" stroke="#cfcfcf" stroke-width="1.6"/>
<text x="689.7" y="188.0" font-size="16.3" fill="#dadada" text-anchor="end">15</text>
<line x1="690.2" y1="241.7" x2="696.7" y2="241.7" stroke="#cfcfcf" stroke-width="1.6"/>
<text x="689.7" y="247.7" font-size="16.3" fill="#dadada" text-anchor="end">10</text>
<line x1="690.2" y1="302.2" x2="696.7" y2="302.2" stroke="#cfcfcf" stroke-width="1.6"/>
<text x="689.7" y="308.2" font-size="16.3" fill="#dadada" text-anchor="end">5</text>
<line x1="690.2" y1="362.7" x2="696.7" y2="362.7" stroke="#cfcfcf" stroke-width="1.6"/>
<text x="689.7" y="368.7" font-size="16.3" fill="#dadada" text-anchor="end">0</text>
<line x1="690.2" y1="423.7" x2="696.7" y2="423.7" stroke="#cfcfcf" stroke-width="1.6"/>
<text x="689.7" y="429.7" font-size="16.3" fill="#dadada" text-anchor="end">-5</text>
<line x1="690.2" y1="484.7" x2="696.7" y2="484.7" stroke="#cfcfcf" stroke-width="1.6"/>
<text x="689.7" y="490.7" font-size="16.3" fill="#dadada" text-anchor="end">-10</text>
<line x1="690.2" y1="545.7" x2="696.7" y2="545.7" stroke="#cfcfcf" stroke-width="1.6"/>
<text x="689.7" y="551.7" font-size="16.3" fill="#dadada" text-anchor="end">-15</text>
<text x="764.6" y="173.5" font-size="16.1" fill="#dadada" text-anchor="middle" textLength="54.5" lengthAdjust="spacingAndGlyphs">Delta C</text>
<text x="780.0" y="562.0" font-size="16.3" fill="#dadada" text-anchor="middle" textLength="31.4" lengthAdjust="spacingAndGlyphs">20%</text>
<rect x="713.5" y="361.9" width="133.5" height="26.4" fill="#000"/>
<rect x="714.8" y="363.3" width="130.5" height="23.4" fill="url(#lav)"/>
<rect x="923.5" y="179.0" width="166.5" height="366.4" fill="#252525"/>
<line x1="923.5" y1="241.7" x2="1090.0" y2="241.7" stroke="#8e8e8e" stroke-width="1.5"/>
<line x1="923.5" y1="302.2" x2="1090.0" y2="302.2" stroke="#8e8e8e" stroke-width="1.5"/>
<line x1="923.5" y1="362.7" x2="1090.0" y2="362.7" stroke="#8e8e8e" stroke-width="1.5"/>
<line x1="923.5" y1="423.7" x2="1090.0" y2="423.7" stroke="#8e8e8e" stroke-width="1.5"/>
<line x1="923.5" y1="484.7" x2="1090.0" y2="484.7" stroke="#8e8e8e" stroke-width="1.5"/>
<line x1="922.5" y1="179.9" x2="1091.0" y2="179.9" stroke="#8e8e8e" stroke-width="3.8"/>
<line x1="923.5" y1="179.0" x2="923.5" y2="553.4" stroke="#8e8e8e" stroke-width="1.8"/>
<line x1="1090.0" y1="179.0" x2="1090.0" y2="553.4" stroke="#8e8e8e" stroke-width="1.8"/>
<line x1="922.5" y1="545.4" x2="1091.0" y2="545.4" stroke="#9c9c9c" stroke-width="2.0"/>
<line x1="917.0" y1="181.2" x2="923.5" y2="181.2" stroke="#cfcfcf" stroke-width="1.6"/>
<text x="916.5" y="188.0" font-size="16.3" fill="#dadada" text-anchor="end">15</text>
<line x1="917.0" y1="241.7" x2="923.5" y2="241.7" stroke="#cfcfcf" stroke-width="1.6"/>
<text x="916.5" y="247.7" font-size="16.3" fill="#dadada" text-anchor="end">10</text>
<line x1="917.0" y1="302.2" x2="923.5" y2="302.2" stroke="#cfcfcf" stroke-width="1.6"/>
<text x="916.5" y="308.2" font-size="16.3" fill="#dadada" text-anchor="end">5</text>
<line x1="917.0" y1="362.7" x2="923.5" y2="362.7" stroke="#cfcfcf" stroke-width="1.6"/>
<text x="916.5" y="368.7" font-size="16.3" fill="#dadada" text-anchor="end">0</text>
<line x1="917.0" y1="423.7" x2="923.5" y2="423.7" stroke="#cfcfcf" stroke-width="1.6"/>
<text x="916.5" y="429.7" font-size="16.3" fill="#dadada" text-anchor="end">-5</text>
<line x1="917.0" y1="484.7" x2="923.5" y2="484.7" stroke="#cfcfcf" stroke-width="1.6"/>
<text x="916.5" y="490.7" font-size="16.3" fill="#dadada" text-anchor="end">-10</text>
<line x1="917.0" y1="545.7" x2="923.5" y2="545.7" stroke="#cfcfcf" stroke-width="1.6"/>
<text x="916.5" y="551.7" font-size="16.3" fill="#dadada" text-anchor="end">-15</text>
<text x="991.4" y="173.5" font-size="16.1" fill="#dadada" text-anchor="middle" textLength="55.5" lengthAdjust="spacingAndGlyphs">Delta H</text>
<text x="1006.8" y="562.0" font-size="16.3" fill="#dadada" text-anchor="middle" textLength="31.4" lengthAdjust="spacingAndGlyphs">20%</text>
<rect x="940.3" y="361.9" width="133.5" height="18.5" fill="#000"/>
<rect x="941.6" y="363.3" width="130.5" height="15.5" fill="url(#lav)"/>
<rect x="431.5" y="581.5" width="680.5" height="188.0" fill="#000"/>
<rect x="455.8" y="590.3" width="113.8" height="152.3" fill="#9c9cc4"/>
<rect x="455.8" y="590.3" width="113.8" height="75.9" fill="#9c9cc3"/>
<rect x="456.1" y="590.5" width="113.6" height="151.8" fill="none" stroke="#fff" stroke-width="1.5"/>
<text x="513.0" y="759.8" font-size="14.0" fill="#fff" text-anchor="middle" textLength="27.6" lengthAdjust="spacingAndGlyphs">20%</text>
<rect x="589.0" y="590.3" width="113.8" height="152.3" fill="#7c7ac0"/>
<rect x="589.0" y="590.3" width="113.8" height="75.9" fill="#7b7dbf"/>
<rect x="589.3" y="590.5" width="113.6" height="151.8" fill="none" stroke="#fff" stroke-width="1.5"/>
<text x="646.2" y="759.8" font-size="14.0" fill="#fff" text-anchor="middle" textLength="27.6" lengthAdjust="spacingAndGlyphs">40%</text>
<rect x="722.0" y="590.3" width="113.8" height="152.3" fill="#615ebf"/>
<rect x="722.0" y="590.3" width="113.8" height="75.9" fill="#5960c2"/>
<rect x="722.3" y="590.5" width="113.6" height="151.8" fill="none" stroke="#fff" stroke-width="1.5"/>
<text x="779.2" y="759.8" font-size="14.0" fill="#fff" text-anchor="middle" textLength="27.6" lengthAdjust="spacingAndGlyphs">60%</text>
<rect x="855.0" y="590.3" width="113.8" height="152.3" fill="#4540bf"/>
<rect x="855.0" y="590.3" width="113.8" height="75.9" fill="#2e40c0"/>
<rect x="855.3" y="590.5" width="113.6" height="151.8" fill="none" stroke="#fff" stroke-width="1.5"/>
<text x="912.2" y="759.8" font-size="14.0" fill="#fff" text-anchor="middle" textLength="27.6" lengthAdjust="spacingAndGlyphs">80%</text>
<rect x="987.6" y="590.3" width="113.8" height="152.3" fill="#2e2ac2"/>
<rect x="987.6" y="590.3" width="113.8" height="75.9" fill="#0033c0"/>
<rect x="987.9" y="590.5" width="113.6" height="151.8" fill="none" stroke="#fff" stroke-width="1.5"/>
<text x="1044.8" y="759.8" font-size="14.0" fill="#fff" text-anchor="middle" textLength="35.4" lengthAdjust="spacingAndGlyphs">100%</text>
<text transform="translate(447.2,643.4) rotate(-90)" font-size="14.4" fill="#fff" textLength="40" lengthAdjust="spacingAndGlyphs">Actual</text>
<text transform="translate(447.2,729.2) rotate(-90)" font-size="14.4" fill="#fff" textLength="40.6" lengthAdjust="spacingAndGlyphs">Target</text>
<text x="16.6" y="851.8" font-size="33.0" fill="#f2f2f2" textLength="118.6" lengthAdjust="spacingAndGlyphs">Current</text>
<text x="144.6" y="851.8" font-size="33.0" fill="#f2f2f2" textLength="125.4" lengthAdjust="spacingAndGlyphs">Reading</text>
<text x="18.0" y="900.6" font-size="28.8" fill="#f2f2f2" textLength="117.5" lengthAdjust="spacingAndGlyphs">x: 0,2799</text>
<text x="18.0" y="947.6" font-size="28.8" fill="#f2f2f2" textLength="118.0" lengthAdjust="spacingAndGlyphs">y: 0,2796</text>
<text x="18.0" y="995.0" font-size="28.8" fill="#f2f2f2" textLength="110.0" lengthAdjust="spacingAndGlyphs">fL: 50,17</text>
<text x="18.0" y="1042.0" font-size="28.8" fill="#f2f2f2" textLength="182.5" lengthAdjust="spacingAndGlyphs">cd/m²: 171,88</text>
<rect x="411.5" y="828.8" width="286.7" height="208.2" fill="#252525"/>
<line x1="411.5" y1="850.8" x2="698.2" y2="850.8" stroke="#8e8e8e" stroke-width="1.6"/>
<line x1="405.0" y1="850.8" x2="411.5" y2="850.8" stroke="#cfcfcf" stroke-width="1.6"/>
<text x="403.5" y="856.8" font-size="16.2" fill="#dadada" text-anchor="end" textLength="28.2" lengthAdjust="spacingAndGlyphs">104</text>
<line x1="411.5" y1="892.5" x2="698.2" y2="892.5" stroke="#8e8e8e" stroke-width="1.6"/>
<line x1="405.0" y1="892.5" x2="411.5" y2="892.5" stroke="#cfcfcf" stroke-width="1.6"/>
<text x="403.5" y="898.5" font-size="16.2" fill="#dadada" text-anchor="end" textLength="28.2" lengthAdjust="spacingAndGlyphs">102</text>
<line x1="411.5" y1="934.2" x2="698.2" y2="934.2" stroke="#8e8e8e" stroke-width="1.6"/>
<line x1="405.0" y1="934.2" x2="411.5" y2="934.2" stroke="#cfcfcf" stroke-width="1.6"/>
<text x="403.5" y="940.2" font-size="16.2" fill="#dadada" text-anchor="end" textLength="28.2" lengthAdjust="spacingAndGlyphs">100</text>
<line x1="411.5" y1="975.9" x2="698.2" y2="975.9" stroke="#8e8e8e" stroke-width="1.6"/>
<line x1="405.0" y1="975.9" x2="411.5" y2="975.9" stroke="#cfcfcf" stroke-width="1.6"/>
<text x="403.5" y="981.9" font-size="16.2" fill="#dadada" text-anchor="end" textLength="18.6" lengthAdjust="spacingAndGlyphs">98</text>
<line x1="411.5" y1="1017.6" x2="698.2" y2="1017.6" stroke="#8e8e8e" stroke-width="1.6"/>
<line x1="405.0" y1="1017.6" x2="411.5" y2="1017.6" stroke="#cfcfcf" stroke-width="1.6"/>
<text x="403.5" y="1023.6" font-size="16.2" fill="#dadada" text-anchor="end" textLength="18.6" lengthAdjust="spacingAndGlyphs">96</text>
<line x1="410.5" y1="828.8" x2="699.2" y2="828.8" stroke="#8e8e8e" stroke-width="2.0"/>
<line x1="411.5" y1="828.8" x2="411.5" y2="1044.0" stroke="#8e8e8e" stroke-width="1.8"/>
<line x1="698.2" y1="828.8" x2="698.2" y2="1044.0" stroke="#8e8e8e" stroke-width="1.8"/>
<line x1="410.5" y1="1037.0" x2="699.2" y2="1037.0" stroke="#9c9c9c" stroke-width="2.0"/>
<rect x="438.4" y="944.4" width="76.6" height="91.8" fill="#000"/>
<rect x="439.6" y="945.8" width="74.0" height="90.2" fill="url(#rb_r)"/>
<rect x="515.4" y="916.3" width="76.6" height="119.9" fill="#000"/>
<rect x="516.6" y="917.7" width="74.0" height="118.3" fill="url(#rb_g)"/>
<rect x="592.2" y="943.0" width="76.6" height="93.2" fill="#000"/>
<rect x="593.4" y="944.4" width="74.0" height="91.6" fill="url(#rb_b)"/>
<text x="537.5" y="823.0" font-size="15.9" fill="#dadada" text-anchor="middle" textLength="95.0" lengthAdjust="spacingAndGlyphs">RGB Balance</text>
<text x="555.0" y="1056.0" font-size="16.3" fill="#dadada" text-anchor="middle" textLength="31.4" lengthAdjust="spacingAndGlyphs">20%</text>
<rect x="1120" y="143.2" width="798" height="641.7" rx="2" fill="#9c9cc4"/>
<rect x="1128.4" y="151.3" width="781.6" height="625.5" fill="#333333"/>
<text x="1519.0" y="173.0" font-size="16.3" fill="#dadada" text-anchor="middle" textLength="87.0" lengthAdjust="spacingAndGlyphs">CIE 1931 xy</text>
<rect x="1162.0" y="178.3" width="745.0" height="565.4" fill="#252525"/>
<g clip-path="url(#locus)" shape-rendering="geometricPrecision">
<path d="M1315.6,740.5 L1312.7,739.7 L1309.9,737.9 L1307.2,736.0 L1304.0,733.9 L1300.8,731.8 L1297.9,729.8 L1294.6,727.6 L1292.2,725.7 L1289.5,723.7 L1286.7,721.3 L1283.7,718.5 L1280.3,714.9 L1276.4,710.4 L1274.2,707.7 L1272.0,704.7 L1269.6,701.5 L1267.2,698.0 L1264.6,694.1 L1261.9,689.9 L1259.1,685.2 L1256.1,680.0 L1253.1,674.4 L1249.8,668.2 L1246.4,661.5 L1242.9,654.3 L1239.2,646.4 L1235.3,638.0 L1231.2,628.8 L1227.1,619.0 L1222.9,608.4 L1218.7,597.1 L1214.6,585.1 L1210.4,572.4 L1206.3,559.0 L1202.2,544.9 L1198.1,530.1 L1194.1,514.6 L1190.1,498.6 L1186.4,482.2 L1182.8,465.5 L1179.5,448.7 L1176.4,431.7 L1173.7,414.6 L1171.3,397.7 L1169.2,380.8 L1167.6,364.2 L1166.3,348.0 L1165.5,332.3 L1165.2,317.1 L1165.4,302.3 L1166.1,288.1 L1167.3,274.5 L1169.1,261.6 L1171.4,249.4 L1174.3,238.1 L1177.7,227.7 L1181.7,218.2 L1186.2,209.8 L1191.1,202.5 L1196.4,196.4 L1202.2,191.4 L1208.2,187.5 L1214.6,184.7 L1221.1,182.7 L1227.8,181.7 L1234.7,181.5 L1241.7,182.1 L1248.8,183.2 L1255.9,184.8 L1263.1,186.8 L1270.4,189.2 L1277.7,191.7 L1284.9,194.5 L1292.0,197.5 L1299.1,200.5 L1306.0,203.7 L1312.8,206.8 L1319.6,210.1 L1326.3,213.4 L1332.9,216.9 L1339.5,220.4 L1346.0,224.0 L1352.5,227.7 L1359.0,231.4 L1365.4,235.3 L1371.9,239.2 L1378.3,243.2 L1384.7,247.2 L1391.1,251.3 L1397.5,255.5 L1403.8,259.7 L1410.2,264.0 L1416.5,268.3 L1422.9,272.7 L1429.2,277.1 L1435.6,281.5 L1441.9,286.0 L1448.2,290.5 L1454.6,295.1 L1460.9,299.6 L1467.2,304.2 L1473.6,308.9 L1479.9,313.5 L1486.2,318.2 L1492.6,322.8 L1498.9,327.5 L1505.2,332.2 L1511.5,336.9 L1517.8,341.6 L1524.1,346.3 L1530.4,351.0 L1536.7,355.7 L1543.0,360.4 L1549.2,365.1 L1555.4,369.8 L1561.6,374.5 L1567.8,379.2 L1574.0,383.8 L1580.1,388.5 L1586.2,393.1 L1592.3,397.7 L1598.3,402.2 L1604.2,406.8 L1610.2,411.3 L1616.1,415.7 L1621.9,420.2 L1627.7,424.5 L1633.4,428.9 L1639.1,433.2 L1644.7,437.4 L1650.2,441.6 L1655.7,445.7 L1661.1,449.8 L1666.4,453.8 L1671.6,457.8 L1676.7,461.7 L1681.8,465.5 L1686.7,469.3 L1691.5,472.9 L1696.2,476.5 L1700.7,479.9 L1705.1,483.2 L1709.4,486.4 L1713.5,489.6 L1717.6,492.6 L1721.5,495.7 L1725.4,498.6 L1729.2,501.4 L1732.8,504.2 L1736.3,506.9 L1739.7,509.4 L1742.9,511.8 L1746.0,514.2 L1749.0,516.4 L1751.9,518.6 L1754.6,520.7 L1757.3,522.7 L1759.8,524.6 L1762.2,526.4 L1766.8,529.9 L1770.9,533.0 L1774.7,535.9 L1778.1,538.5 L1781.3,540.9 L1784.1,543.0 L1786.8,545.0 L1789.2,546.9 L1792.6,549.4 L1795.6,551.7 L1798.3,553.7 L1801.3,556.0 L1803.8,557.9 L1806.5,560.0 L1809.0,561.9 L1811.4,563.7 L1812.9,564.9Z" fill="#009900"/>
<polygon points="1427.8,339.3 2225.2,-1844.5 -379.6,-752.6" fill="#009900"/>
<polygon points="1294.9,703.3 497.5,2887.0 -1309.9,1795.1" fill="#000099"/>
<polygon points="1729.0,521.3 3536.5,1613.2 4333.9,-570.6" fill="#990000"/>
<polygon points="1730.7,522.3 3909.6,-382.7 3873.4,-404.5 1724.7,518.6" fill="#990000"/>
<polygon points="1726.3,519.6 3883.3,-398.5 3857.0,-414.4 1721.9,517.0" fill="#990100"/>
<polygon points="1723.6,518.0 3866.9,-408.5 3840.6,-424.4 1719.2,515.3" fill="#990200"/>
<polygon points="1720.8,516.3 3850.4,-418.4 3824.2,-434.3 1716.4,513.7" fill="#990300"/>
<polygon points="1718.1,514.7 3834.0,-428.3 3807.7,-444.2 1713.7,512.0" fill="#990400"/>
<polygon points="1715.3,513.0 3817.6,-438.3 3791.3,-454.1 1711.0,510.4" fill="#990400"/>
<polygon points="1712.6,511.4 3801.2,-448.2 3774.9,-464.1 1708.2,508.7" fill="#990500"/>
<polygon points="1709.9,509.7 3784.7,-458.1 3758.4,-474.0 1705.5,507.1" fill="#990600"/>
<polygon points="1707.1,508.0 3768.3,-468.0 3742.0,-483.9 1702.7,505.4" fill="#990700"/>
<polygon points="1704.4,506.4 3751.9,-478.0 3725.6,-493.8 1700.0,503.7" fill="#990800"/>
<polygon points="1701.7,504.7 3735.4,-487.9 3709.1,-503.8 1697.3,502.1" fill="#990900"/>
<polygon points="1698.9,503.1 3719.0,-497.8 3692.7,-513.7 1694.5,500.4" fill="#990a00"/>
<polygon points="1696.2,501.4 3702.6,-507.7 3676.3,-523.6 1691.8,498.8" fill="#990b00"/>
<polygon points="1693.4,499.8 3686.1,-517.7 3659.8,-533.5 1689.1,497.1" fill="#990c00"/>
<polygon points="1690.7,498.1 3669.7,-527.6 3643.4,-543.5 1686.3,495.5" fill="#990d00"/>
<polygon points="1688.0,496.5 3653.3,-537.5 3627.0,-553.4 1683.6,493.8" fill="#990e00"/>
<polygon points="1685.2,494.8 3636.8,-547.4 3610.5,-563.3 1680.8,492.2" fill="#990f00"/>
<polygon points="1682.5,493.2 3620.4,-557.4 3594.1,-573.2 1678.1,490.5" fill="#991000"/>
<polygon points="1679.7,491.5 3604.0,-567.3 3577.7,-583.2 1675.4,488.9" fill="#991100"/>
<polygon points="1677.0,489.8 3587.5,-577.2 3561.3,-593.1 1672.6,487.2" fill="#991200"/>
<polygon points="1674.3,488.2 3571.1,-587.1 3544.8,-603.0 1669.9,485.5" fill="#991300"/>
<polygon points="1671.5,486.5 3554.7,-597.1 3528.4,-613.0 1667.1,483.9" fill="#991400"/>
<polygon points="1668.8,484.9 3538.3,-607.0 3512.0,-622.9 1664.4,482.2" fill="#991500"/>
<polygon points="1666.1,483.2 3521.8,-616.9 3495.5,-632.8 1661.7,480.6" fill="#991600"/>
<polygon points="1663.3,481.6 3505.4,-626.8 3479.1,-642.7 1658.9,478.9" fill="#991800"/>
<polygon points="1660.6,479.9 3489.0,-636.8 3462.7,-652.7 1656.2,477.3" fill="#991900"/>
<polygon points="1657.8,478.3 3472.5,-646.7 3446.2,-662.6 1653.5,475.6" fill="#991a00"/>
<polygon points="1655.1,476.6 3456.1,-656.6 3429.8,-672.5 1650.7,474.0" fill="#991c00"/>
<polygon points="1652.4,475.0 3439.7,-666.6 3413.4,-682.4 1648.0,472.3" fill="#991d00"/>
<polygon points="1649.6,473.3 3423.2,-676.5 3396.9,-692.4 1645.2,470.7" fill="#991e00"/>
<polygon points="1646.9,471.6 3406.8,-686.4 3380.5,-702.3 1642.5,469.0" fill="#992000"/>
<polygon points="1644.1,470.0 3390.4,-696.3 3364.1,-712.2 1639.8,467.3" fill="#992100"/>
<polygon points="1641.4,468.3 3373.9,-706.3 3347.6,-722.1 1637.0,465.7" fill="#992300"/>
<polygon points="1638.7,466.7 3357.5,-716.2 3331.2,-732.1 1634.3,464.0" fill="#992400"/>
<polygon points="1635.9,465.0 3341.1,-726.1 3314.8,-742.0 1631.5,462.4" fill="#992600"/>
<polygon points="1633.2,463.4 3324.6,-736.0 3298.4,-751.9 1628.8,460.7" fill="#992700"/>
<polygon points="1630.5,461.7 3308.2,-746.0 3281.9,-761.8 1626.1,459.1" fill="#992900"/>
<polygon points="1627.7,460.1 3291.8,-755.9 3265.5,-771.8 1623.3,457.4" fill="#992b00"/>
<polygon points="1625.0,458.4 3275.4,-765.8 3249.1,-781.7 1620.6,455.8" fill="#992d00"/>
<polygon points="1622.2,456.8 3258.9,-775.7 3232.6,-791.6 1617.9,454.1" fill="#992e00"/>
<polygon points="1619.5,455.1 3242.5,-785.7 3216.2,-801.5 1615.1,452.5" fill="#993000"/>
<polygon points="1616.8,453.5 3226.1,-795.6 3199.8,-811.5 1612.4,450.8" fill="#993200"/>
<polygon points="1614.0,451.8 3209.6,-805.5 3183.3,-821.4 1609.6,449.1" fill="#993400"/>
<polygon points="1611.3,450.1 3193.2,-815.4 3166.9,-831.3 1606.9,447.5" fill="#993600"/>
<polygon points="1608.5,448.5 3176.8,-825.4 3150.5,-841.3 1604.2,445.8" fill="#993800"/>
<polygon points="1605.8,446.8 3160.3,-835.3 3134.0,-851.2 1601.4,444.2" fill="#993a00"/>
<polygon points="1603.1,445.2 3143.9,-845.2 3117.6,-861.1 1598.7,442.5" fill="#993d00"/>
<polygon points="1600.3,443.5 3127.5,-855.2 3101.2,-871.0 1595.9,440.9" fill="#993f00"/>
<polygon points="1597.6,441.9 3111.0,-865.1 3084.7,-881.0 1593.2,439.2" fill="#994100"/>
<polygon points="1594.9,440.2 3094.6,-875.0 3068.3,-890.9 1590.5,437.6" fill="#994400"/>
<polygon points="1592.1,438.6 3078.2,-884.9 3051.9,-900.8 1587.7,435.9" fill="#994600"/>
<polygon points="1589.4,436.9 3061.7,-894.9 3035.5,-910.7 1585.0,434.3" fill="#994900"/>
<polygon points="1586.6,435.3 3045.3,-904.8 3019.0,-920.7 1582.3,432.6" fill="#994c00"/>
<polygon points="1583.9,433.6 3028.9,-914.7 3002.6,-930.6 1579.5,431.0" fill="#994e00"/>
<polygon points="1581.2,431.9 3012.5,-924.6 2986.2,-940.5 1576.8,429.3" fill="#995100"/>
<polygon points="1578.4,430.3 2996.0,-934.6 2969.7,-950.4 1574.0,427.6" fill="#995400"/>
<polygon points="1575.7,428.6 2979.6,-944.5 2953.3,-960.4 1571.3,426.0" fill="#995700"/>
<polygon points="1572.9,427.0 2963.2,-954.4 2936.9,-970.3 1568.6,424.3" fill="#995b00"/>
<polygon points="1570.2,425.3 2946.7,-964.3 2920.4,-980.2 1565.8,422.7" fill="#995e00"/>
<polygon points="1567.5,423.7 2930.3,-974.3 2904.0,-990.1 1563.1,421.0" fill="#996100"/>
<polygon points="1564.7,422.0 2913.9,-984.2 2887.6,-1000.1 1560.3,419.4" fill="#996500"/>
<polygon points="1562.0,420.4 2897.4,-994.1 2871.1,-1010.0 1557.6,417.7" fill="#996900"/>
<polygon points="1559.3,418.7 2881.0,-1004.0 2854.7,-1019.9 1554.9,416.1" fill="#996d00"/>
<polygon points="1556.5,417.1 2864.6,-1014.0 2838.3,-1029.9 1552.1,414.4" fill="#997100"/>
<polygon points="1553.8,415.4 2848.1,-1023.9 2821.8,-1039.8 1549.4,412.8" fill="#997500"/>
<polygon points="1551.0,413.7 2831.7,-1033.8 2805.4,-1049.7 1546.7,411.1" fill="#997a00"/>
<polygon points="1548.3,412.1 2815.3,-1043.7 2789.0,-1059.6 1543.9,409.4" fill="#997e00"/>
<polygon points="1545.6,410.4 2798.8,-1053.7 2772.6,-1069.6 1541.2,407.8" fill="#998300"/>
<polygon points="1542.8,408.8 2782.4,-1063.6 2756.1,-1079.5 1538.4,406.1" fill="#998900"/>
<polygon points="1540.1,407.1 2766.0,-1073.5 2739.7,-1089.4 1535.7,404.5" fill="#998e00"/>
<polygon points="1537.3,405.5 2749.6,-1083.5 2723.3,-1099.3 1533.0,402.8" fill="#999400"/>
<polygon points="1534.6,403.8 2733.1,-1093.4 2706.8,-1109.3 1530.2,401.2" fill="#989900"/>
<polygon points="1531.9,402.2 2716.7,-1103.3 2690.4,-1119.2 1527.5,399.5" fill="#929900"/>
<polygon points="1529.1,400.5 2700.3,-1113.2 2674.0,-1129.1 1524.7,397.9" fill="#8d9900"/>
<polygon points="1526.4,398.9 2683.8,-1123.2 2657.5,-1139.0 1522.0,396.2" fill="#879900"/>
<polygon points="1523.6,397.2 2667.4,-1133.1 2641.1,-1149.0 1519.3,394.6" fill="#819900"/>
<polygon points="1520.9,395.5 2651.0,-1143.0 2624.7,-1158.9 1516.5,392.9" fill="#7c9900"/>
<polygon points="1518.2,393.9 2634.5,-1152.9 2608.2,-1168.8 1513.8,391.2" fill="#779900"/>
<polygon points="1515.4,392.2 2618.1,-1162.9 2591.8,-1178.7 1511.1,389.6" fill="#729900"/>
<polygon points="1512.7,390.6 2601.7,-1172.8 2575.4,-1188.7 1508.3,387.9" fill="#6d9900"/>
<polygon points="1510.0,388.9 2585.2,-1182.7 2558.9,-1198.6 1505.6,386.3" fill="#689900"/>
<polygon points="1507.2,387.3 2568.8,-1192.6 2542.5,-1208.5 1502.8,384.6" fill="#639900"/>
<polygon points="1504.5,385.6 2552.4,-1202.6 2526.1,-1218.4 1500.1,383.0" fill="#5e9900"/>
<polygon points="1501.7,384.0 2535.9,-1212.5 2509.7,-1228.4 1497.4,381.3" fill="#5a9900"/>
<polygon points="1499.0,382.3 2519.5,-1222.4 2493.2,-1238.3 1494.6,379.7" fill="#559900"/>
<polygon points="1496.3,380.7 2503.1,-1232.3 2476.8,-1248.2 1491.9,378.0" fill="#519900"/>
<polygon points="1493.5,379.0 2486.7,-1242.3 2460.4,-1258.2 1489.1,376.4" fill="#4d9900"/>
<polygon points="1490.8,377.4 2470.2,-1252.2 2443.9,-1268.1 1486.4,374.7" fill="#499900"/>
<polygon points="1488.0,375.7 2453.8,-1262.1 2427.5,-1278.0 1483.7,373.0" fill="#459900"/>
<polygon points="1485.3,374.0 2437.4,-1272.1 2411.1,-1287.9 1480.9,371.4" fill="#419900"/>
<polygon points="1482.6,372.4 2420.9,-1282.0 2394.6,-1297.9 1478.2,369.7" fill="#3d9900"/>
<polygon points="1479.8,370.7 2404.5,-1291.9 2378.2,-1307.8 1475.5,368.1" fill="#399900"/>
<polygon points="1477.1,369.1 2388.1,-1301.8 2361.8,-1317.7 1472.7,366.4" fill="#369900"/>
<polygon points="1474.4,367.4 2371.6,-1311.8 2345.3,-1327.6 1470.0,364.8" fill="#329900"/>
<polygon points="1471.6,365.8 2355.2,-1321.7 2328.9,-1337.6 1467.2,363.1" fill="#2e9900"/>
<polygon points="1468.9,364.1 2338.8,-1331.6 2312.5,-1347.5 1464.5,361.5" fill="#2b9900"/>
<polygon points="1466.1,362.5 2322.3,-1341.5 2296.0,-1357.4 1461.8,359.8" fill="#289900"/>
<polygon points="1463.4,360.8 2305.9,-1351.5 2279.6,-1367.3 1459.0,358.2" fill="#249900"/>
<polygon points="1460.7,359.2 2289.5,-1361.4 2263.2,-1377.3 1456.3,356.5" fill="#219900"/>
<polygon points="1457.9,357.5 2273.0,-1371.3 2246.8,-1387.2 1453.5,354.9" fill="#1e9900"/>
<polygon points="1455.2,355.8 2256.6,-1381.2 2230.3,-1397.1 1450.8,353.2" fill="#1b9900"/>
<polygon points="1452.4,354.2 2240.2,-1391.2 2213.9,-1407.0 1448.1,351.5" fill="#189900"/>
<polygon points="1449.7,352.5 2223.8,-1401.1 2197.5,-1417.0 1445.3,349.9" fill="#159900"/>
<polygon points="1447.0,350.9 2207.3,-1411.0 2181.0,-1426.9 1442.6,348.2" fill="#129900"/>
<polygon points="1444.2,349.2 2190.9,-1420.9 2164.6,-1436.8 1439.8,346.6" fill="#0f9900"/>
<polygon points="1441.5,347.6 2174.5,-1430.9 2148.2,-1446.8 1437.1,344.9" fill="#0c9900"/>
<polygon points="1438.8,345.9 2158.0,-1440.8 2131.7,-1456.7 1434.4,343.3" fill="#099900"/>
<polygon points="1436.0,344.3 2141.6,-1450.7 2115.3,-1466.6 1431.6,341.6" fill="#079900"/>
<polygon points="1433.3,342.6 2125.2,-1460.6 2098.9,-1476.5 1428.9,340.0" fill="#049900"/>
<polygon points="1430.5,341.0 2108.7,-1470.6 2082.4,-1486.5 1426.2,338.3" fill="#019900"/>
<polygon points="1428.5,337.3 -74.1,-582.5 -90.0,-538.8 1425.9,344.6" fill="#009900"/>
<polygon points="1426.6,342.6 -85.6,-550.7 -97.2,-519.0 1424.7,347.9" fill="#009902"/>
<polygon points="1425.4,345.9 -92.9,-530.9 -104.5,-499.1 1423.5,351.2" fill="#009904"/>
<polygon points="1424.2,349.2 -100.1,-511.0 -111.7,-479.3 1422.2,354.5" fill="#009905"/>
<polygon points="1423.0,352.5 -107.4,-491.2 -119.0,-459.4 1421.0,357.8" fill="#009906"/>
<polygon points="1421.8,355.8 -114.6,-471.3 -126.2,-439.6 1419.8,361.1" fill="#009908"/>
<polygon points="1420.6,359.2 -121.9,-451.5 -133.5,-419.7 1418.6,364.4" fill="#00990a"/>
<polygon points="1419.3,362.5 -129.1,-431.6 -140.7,-399.9 1417.4,367.8" fill="#00990b"/>
<polygon points="1418.1,365.8 -136.4,-411.8 -148.0,-380.0 1416.2,371.1" fill="#00990d"/>
<polygon points="1416.9,369.1 -143.6,-391.9 -155.2,-360.2 1415.0,374.4" fill="#00990e"/>
<polygon points="1415.7,372.4 -150.9,-372.1 -162.5,-340.3 1413.8,377.7" fill="#009910"/>
<polygon points="1414.5,375.7 -158.1,-352.2 -169.7,-320.5 1412.6,381.0" fill="#009912"/>
<polygon points="1413.3,379.0 -165.4,-332.4 -177.0,-300.6 1411.4,384.3" fill="#009913"/>
<polygon points="1412.1,382.3 -172.6,-312.5 -184.2,-280.8 1410.2,387.6" fill="#009915"/>
<polygon points="1410.9,385.6 -179.9,-292.7 -191.5,-260.9 1409.0,390.9" fill="#009917"/>
<polygon points="1409.7,388.9 -187.1,-272.8 -198.7,-241.1 1407.7,394.2" fill="#009919"/>
<polygon points="1408.5,392.2 -194.4,-253.0 -206.0,-221.2 1406.5,397.5" fill="#00991b"/>
<polygon points="1407.3,395.5 -201.6,-233.1 -213.2,-201.3 1405.3,400.8" fill="#00991d"/>
<polygon points="1406.1,398.9 -208.9,-213.3 -220.5,-181.5 1404.1,404.2" fill="#00991f"/>
<polygon points="1404.8,402.2 -216.1,-193.4 -227.7,-161.6 1402.9,407.5" fill="#009921"/>
<polygon points="1403.6,405.5 -223.4,-173.6 -235.0,-141.8 1401.7,410.8" fill="#009923"/>
<polygon points="1402.4,408.8 -230.6,-153.7 -242.2,-121.9 1400.5,414.1" fill="#009925"/>
<polygon points="1401.2,412.1 -237.9,-133.8 -249.5,-102.1 1399.3,417.4" fill="#009927"/>
<polygon points="1400.0,415.4 -245.1,-114.0 -256.7,-82.2 1398.1,420.7" fill="#009929"/>
<polygon points="1398.8,418.7 -252.4,-94.1 -264.0,-62.4 1396.9,424.0" fill="#00992b"/>
<polygon points="1397.6,422.0 -259.6,-74.3 -271.2,-42.5 1395.7,427.3" fill="#00992e"/>
<polygon points="1396.4,425.3 -266.9,-54.4 -278.5,-22.7 1394.5,430.6" fill="#009930"/>
<polygon points="1395.2,428.6 -274.1,-34.6 -285.7,-2.8 1393.2,433.9" fill="#009933"/>
<polygon points="1394.0,431.9 -281.4,-14.7 -293.0,17.0 1392.0,437.2" fill="#009935"/>
<polygon points="1392.8,435.3 -288.6,5.1 -300.2,36.9 1390.8,440.5" fill="#009938"/>
<polygon points="1391.6,438.6 -295.9,25.0 -307.5,56.7 1389.6,443.9" fill="#00993a"/>
<polygon points="1390.3,441.9 -303.1,44.8 -314.7,76.6 1388.4,447.2" fill="#00993d"/>
<polygon points="1389.1,445.2 -310.4,64.7 -322.0,96.4 1387.2,450.5" fill="#009940"/>
<polygon points="1387.9,448.5 -317.6,84.5 -329.2,116.3 1386.0,453.8" fill="#009942"/>
<polygon points="1386.7,451.8 -324.9,104.4 -336.5,136.1 1384.8,457.1" fill="#009945"/>
<polygon points="1385.5,455.1 -332.1,124.2 -343.7,156.0 1383.6,460.4" fill="#009948"/>
<polygon points="1384.3,458.4 -339.4,144.1 -351.0,175.8 1382.4,463.7" fill="#00994b"/>
<polygon points="1383.1,461.7 -346.6,163.9 -358.2,195.7 1381.2,467.0" fill="#00994e"/>
<polygon points="1381.9,465.0 -353.9,183.8 -365.5,215.6 1380.0,470.3" fill="#009952"/>
<polygon points="1380.7,468.3 -361.1,203.6 -372.7,235.4 1378.7,473.6" fill="#009955"/>
<polygon points="1379.5,471.6 -368.4,223.5 -380.0,255.3 1377.5,476.9" fill="#009958"/>
<polygon points="1378.3,475.0 -375.6,243.3 -387.2,275.1 1376.3,480.3" fill="#00995c"/>
<polygon points="1377.1,478.3 -382.9,263.2 -394.5,295.0 1375.1,483.6" fill="#00995f"/>
<polygon points="1375.8,481.6 -390.1,283.1 -401.7,314.8 1373.9,486.9" fill="#009963"/>
<polygon points="1374.6,484.9 -397.4,302.9 -409.0,334.7 1372.7,490.2" fill="#009967"/>
<polygon points="1373.4,488.2 -404.6,322.8 -416.2,354.5 1371.5,493.5" fill="#00996b"/>
<polygon points="1372.2,491.5 -411.9,342.6 -423.5,374.4 1370.3,496.8" fill="#00996f"/>
<polygon points="1371.0,494.8 -419.1,362.5 -430.7,394.2 1369.1,500.1" fill="#009973"/>
<polygon points="1369.8,498.1 -426.4,382.3 -438.0,414.1 1367.9,503.4" fill="#009978"/>
<polygon points="1368.6,501.4 -433.6,402.2 -445.2,433.9 1366.7,506.7" fill="#00997c"/>
<polygon points="1367.4,504.7 -440.9,422.0 -452.5,453.8 1365.5,510.0" fill="#009981"/>
<polygon points="1366.2,508.0 -448.1,441.9 -459.7,473.6 1364.2,513.3" fill="#009985"/>
<polygon points="1365.0,511.4 -455.4,461.7 -467.0,493.5 1363.0,516.6" fill="#00998a"/>
<polygon points="1363.8,514.7 -462.6,481.6 -474.2,513.3 1361.8,520.0" fill="#009990"/>
<polygon points="1362.6,518.0 -469.9,501.4 -481.4,533.2 1360.6,523.3" fill="#009995"/>
<polygon points="1361.3,521.3 -477.1,521.3 -488.7,553.0 1359.4,526.6" fill="#009899"/>
<polygon points="1360.1,524.6 -484.3,541.1 -495.9,572.9 1358.2,529.9" fill="#009299"/>
<polygon points="1358.9,527.9 -491.6,561.0 -503.2,592.7 1357.0,533.2" fill="#008d99"/>
<polygon points="1357.7,531.2 -498.8,580.8 -510.4,612.6 1355.8,536.5" fill="#008899"/>
<polygon points="1356.5,534.5 -506.1,600.7 -517.7,632.5 1354.6,539.8" fill="#008399"/>
<polygon points="1355.3,537.8 -513.3,620.5 -524.9,652.3 1353.4,543.1" fill="#007e99"/>
<polygon points="1354.1,541.1 -520.6,640.4 -532.2,672.2 1352.2,546.4" fill="#007a99"/>
<polygon points="1352.9,544.4 -527.8,660.2 -539.4,692.0 1351.0,549.7" fill="#007599"/>
<polygon points="1351.7,547.7 -535.1,680.1 -546.7,711.9 1349.8,553.0" fill="#007199"/>
<polygon points="1350.5,551.1 -542.3,700.0 -553.9,731.7 1348.5,556.4" fill="#006d99"/>
<polygon points="1349.3,554.4 -549.6,719.8 -561.2,751.6 1347.3,559.7" fill="#006999"/>
<polygon points="1348.1,557.7 -556.8,739.7 -568.4,771.4 1346.1,563.0" fill="#006599"/>
<polygon points="1346.9,561.0 -564.1,759.5 -575.7,791.3 1344.9,566.3" fill="#006199"/>
<polygon points="1345.6,564.3 -571.3,779.4 -582.9,811.1 1343.7,569.6" fill="#005e99"/>
<polygon points="1344.4,567.6 -578.6,799.2 -590.2,831.0 1342.5,572.9" fill="#005a99"/>
<polygon points="1343.2,570.9 -585.8,819.1 -597.4,850.8 1341.3,576.2" fill="#005799"/>
<polygon points="1342.0,574.2 -593.1,838.9 -604.7,870.7 1340.1,579.5" fill="#005399"/>
<polygon points="1340.8,577.5 -600.3,858.8 -611.9,890.5 1338.9,582.8" fill="#005099"/>
<polygon points="1339.6,580.8 -607.6,878.6 -619.2,910.4 1337.7,586.1" fill="#004d99"/>
<polygon points="1338.4,584.1 -614.8,898.5 -626.4,930.2 1336.5,589.4" fill="#004a99"/>
<polygon points="1337.2,587.5 -622.1,918.3 -633.7,950.1 1335.3,592.7" fill="#004799"/>
<polygon points="1336.0,590.8 -629.3,938.2 -640.9,969.9 1334.0,596.1" fill="#004499"/>
<polygon points="1334.8,594.1 -636.6,958.0 -648.2,989.8 1332.8,599.4" fill="#004199"/>
<polygon points="1333.6,597.4 -643.8,977.9 -655.4,1009.6 1331.6,602.7" fill="#003e99"/>
<polygon points="1332.4,600.7 -651.1,997.7 -662.7,1029.5 1330.4,606.0" fill="#003b99"/>
<polygon points="1331.1,604.0 -658.3,1017.6 -669.9,1049.4 1329.2,609.3" fill="#003999"/>
<polygon points="1329.9,607.3 -665.6,1037.4 -677.2,1069.2 1328.0,612.6" fill="#003699"/>
<polygon points="1328.7,610.6 -672.8,1057.3 -684.4,1089.1 1326.8,615.9" fill="#003399"/>
<polygon points="1327.5,613.9 -680.1,1077.1 -691.7,1108.9 1325.6,619.2" fill="#003199"/>
<polygon points="1326.3,617.2 -687.3,1097.0 -698.9,1128.8 1324.4,622.5" fill="#002f99"/>
<polygon points="1325.1,620.5 -694.6,1116.9 -706.2,1148.6 1323.2,625.8" fill="#002c99"/>
<polygon points="1323.9,623.9 -701.8,1136.7 -713.4,1168.5 1322.0,629.1" fill="#002a99"/>
<polygon points="1322.7,627.2 -709.1,1156.6 -720.7,1188.3 1320.8,632.5" fill="#002899"/>
<polygon points="1321.5,630.5 -716.3,1176.4 -727.9,1208.2 1319.5,635.8" fill="#002699"/>
<polygon points="1320.3,633.8 -723.6,1196.3 -735.2,1228.0 1318.3,639.1" fill="#002399"/>
<polygon points="1319.1,637.1 -730.8,1216.1 -742.4,1247.9 1317.1,642.4" fill="#002199"/>
<polygon points="1317.9,640.4 -738.1,1236.0 -749.7,1267.7 1315.9,645.7" fill="#001f99"/>
<polygon points="1316.6,643.7 -745.3,1255.8 -756.9,1287.6 1314.7,649.0" fill="#001d99"/>
<polygon points="1315.4,647.0 -752.6,1275.7 -764.2,1307.4 1313.5,652.3" fill="#001b99"/>
<polygon points="1314.2,650.3 -759.8,1295.5 -771.4,1327.3 1312.3,655.6" fill="#001999"/>
<polygon points="1313.0,653.6 -767.1,1315.4 -778.7,1347.1 1311.1,658.9" fill="#001799"/>
<polygon points="1311.8,656.9 -774.3,1335.2 -785.9,1367.0 1309.9,662.2" fill="#001699"/>
<polygon points="1310.6,660.2 -781.6,1355.1 -793.2,1386.8 1308.7,665.5" fill="#001499"/>
<polygon points="1309.4,663.6 -788.8,1374.9 -800.4,1406.7 1307.5,668.8" fill="#001299"/>
<polygon points="1308.2,666.9 -796.1,1394.8 -807.7,1426.5 1306.3,672.2" fill="#001099"/>
<polygon points="1307.0,670.2 -803.3,1414.6 -814.9,1446.4 1305.0,675.5" fill="#000f99"/>
<polygon points="1305.8,673.5 -810.6,1434.5 -822.2,1466.3 1303.8,678.8" fill="#000d99"/>
<polygon points="1304.6,676.8 -817.8,1454.3 -829.4,1486.1 1302.6,682.1" fill="#000b99"/>
<polygon points="1303.4,680.1 -825.1,1474.2 -836.7,1506.0 1301.4,685.4" fill="#000a99"/>
<polygon points="1302.1,683.4 -832.3,1494.0 -843.9,1525.8 1300.2,688.7" fill="#000899"/>
<polygon points="1300.9,686.7 -839.6,1513.9 -851.2,1545.7 1299.0,692.0" fill="#000799"/>
<polygon points="1299.7,690.0 -846.8,1533.8 -858.4,1565.5 1297.8,695.3" fill="#000599"/>
<polygon points="1298.5,693.3 -854.1,1553.6 -865.7,1585.4 1296.6,698.6" fill="#000499"/>
<polygon points="1297.3,696.6 -861.3,1573.5 -872.9,1605.2 1295.4,701.9" fill="#000299"/>
<polygon points="1296.1,700.0 -868.6,1593.3 -880.1,1625.1 1294.2,705.2" fill="#000199"/>
<polygon points="1292.5,704.3 616.2,2529.0 668.3,2507.2 1301.2,700.6" fill="#010099"/>
<polygon points="1298.8,701.6 654.1,2513.1 692.0,2497.3 1305.2,699.0" fill="#040099"/>
<polygon points="1302.8,700.0 677.8,2503.2 715.6,2487.3 1309.1,697.3" fill="#070099"/>
<polygon points="1306.7,698.3 701.4,2493.3 739.3,2477.4 1313.1,695.6" fill="#090099"/>
<polygon points="1310.7,696.6 725.1,2483.4 763.0,2467.5 1317.0,694.0" fill="#0c0099"/>
<polygon points="1314.6,695.0 748.8,2473.4 786.7,2457.5 1320.9,692.3" fill="#0f0099"/>
<polygon points="1318.6,693.3 772.5,2463.5 810.4,2447.6 1324.9,690.7" fill="#120099"/>
<polygon points="1322.5,691.7 796.2,2453.6 834.1,2437.7 1328.8,689.0" fill="#150099"/>
<polygon points="1326.5,690.0 819.8,2443.7 857.7,2427.8 1332.8,687.4" fill="#180099"/>
<polygon points="1330.4,688.4 843.5,2433.7 881.4,2417.8 1336.7,685.7" fill="#1b0099"/>
<polygon points="1334.4,686.7 867.2,2423.8 905.1,2407.9 1340.7,684.1" fill="#1e0099"/>
<polygon points="1338.3,685.1 890.9,2413.9 928.8,2398.0 1344.6,682.4" fill="#210099"/>
<polygon points="1342.3,683.4 914.6,2403.9 952.5,2388.1 1348.6,680.8" fill="#250099"/>
<polygon points="1346.2,681.8 938.2,2394.0 976.1,2378.1 1352.5,679.1" fill="#280099"/>
<polygon points="1350.2,680.1 961.9,2384.1 999.8,2368.2 1356.5,677.5" fill="#2b0099"/>
<polygon points="1354.1,678.4 985.6,2374.2 1023.5,2358.3 1360.4,675.8" fill="#2f0099"/>
<polygon points="1358.0,676.8 1009.3,2364.2 1047.2,2348.4 1364.4,674.1" fill="#320099"/>
<polygon points="1362.0,675.1 1033.0,2354.3 1070.9,2338.4 1368.3,672.5" fill="#360099"/>
<polygon points="1365.9,673.5 1056.6,2344.4 1094.5,2328.5 1372.3,670.8" fill="#3a0099"/>
<polygon points="1369.9,671.8 1080.3,2334.5 1118.2,2318.6 1376.2,669.2" fill="#3e0099"/>
<polygon points="1373.8,670.2 1104.0,2324.5 1141.9,2308.7 1380.1,667.5" fill="#410099"/>
<polygon points="1377.8,668.5 1127.7,2314.6 1165.6,2298.7 1384.1,665.9" fill="#450099"/>
<polygon points="1381.7,666.9 1151.4,2304.7 1189.3,2288.8 1388.0,664.2" fill="#490099"/>
<polygon points="1385.7,665.2 1175.0,2294.8 1212.9,2278.9 1392.0,662.6" fill="#4e0099"/>
<polygon points="1389.6,663.6 1198.7,2284.8 1236.6,2268.9 1395.9,660.9" fill="#520099"/>
<polygon points="1393.6,661.9 1222.4,2274.9 1260.3,2259.0 1399.9,659.3" fill="#560099"/>
<polygon points="1397.5,660.2 1246.1,2265.0 1284.0,2249.1 1403.8,657.6" fill="#5b0099"/>
<polygon points="1401.5,658.6 1269.8,2255.1 1307.7,2239.2 1407.8,655.9" fill="#5f0099"/>
<polygon points="1405.4,656.9 1293.5,2245.1 1331.3,2229.2 1411.7,654.3" fill="#640099"/>
<polygon points="1409.4,655.3 1317.1,2235.2 1355.0,2219.3 1415.7,652.6" fill="#690099"/>
<polygon points="1413.3,653.6 1340.8,2225.3 1378.7,2209.4 1419.6,651.0" fill="#6e0099"/>
<polygon points="1417.2,652.0 1364.5,2215.3 1402.4,2199.5 1423.6,649.3" fill="#730099"/>
<polygon points="1421.2,650.3 1388.2,2205.4 1426.1,2189.5 1427.5,647.7" fill="#780099"/>
<polygon points="1425.1,648.7 1411.9,2195.5 1449.7,2179.6 1431.5,646.0" fill="#7d0099"/>
<polygon points="1429.1,647.0 1435.5,2185.6 1473.4,2169.7 1435.4,644.4" fill="#820099"/>
<polygon points="1433.0,645.4 1459.2,2175.6 1497.1,2159.8 1439.4,642.7" fill="#880099"/>
<polygon points="1437.0,643.7 1482.9,2165.7 1520.8,2149.8 1443.3,641.1" fill="#8e0099"/>
<polygon points="1440.9,642.0 1506.6,2155.8 1544.5,2139.9 1447.2,639.4" fill="#940099"/>
<polygon points="1444.9,640.4 1530.3,2145.9 1568.1,2130.0 1451.2,637.7" fill="#990098"/>
<polygon points="1448.8,638.7 1553.9,2135.9 1591.8,2120.1 1455.1,636.1" fill="#990092"/>
<polygon points="1452.8,637.1 1577.6,2126.0 1615.5,2110.1 1459.1,634.4" fill="#99008d"/>
<polygon points="1456.7,635.4 1601.3,2116.1 1639.2,2100.2 1463.0,632.8" fill="#990087"/>
<polygon points="1460.7,633.8 1625.0,2106.2 1662.9,2090.3 1467.0,631.1" fill="#990082"/>
<polygon points="1464.6,632.1 1648.7,2096.2 1686.5,2080.4 1470.9,629.5" fill="#99007d"/>
<polygon points="1468.6,630.5 1672.3,2086.3 1710.2,2070.4 1474.9,627.8" fill="#990079"/>
<polygon points="1472.5,628.8 1696.0,2076.4 1733.9,2060.5 1478.8,626.2" fill="#990074"/>
<polygon points="1476.4,627.2 1719.7,2066.5 1757.6,2050.6 1482.8,624.5" fill="#990070"/>
<polygon points="1480.4,625.5 1743.4,2056.5 1781.3,2040.6 1486.7,622.9" fill="#99006c"/>
<polygon points="1484.3,623.9 1767.1,2046.6 1804.9,2030.7 1490.7,621.2" fill="#990068"/>
<polygon points="1488.3,622.2 1790.7,2036.7 1828.6,2020.8 1494.6,619.5" fill="#990064"/>
<polygon points="1492.2,620.5 1814.4,2026.8 1852.3,2010.9 1498.6,617.9" fill="#990061"/>
<polygon points="1496.2,618.9 1838.1,2016.8 1876.0,2000.9 1502.5,616.2" fill="#99005d"/>
<polygon points="1500.1,617.2 1861.8,2006.9 1899.7,1991.0 1506.4,614.6" fill="#99005a"/>
<polygon points="1504.1,615.6 1885.5,1997.0 1923.3,1981.1 1510.4,612.9" fill="#990057"/>
<polygon points="1508.0,613.9 1909.1,1987.0 1947.0,1971.2 1514.3,611.3" fill="#990053"/>
<polygon points="1512.0,612.3 1932.8,1977.1 1970.7,1961.2 1518.3,609.6" fill="#990050"/>
<polygon points="1515.9,610.6 1956.5,1967.2 1994.4,1951.3 1522.2,608.0" fill="#99004e"/>
<polygon points="1519.9,609.0 1980.2,1957.3 2018.1,1941.4 1526.2,606.3" fill="#99004b"/>
<polygon points="1523.8,607.3 2003.9,1947.3 2041.7,1931.5 1530.1,604.7" fill="#990048"/>
<polygon points="1527.8,605.7 2027.5,1937.4 2065.4,1921.5 1534.1,603.0" fill="#990046"/>
<polygon points="1531.7,604.0 2051.2,1927.5 2089.1,1911.6 1538.0,601.4" fill="#990043"/>
<polygon points="1535.7,602.3 2074.9,1917.6 2112.8,1901.7 1542.0,599.7" fill="#990041"/>
<polygon points="1539.6,600.7 2098.6,1907.6 2136.5,1891.8 1545.9,598.0" fill="#99003e"/>
<polygon points="1543.5,599.0 2122.3,1897.7 2160.2,1881.8 1549.9,596.4" fill="#99003c"/>
<polygon points="1547.5,597.4 2145.9,1887.8 2183.8,1871.9 1553.8,594.7" fill="#99003a"/>
<polygon points="1551.4,595.7 2169.6,1877.9 2207.5,1862.0 1557.8,593.1" fill="#990038"/>
<polygon points="1555.4,594.1 2193.3,1867.9 2231.2,1852.1 1561.7,591.4" fill="#990036"/>
<polygon points="1559.3,592.4 2217.0,1858.0 2254.9,1842.1 1565.6,589.8" fill="#990034"/>
<polygon points="1563.3,590.8 2240.7,1848.1 2278.6,1832.2 1569.6,588.1" fill="#990032"/>
<polygon points="1567.2,589.1 2264.3,1838.2 2302.2,1822.3 1573.5,586.5" fill="#990030"/>
<polygon points="1571.2,587.5 2288.0,1828.2 2325.9,1812.3 1577.5,584.8" fill="#99002e"/>
<polygon points="1575.1,585.8 2311.7,1818.3 2349.6,1802.4 1581.4,583.2" fill="#99002c"/>
<polygon points="1579.1,584.1 2335.4,1808.4 2373.3,1792.5 1585.4,581.5" fill="#99002a"/>
<polygon points="1583.0,582.5 2359.1,1798.4 2397.0,1782.6 1589.3,579.8" fill="#990029"/>
<polygon points="1587.0,580.8 2382.7,1788.5 2420.6,1772.6 1593.3,578.2" fill="#990027"/>
<polygon points="1590.9,579.2 2406.4,1778.6 2444.3,1762.7 1597.2,576.5" fill="#990025"/>
<polygon points="1594.9,577.5 2430.1,1768.7 2468.0,1752.8 1601.2,574.9" fill="#990024"/>
<polygon points="1598.8,575.9 2453.8,1758.7 2491.7,1742.9 1605.1,573.2" fill="#990022"/>
<polygon points="1602.7,574.2 2477.5,1748.8 2515.4,1732.9 1609.1,571.6" fill="#990021"/>
<polygon points="1606.7,572.6 2501.1,1738.9 2539.0,1723.0 1613.0,569.9" fill="#99001f"/>
<polygon points="1610.6,570.9 2524.8,1729.0 2562.7,1713.1 1617.0,568.3" fill="#99001e"/>
<polygon points="1614.6,569.3 2548.5,1719.0 2586.4,1703.2 1620.9,566.6" fill="#99001d"/>
<polygon points="1618.5,567.6 2572.2,1709.1 2610.1,1693.2 1624.8,565.0" fill="#99001b"/>
<polygon points="1622.5,565.9 2595.9,1699.2 2633.8,1683.3 1628.8,563.3" fill="#99001a"/>
<polygon points="1626.4,564.3 2619.6,1689.3 2657.4,1673.4 1632.7,561.6" fill="#990019"/>
<polygon points="1630.4,562.6 2643.2,1679.3 2681.1,1663.5 1636.7,560.0" fill="#990017"/>
<polygon points="1634.3,561.0 2666.9,1669.4 2704.8,1653.5 1640.6,558.3" fill="#990016"/>
<polygon points="1638.3,559.3 2690.6,1659.5 2728.5,1643.6 1644.6,556.7" fill="#990015"/>
<polygon points="1642.2,557.7 2714.3,1649.6 2752.2,1633.7 1648.5,555.0" fill="#990014"/>
<polygon points="1646.2,556.0 2738.0,1639.6 2775.8,1623.7 1652.5,553.4" fill="#990013"/>
<polygon points="1650.1,554.4 2761.6,1629.7 2799.5,1613.8 1656.4,551.7" fill="#990012"/>
<polygon points="1654.1,552.7 2785.3,1619.8 2823.2,1603.9 1660.4,550.1" fill="#990011"/>
<polygon points="1658.0,551.1 2809.0,1609.9 2846.9,1594.0 1664.3,548.4" fill="#990010"/>
<polygon points="1661.9,549.4 2832.7,1599.9 2870.6,1584.0 1668.3,546.8" fill="#99000e"/>
<polygon points="1665.9,547.7 2856.4,1590.0 2894.2,1574.1 1672.2,545.1" fill="#99000d"/>
<polygon points="1669.8,546.1 2880.0,1580.1 2917.9,1564.2 1676.2,543.4" fill="#99000c"/>
<polygon points="1673.8,544.4 2903.7,1570.1 2941.6,1554.3 1680.1,541.8" fill="#99000b"/>
<polygon points="1677.7,542.8 2927.4,1560.2 2965.3,1544.3 1684.0,540.1" fill="#99000b"/>
<polygon points="1681.7,541.1 2951.1,1550.3 2989.0,1534.4 1688.0,538.5" fill="#99000a"/>
<polygon points="1685.6,539.5 2974.8,1540.4 3012.6,1524.5 1691.9,536.8" fill="#990009"/>
<polygon points="1689.6,537.8 2998.4,1530.4 3036.3,1514.6 1695.9,535.2" fill="#990008"/>
<polygon points="1693.5,536.2 3022.1,1520.5 3060.0,1504.6 1699.8,533.5" fill="#990007"/>
<polygon points="1697.5,534.5 3045.8,1510.6 3083.7,1494.7 1703.8,531.9" fill="#990006"/>
<polygon points="1701.4,532.9 3069.5,1500.7 3107.4,1484.8 1707.7,530.2" fill="#990005"/>
<polygon points="1705.4,531.2 3093.2,1490.7 3131.0,1474.9 1711.7,528.6" fill="#990004"/>
<polygon points="1709.3,529.6 3116.8,1480.8 3154.7,1464.9 1715.6,526.9" fill="#990003"/>
<polygon points="1713.3,527.9 3140.5,1470.9 3178.4,1455.0 1719.6,525.3" fill="#990003"/>
<polygon points="1717.2,526.2 3164.2,1461.0 3202.1,1445.1 1723.5,523.6" fill="#990002"/>
<polygon points="1721.1,524.6 3187.9,1451.0 3225.8,1435.2 1727.5,521.9" fill="#990001"/>
<polygon points="1725.1,522.9 3211.6,1441.1 3249.4,1425.2 1731.4,520.3" fill="#990000"/>
</g>
<g clip-path="url(#tri)">
<path d="M1729.0,521.3 L1427.8,339.3 L1294.9,703.3 Z" fill="#fff"/>
<polygon points="1439.1,522.0 1756.3,522.0 1724.2,535.4" fill="url(#w1)"/>
<polygon points="1439.1,522.0 1734.1,531.2 1706.1,543.0" fill="url(#w2)"/>
<polygon points="1439.1,522.0 1714.9,539.3 1690.1,549.7" fill="url(#w3)"/>
<polygon points="1439.1,522.0 1697.9,546.4 1675.9,555.7" fill="url(#w4)"/>
<polygon points="1439.1,522.0 1682.8,552.7 1663.0,561.0" fill="url(#w5)"/>
<polygon points="1439.1,522.0 1669.3,558.4 1651.4,565.9" fill="url(#w6)"/>
<polygon points="1439.1,522.0 1657.1,563.5 1640.7,570.4" fill="url(#w7)"/>
<polygon points="1439.1,522.0 1645.9,568.2 1631.0,574.5" fill="url(#w8)"/>
<polygon points="1439.1,522.0 1635.8,572.5 1622.0,578.2" fill="url(#w9)"/>
<polygon points="1439.1,522.0 1626.4,576.4 1613.7,581.7" fill="url(#w10)"/>
<polygon points="1439.1,522.0 1617.8,580.0 1605.9,585.0" fill="url(#w11)"/>
<polygon points="1439.1,522.0 1609.7,583.4 1598.6,588.0" fill="url(#w12)"/>
<polygon points="1439.1,522.0 1602.2,586.5 1591.8,590.9" fill="url(#w13)"/>
<polygon points="1439.1,522.0 1595.1,589.5 1585.3,593.6" fill="url(#w14)"/>
<polygon points="1439.1,522.0 1588.5,592.3 1579.2,596.2" fill="url(#w15)"/>
<polygon points="1439.1,522.0 1582.2,594.9 1573.4,598.6" fill="url(#w16)"/>
<polygon points="1439.1,522.0 1576.3,597.4 1567.9,600.9" fill="url(#w17)"/>
<polygon points="1439.1,522.0 1570.6,599.8 1562.6,603.1" fill="url(#w18)"/>
<polygon points="1439.1,522.0 1565.2,602.0 1557.6,605.2" fill="url(#w19)"/>
<polygon points="1439.1,522.0 1560.1,604.2 1552.7,607.3" fill="url(#w20)"/>
<polygon points="1439.1,522.0 1555.1,606.3 1548.0,609.2" fill="url(#w21)"/>
<polygon points="1439.1,522.0 1550.3,608.3 1543.5,611.1" fill="url(#w22)"/>
<polygon points="1439.1,522.0 1545.7,610.2 1539.1,613.0" fill="url(#w23)"/>
<polygon points="1439.1,522.0 1541.3,612.1 1534.8,614.8" fill="url(#w24)"/>
<polygon points="1439.1,522.0 1537.0,613.9 1530.7,616.5" fill="url(#w25)"/>
<polygon points="1439.1,522.0 1532.7,615.6 1526.6,618.2" fill="url(#w26)"/>
<polygon points="1439.1,522.0 1528.7,617.4 1522.7,619.9" fill="url(#w27)"/>
<polygon points="1439.1,522.0 1524.6,619.0 1518.8,621.5" fill="url(#w28)"/>
<polygon points="1439.1,522.0 1520.7,620.7 1515.0,623.1" fill="url(#w29)"/>
<polygon points="1439.1,522.0 1516.9,622.3 1511.2,624.7" fill="url(#w30)"/>
<polygon points="1439.1,522.0 1513.1,623.9 1507.5,626.2" fill="url(#w31)"/>
<polygon points="1439.1,522.0 1509.4,625.4 1503.9,627.7" fill="url(#w32)"/>
<polygon points="1439.1,522.0 1505.7,627.0 1500.3,629.3" fill="url(#w33)"/>
<polygon points="1439.1,522.0 1502.1,628.5 1496.7,630.8" fill="url(#w34)"/>
<polygon points="1439.1,522.0 1498.5,630.0 1493.1,632.3" fill="url(#w35)"/>
<polygon points="1439.1,522.0 1494.9,631.5 1489.5,633.8" fill="url(#w36)"/>
<polygon points="1439.1,522.0 1491.3,633.0 1486.0,635.3" fill="url(#w37)"/>
<polygon points="1439.1,522.0 1487.8,634.5 1482.4,636.7" fill="url(#w38)"/>
<polygon points="1439.1,522.0 1484.2,636.0 1478.9,638.2" fill="url(#w39)"/>
<polygon points="1439.1,522.0 1480.6,637.5 1475.3,639.7" fill="url(#w40)"/>
<polygon points="1439.1,522.0 1477.1,639.0 1471.7,641.2" fill="url(#w41)"/>
<polygon points="1439.1,522.0 1473.5,640.5 1468.1,642.8" fill="url(#w42)"/>
<polygon points="1439.1,522.0 1469.9,642.0 1464.4,644.3" fill="url(#w43)"/>
<polygon points="1439.1,522.0 1466.2,643.5 1460.7,645.9" fill="url(#w44)"/>
<polygon points="1439.1,522.0 1462.5,645.1 1456.9,647.4" fill="url(#w45)"/>
<polygon points="1439.1,522.0 1458.8,646.6 1453.1,649.0" fill="url(#w46)"/>
<polygon points="1439.1,522.0 1455.0,648.2 1449.2,650.7" fill="url(#w47)"/>
<polygon points="1439.1,522.0 1451.1,649.9 1445.2,652.3" fill="url(#w48)"/>
<polygon points="1439.1,522.0 1447.2,651.5 1441.1,654.1" fill="url(#w49)"/>
<polygon points="1439.1,522.0 1443.2,653.2 1436.9,655.8" fill="url(#w50)"/>
<polygon points="1439.1,522.0 1439.1,654.9 1432.7,657.6" fill="url(#w51)"/>
<polygon points="1439.1,522.0 1434.8,656.7 1428.2,659.5" fill="url(#w52)"/>
<polygon points="1439.1,522.0 1430.5,658.5 1423.7,661.4" fill="url(#w53)"/>
<polygon points="1439.1,522.0 1426.0,660.4 1418.9,663.4" fill="url(#w54)"/>
<polygon points="1439.1,522.0 1421.3,662.4 1414.0,665.4" fill="url(#w55)"/>
<polygon points="1439.1,522.0 1416.5,664.4 1408.9,667.6" fill="url(#w56)"/>
<polygon points="1439.1,522.0 1411.5,666.5 1403.6,669.8" fill="url(#w57)"/>
<polygon points="1439.1,522.0 1406.3,668.7 1398.0,672.1" fill="url(#w58)"/>
<polygon points="1439.1,522.0 1400.8,671.0 1392.1,674.6" fill="url(#w59)"/>
<polygon points="1439.1,522.0 1395.1,673.4 1385.9,677.2" fill="url(#w60)"/>
<polygon points="1439.1,522.0 1389.0,675.9 1379.4,679.9" fill="url(#w61)"/>
<polygon points="1439.1,522.0 1382.7,678.6 1372.4,682.9" fill="url(#w62)"/>
<polygon points="1439.1,522.0 1375.9,681.4 1365.0,686.0" fill="url(#w63)"/>
<polygon points="1439.1,522.0 1368.8,684.4 1357.1,689.3" fill="url(#w64)"/>
<polygon points="1439.1,522.0 1361.1,687.6 1348.6,692.9" fill="url(#w65)"/>
<polygon points="1439.1,522.0 1352.9,691.0 1339.4,696.7" fill="url(#w66)"/>
<polygon points="1439.1,522.0 1344.1,694.7 1329.4,700.9" fill="url(#w67)"/>
<polygon points="1439.1,522.0 1334.5,698.8 1318.5,705.4" fill="url(#w68)"/>
<polygon points="1439.1,522.0 1324.1,703.1 1306.6,710.5" fill="url(#w69)"/>
<polygon points="1439.1,522.0 1312.7,707.9 1293.4,716.0" fill="url(#w70)"/>
<polygon points="1439.1,522.0 1300.1,713.2 1281.5,718.6" fill="url(#w71)"/>
<polygon points="1439.1,522.0 1286.2,719.0 1282.1,716.9" fill="url(#w72)"/>
<polygon points="1439.1,522.0 1280.5,721.4 1287.9,701.1" fill="url(#w73)"/>
<polygon points="1439.1,522.0 1285.6,707.5 1295.8,679.3" fill="url(#w74)"/>
<polygon points="1439.1,522.0 1292.7,688.0 1301.5,663.9" fill="url(#w75)"/>
<polygon points="1439.1,522.0 1298.8,671.4 1306.4,650.5" fill="url(#w76)"/>
<polygon points="1439.1,522.0 1304.0,657.0 1310.6,638.8" fill="url(#w77)"/>
<polygon points="1439.1,522.0 1308.6,644.5 1314.4,628.4" fill="url(#w78)"/>
<polygon points="1439.1,522.0 1312.6,633.4 1317.9,619.1" fill="url(#w79)"/>
<polygon points="1439.1,522.0 1316.2,623.6 1320.9,610.6" fill="url(#w80)"/>
<polygon points="1439.1,522.0 1319.4,614.7 1323.7,603.0" fill="url(#w81)"/>
<polygon points="1439.1,522.0 1322.3,606.7 1326.3,596.0" fill="url(#w82)"/>
<polygon points="1439.1,522.0 1325.0,599.5 1328.6,589.6" fill="url(#w83)"/>
<polygon points="1439.1,522.0 1327.4,592.8 1330.8,583.7" fill="url(#w84)"/>
<polygon points="1439.1,522.0 1329.7,586.6 1332.8,578.2" fill="url(#w85)"/>
<polygon points="1439.1,522.0 1331.8,580.9 1334.6,573.1" fill="url(#w86)"/>
<polygon points="1439.1,522.0 1333.7,575.6 1336.4,568.3" fill="url(#w87)"/>
<polygon points="1439.1,522.0 1335.5,570.7 1338.0,563.8" fill="url(#w88)"/>
<polygon points="1439.1,522.0 1337.2,566.0 1339.6,559.5" fill="url(#w89)"/>
<polygon points="1439.1,522.0 1338.8,561.6 1341.1,555.5" fill="url(#w90)"/>
<polygon points="1439.1,522.0 1340.3,557.5 1342.5,551.7" fill="url(#w91)"/>
<polygon points="1439.1,522.0 1341.8,553.6 1343.8,548.0" fill="url(#w92)"/>
<polygon points="1439.1,522.0 1343.1,549.8 1345.1,544.5" fill="url(#w93)"/>
<polygon points="1439.1,522.0 1344.4,546.2 1346.3,541.2" fill="url(#w94)"/>
<polygon points="1439.1,522.0 1345.7,542.8 1347.5,537.9" fill="url(#w95)"/>
<polygon points="1439.1,522.0 1346.9,539.5 1348.6,534.8" fill="url(#w96)"/>
<polygon points="1439.1,522.0 1348.0,536.4 1349.7,531.8" fill="url(#w97)"/>
<polygon points="1439.1,522.0 1349.2,533.3 1350.8,528.9" fill="url(#w98)"/>
<polygon points="1439.1,522.0 1350.2,530.3 1351.8,526.1" fill="url(#w99)"/>
<polygon points="1439.1,522.0 1351.3,527.5 1352.8,523.3" fill="url(#w100)"/>
<polygon points="1439.1,522.0 1352.3,524.7 1353.8,520.6" fill="url(#w101)"/>
<polygon points="1439.1,522.0 1353.3,522.0 1354.8,518.0" fill="url(#w102)"/>
<polygon points="1439.1,522.0 1354.3,519.3 1355.7,515.4" fill="url(#w103)"/>
<polygon points="1439.1,522.0 1355.2,516.7 1356.6,512.9" fill="url(#w104)"/>
<polygon points="1439.1,522.0 1356.2,514.1 1357.5,510.4" fill="url(#w105)"/>
<polygon points="1439.1,522.0 1357.1,511.6 1358.4,507.9" fill="url(#w106)"/>
<polygon points="1439.1,522.0 1358.0,509.1 1359.3,505.4" fill="url(#w107)"/>
<polygon points="1439.1,522.0 1358.9,506.7 1360.2,503.0" fill="url(#w108)"/>
<polygon points="1439.1,522.0 1359.8,504.2 1361.1,500.6" fill="url(#w109)"/>
<polygon points="1439.1,522.0 1360.7,501.8 1362.0,498.2" fill="url(#w110)"/>
<polygon points="1439.1,522.0 1361.5,499.4 1362.8,495.9" fill="url(#w111)"/>
<polygon points="1439.1,522.0 1362.4,497.0 1363.7,493.5" fill="url(#w112)"/>
<polygon points="1439.1,522.0 1363.3,494.7 1364.6,491.1" fill="url(#w113)"/>
<polygon points="1439.1,522.0 1364.1,492.3 1365.4,488.7" fill="url(#w114)"/>
<polygon points="1439.1,522.0 1365.0,489.9 1366.3,486.3" fill="url(#w115)"/>
<polygon points="1439.1,522.0 1365.9,487.5 1367.2,483.9" fill="url(#w116)"/>
<polygon points="1439.1,522.0 1366.8,485.1 1368.1,481.5" fill="url(#w117)"/>
<polygon points="1439.1,522.0 1367.6,482.7 1369.0,479.0" fill="url(#w118)"/>
<polygon points="1439.1,522.0 1368.5,480.3 1369.9,476.5" fill="url(#w119)"/>
<polygon points="1439.1,522.0 1369.4,477.8 1370.8,474.0" fill="url(#w120)"/>
<polygon points="1439.1,522.0 1370.4,475.3 1371.8,471.4" fill="url(#w121)"/>
<polygon points="1439.1,522.0 1371.3,472.7 1372.7,468.8" fill="url(#w122)"/>
<polygon points="1439.1,522.0 1372.2,470.1 1373.7,466.1" fill="url(#w123)"/>
<polygon points="1439.1,522.0 1373.2,467.5 1374.7,463.4" fill="url(#w124)"/>
<polygon points="1439.1,522.0 1374.2,464.8 1375.7,460.6" fill="url(#w125)"/>
<polygon points="1439.1,522.0 1375.2,462.0 1376.8,457.7" fill="url(#w126)"/>
<polygon points="1439.1,522.0 1376.2,459.1 1377.9,454.7" fill="url(#w127)"/>
<polygon points="1439.1,522.0 1377.3,456.2 1379.0,451.6" fill="url(#w128)"/>
<polygon points="1439.1,522.0 1378.4,453.2 1380.2,448.4" fill="url(#w129)"/>
<polygon points="1439.1,522.0 1379.6,450.0 1381.4,445.1" fill="url(#w130)"/>
<polygon points="1439.1,522.0 1380.8,446.8 1382.6,441.7" fill="url(#w131)"/>
<polygon points="1439.1,522.0 1382.0,443.4 1383.9,438.1" fill="url(#w132)"/>
<polygon points="1439.1,522.0 1383.3,439.9 1385.3,434.3" fill="url(#w133)"/>
<polygon points="1439.1,522.0 1384.6,436.2 1386.8,430.3" fill="url(#w134)"/>
<polygon points="1439.1,522.0 1386.0,432.3 1388.3,426.1" fill="url(#w135)"/>
<polygon points="1439.1,522.0 1387.5,428.2 1389.9,421.7" fill="url(#w136)"/>
<polygon points="1439.1,522.0 1389.1,423.9 1391.6,417.0" fill="url(#w137)"/>
<polygon points="1439.1,522.0 1390.8,419.4 1393.5,411.9" fill="url(#w138)"/>
<polygon points="1439.1,522.0 1392.5,414.5 1395.4,406.6" fill="url(#w139)"/>
<polygon points="1439.1,522.0 1394.4,409.3 1397.6,400.8" fill="url(#w140)"/>
<polygon points="1439.1,522.0 1396.5,403.7 1399.8,394.5" fill="url(#w141)"/>
<polygon points="1439.1,522.0 1398.7,397.7 1402.3,387.7" fill="url(#w142)"/>
<polygon points="1439.1,522.0 1401.1,391.2 1405.0,380.3" fill="url(#w143)"/>
<polygon points="1439.1,522.0 1403.7,384.1 1408.0,372.1" fill="url(#w144)"/>
<polygon points="1439.1,522.0 1406.5,376.3 1411.3,363.1" fill="url(#w145)"/>
<polygon points="1439.1,522.0 1409.6,367.7 1415.0,353.0" fill="url(#w146)"/>
<polygon points="1439.1,522.0 1413.1,358.2 1419.1,341.7" fill="url(#w147)"/>
<polygon points="1439.1,522.0 1417.0,347.5 1423.8,328.8" fill="url(#w148)"/>
<polygon points="1439.1,522.0 1421.4,335.4 1429.7,322.8" fill="url(#w149)"/>
<polygon points="1439.1,522.0 1426.5,321.6 1426.8,321.1" fill="url(#w150)"/>
<polygon points="1439.1,522.0 1426.7,321.0 1435.9,326.6" fill="url(#w151)"/>
<polygon points="1439.1,522.0 1432.9,324.8 1442.1,330.3" fill="url(#w152)"/>
<polygon points="1439.1,522.0 1439.1,328.5 1447.9,333.9" fill="url(#w153)"/>
<polygon points="1439.1,522.0 1445.0,332.1 1453.6,337.3" fill="url(#w154)"/>
<polygon points="1439.1,522.0 1450.8,335.6 1459.1,340.6" fill="url(#w155)"/>
<polygon points="1439.1,522.0 1456.4,339.0 1464.4,343.8" fill="url(#w156)"/>
<polygon points="1439.1,522.0 1461.8,342.2 1469.6,347.0" fill="url(#w157)"/>
<polygon points="1439.1,522.0 1467.0,345.4 1474.7,350.0" fill="url(#w158)"/>
<polygon points="1439.1,522.0 1472.1,348.5 1479.6,353.0" fill="url(#w159)"/>
<polygon points="1439.1,522.0 1477.1,351.5 1484.5,355.9" fill="url(#w160)"/>
<polygon points="1439.1,522.0 1482.1,354.5 1489.2,358.8" fill="url(#w161)"/>
<polygon points="1439.1,522.0 1486.9,357.4 1493.9,361.7" fill="url(#w162)"/>
<polygon points="1439.1,522.0 1491.6,360.3 1498.6,364.5" fill="url(#w163)"/>
<polygon points="1439.1,522.0 1496.3,363.1 1503.1,367.2" fill="url(#w164)"/>
<polygon points="1439.1,522.0 1500.9,365.8 1507.7,370.0" fill="url(#w165)"/>
<polygon points="1439.1,522.0 1505.4,368.6 1512.2,372.7" fill="url(#w166)"/>
<polygon points="1439.1,522.0 1509.9,371.3 1516.7,375.4" fill="url(#w167)"/>
<polygon points="1439.1,522.0 1514.4,374.0 1521.1,378.1" fill="url(#w168)"/>
<polygon points="1439.1,522.0 1518.9,376.7 1525.6,380.8" fill="url(#w169)"/>
<polygon points="1439.1,522.0 1523.3,379.4 1530.0,383.5" fill="url(#w170)"/>
<polygon points="1439.1,522.0 1527.8,382.1 1534.5,386.2" fill="url(#w171)"/>
<polygon points="1439.1,522.0 1532.3,384.8 1539.0,388.9" fill="url(#w172)"/>
<polygon points="1439.1,522.0 1536.7,387.5 1543.5,391.6" fill="url(#w173)"/>
<polygon points="1439.1,522.0 1541.2,390.2 1548.0,394.3" fill="url(#w174)"/>
<polygon points="1439.1,522.0 1545.8,393.0 1552.6,397.1" fill="url(#w175)"/>
<polygon points="1439.1,522.0 1550.3,395.7 1557.3,399.9" fill="url(#w176)"/>
<polygon points="1439.1,522.0 1555.0,398.5 1562.0,402.8" fill="url(#w177)"/>
<polygon points="1439.1,522.0 1559.6,401.4 1566.8,405.7" fill="url(#w178)"/>
<polygon points="1439.1,522.0 1564.4,404.2 1571.7,408.7" fill="url(#w179)"/>
<polygon points="1439.1,522.0 1569.3,407.2 1576.7,411.7" fill="url(#w180)"/>
<polygon points="1439.1,522.0 1574.2,410.2 1581.8,414.8" fill="url(#w181)"/>
<polygon points="1439.1,522.0 1579.2,413.2 1587.1,417.9" fill="url(#w182)"/>
<polygon points="1439.1,522.0 1584.4,416.3 1592.5,421.2" fill="url(#w183)"/>
<polygon points="1439.1,522.0 1589.7,419.5 1598.0,424.5" fill="url(#w184)"/>
<polygon points="1439.1,522.0 1595.2,422.9 1603.8,428.0" fill="url(#w185)"/>
<polygon points="1439.1,522.0 1600.9,426.3 1609.7,431.6" fill="url(#w186)"/>
<polygon points="1439.1,522.0 1606.7,429.8 1615.9,435.3" fill="url(#w187)"/>
<polygon points="1439.1,522.0 1612.8,433.4 1622.3,439.2" fill="url(#w188)"/>
<polygon points="1439.1,522.0 1619.1,437.3 1629.0,443.3" fill="url(#w189)"/>
<polygon points="1439.1,522.0 1625.6,441.2 1636.0,447.5" fill="url(#w190)"/>
<polygon points="1439.1,522.0 1632.5,445.4 1643.4,452.0" fill="url(#w191)"/>
<polygon points="1439.1,522.0 1639.7,449.7 1651.2,456.7" fill="url(#w192)"/>
<polygon points="1439.1,522.0 1647.3,454.3 1659.5,461.7" fill="url(#w193)"/>
<polygon points="1439.1,522.0 1655.3,459.1 1668.2,466.9" fill="url(#w194)"/>
<polygon points="1439.1,522.0 1663.8,464.3 1677.5,472.6" fill="url(#w195)"/>
<polygon points="1439.1,522.0 1672.8,469.7 1687.5,478.6" fill="url(#w196)"/>
<polygon points="1439.1,522.0 1682.4,475.5 1698.2,485.1" fill="url(#w197)"/>
<polygon points="1439.1,522.0 1692.8,481.8 1709.8,492.1" fill="url(#w198)"/>
<polygon points="1439.1,522.0 1703.9,488.5 1722.4,499.7" fill="url(#w199)"/>
<polygon points="1439.1,522.0 1715.9,495.8 1736.1,507.9" fill="url(#w200)"/>
<polygon points="1439.1,522.0 1729.1,503.7 1751.2,517.1" fill="url(#w201)"/>
<polygon points="1439.1,522.0 1743.4,512.4 1747.3,525.7" fill="url(#w202)"/>
<polygon points="1439.1,522.0 1758.0,521.2 1755.4,522.3" fill="url(#w203)"/>
</g>
<line x1="1161.0" y1="178.3" x2="1908.0" y2="178.3" stroke="#8e8e8e" stroke-width="2.0"/>
<line x1="1906.8" y1="178.3" x2="1906.8" y2="743.7" stroke="#8e8e8e" stroke-width="1.6"/>
<line x1="1162.0" y1="178.3" x2="1162.0" y2="744.7" stroke="#989898" stroke-width="1.9"/>
<line x1="1161.0" y1="743.7" x2="1908.0" y2="743.7" stroke="#989898" stroke-width="2.0"/>
<line x1="1161.9" y1="743.7" x2="1161.9" y2="751.3" stroke="#cfcfcf" stroke-width="1.8"/>
<text x="1161.4" y="769.3" font-size="16.5" fill="#dadada" text-anchor="middle">0</text>
<line x1="1155.0" y1="744.3" x2="1162.0" y2="744.3" stroke="#cfcfcf" stroke-width="1.6"/>
<text x="1154.3" y="750.9" font-size="16.5" fill="#dadada" text-anchor="end">0</text>
<line x1="1250.5" y1="743.7" x2="1250.5" y2="751.3" stroke="#cfcfcf" stroke-width="1.8"/>
<text x="1250.0" y="769.3" font-size="16.5" fill="#dadada" text-anchor="middle" textLength="23.2" lengthAdjust="spacingAndGlyphs">0,1</text>
<line x1="1155.0" y1="677.8" x2="1162.0" y2="677.8" stroke="#cfcfcf" stroke-width="1.6"/>
<text x="1154.3" y="684.4" font-size="16.5" fill="#dadada" text-anchor="end" textLength="23.2" lengthAdjust="spacingAndGlyphs">0,1</text>
<line x1="1339.1" y1="743.7" x2="1339.1" y2="751.3" stroke="#cfcfcf" stroke-width="1.8"/>
<text x="1338.6" y="769.3" font-size="16.5" fill="#dadada" text-anchor="middle" textLength="23.2" lengthAdjust="spacingAndGlyphs">0,2</text>
<line x1="1155.0" y1="610.3" x2="1162.0" y2="610.3" stroke="#cfcfcf" stroke-width="1.6"/>
<text x="1154.3" y="616.9" font-size="16.5" fill="#dadada" text-anchor="end" textLength="23.2" lengthAdjust="spacingAndGlyphs">0,2</text>
<line x1="1427.7" y1="743.7" x2="1427.7" y2="751.3" stroke="#cfcfcf" stroke-width="1.8"/>
<text x="1427.2" y="769.3" font-size="16.5" fill="#dadada" text-anchor="middle" textLength="23.2" lengthAdjust="spacingAndGlyphs">0,3</text>
<line x1="1155.0" y1="542.9" x2="1162.0" y2="542.9" stroke="#cfcfcf" stroke-width="1.6"/>
<text x="1154.3" y="549.5" font-size="16.5" fill="#dadada" text-anchor="end" textLength="23.2" lengthAdjust="spacingAndGlyphs">0,3</text>
<line x1="1516.3" y1="743.7" x2="1516.3" y2="751.3" stroke="#cfcfcf" stroke-width="1.8"/>
<text x="1515.8" y="769.3" font-size="16.5" fill="#dadada" text-anchor="middle" textLength="23.2" lengthAdjust="spacingAndGlyphs">0,4</text>
<line x1="1155.0" y1="475.5" x2="1162.0" y2="475.5" stroke="#cfcfcf" stroke-width="1.6"/>
<text x="1154.3" y="482.1" font-size="16.5" fill="#dadada" text-anchor="end" textLength="23.2" lengthAdjust="spacingAndGlyphs">0,4</text>
<line x1="1604.9" y1="743.7" x2="1604.9" y2="751.3" stroke="#cfcfcf" stroke-width="1.8"/>
<text x="1604.4" y="769.3" font-size="16.5" fill="#dadada" text-anchor="middle" textLength="23.2" lengthAdjust="spacingAndGlyphs">0,5</text>
<line x1="1155.0" y1="408.1" x2="1162.0" y2="408.1" stroke="#cfcfcf" stroke-width="1.6"/>
<text x="1154.3" y="414.7" font-size="16.5" fill="#dadada" text-anchor="end" textLength="23.2" lengthAdjust="spacingAndGlyphs">0,5</text>
<line x1="1693.5" y1="743.7" x2="1693.5" y2="751.3" stroke="#cfcfcf" stroke-width="1.8"/>
<text x="1693.0" y="769.3" font-size="16.5" fill="#dadada" text-anchor="middle" textLength="23.2" lengthAdjust="spacingAndGlyphs">0,6</text>
<line x1="1155.0" y1="340.6" x2="1162.0" y2="340.6" stroke="#cfcfcf" stroke-width="1.6"/>
<text x="1154.3" y="347.2" font-size="16.5" fill="#dadada" text-anchor="end" textLength="23.2" lengthAdjust="spacingAndGlyphs">0,6</text>
<line x1="1782.1" y1="743.7" x2="1782.1" y2="751.3" stroke="#cfcfcf" stroke-width="1.8"/>
<text x="1781.6" y="769.3" font-size="16.5" fill="#dadada" text-anchor="middle" textLength="23.2" lengthAdjust="spacingAndGlyphs">0,7</text>
<line x1="1155.0" y1="273.2" x2="1162.0" y2="273.2" stroke="#cfcfcf" stroke-width="1.6"/>
<text x="1154.3" y="279.8" font-size="16.5" fill="#dadada" text-anchor="end" textLength="23.2" lengthAdjust="spacingAndGlyphs">0,7</text>
<line x1="1870.7" y1="743.7" x2="1870.7" y2="751.3" stroke="#cfcfcf" stroke-width="1.8"/>
<text x="1870.2" y="769.3" font-size="16.5" fill="#dadada" text-anchor="middle" textLength="23.2" lengthAdjust="spacingAndGlyphs">0,8</text>
<line x1="1155.0" y1="205.8" x2="1162.0" y2="205.8" stroke="#cfcfcf" stroke-width="1.6"/>
<text x="1154.3" y="212.4" font-size="16.5" fill="#dadada" text-anchor="end" textLength="23.2" lengthAdjust="spacingAndGlyphs">0,8</text>
<rect x="1418.7" y="331.6" width="15.4" height="15.4" fill="none" stroke="#fff" stroke-width="1.9" />
<rect x="1421.9" y="370.4" width="15.4" height="15.4" fill="none" stroke="#fff" stroke-width="1.9" />
<rect x="1423.5" y="406.6" width="15.4" height="15.4" fill="none" stroke="#fff" stroke-width="1.9" />
<rect x="1426.8" y="440.8" width="15.4" height="15.4" fill="none" stroke="#fff" stroke-width="1.9" />
<rect x="1428.4" y="476.6" width="15.4" height="15.4" fill="none" stroke="#fff" stroke-width="1.9" />
<rect x="1525.0" y="395.5" width="15.4" height="15.4" fill="none" stroke="#fff" stroke-width="1.9" />
<rect x="1505.0" y="420.8" width="15.4" height="15.4" fill="none" stroke="#fff" stroke-width="1.9" />
<rect x="1487.9" y="442.4" width="15.4" height="15.4" fill="none" stroke="#fff" stroke-width="1.9" />
<rect x="1468.8" y="464.6" width="15.4" height="15.4" fill="none" stroke="#fff" stroke-width="1.9" />
<rect x="1450.1" y="488.5" width="15.4" height="15.4" fill="none" stroke="#fff" stroke-width="1.9" />
<rect x="1352.7" y="514.4" width="15.4" height="15.4" fill="none" stroke="#fff" stroke-width="1.9" />
<rect x="1368.5" y="514.4" width="15.4" height="15.4" fill="none" stroke="#fff" stroke-width="1.9" />
<rect x="1384.5" y="514.4" width="15.4" height="15.4" fill="none" stroke="#fff" stroke-width="1.9" />
<rect x="1400.0" y="514.4" width="15.4" height="15.4" fill="none" stroke="#fff" stroke-width="1.9" />
<rect x="1414.6" y="514.4" width="15.4" height="15.4" fill="none" stroke="#fff" stroke-width="1.9" />
<rect x="1432.9" y="538.0" width="15.4" height="15.4" fill="none" stroke="#fff" stroke-width="1.9" />
<rect x="1434.5" y="563.3" width="15.4" height="15.4" fill="none" stroke="#fff" stroke-width="1.9" />
<rect x="1434.5" y="583.6" width="15.4" height="15.4" fill="none" stroke="#fff" stroke-width="1.9" />
<rect x="1435.8" y="606.9" width="15.4" height="15.4" fill="none" stroke="#fff" stroke-width="1.9" />
<rect x="1437.5" y="631.9" width="15.4" height="15.4" fill="none" stroke="#fff" stroke-width="1.9" />
<rect x="1401.6" y="550.4" width="15.4" height="15.4" fill="none" stroke="#fff" stroke-width="1.9" />
<rect x="1373.4" y="586.6" width="15.4" height="15.4" fill="none" stroke="#fff" stroke-width="1.9" />
<rect x="1345.4" y="621.1" width="15.4" height="15.4" fill="none" stroke="#fff" stroke-width="1.9" />
<rect x="1316.9" y="655.3" width="15.4" height="15.4" fill="none" stroke="#fff" stroke-width="1.9" />
<rect x="1285.5" y="694.6" width="15.4" height="15.4" fill="none" stroke="#fff" stroke-width="1.9" />
<rect x="1487.6" y="512.9" width="15.4" height="15.4" fill="none" stroke="#fff" stroke-width="1.9" />
<rect x="1547.2" y="512.9" width="15.4" height="15.4" fill="none" stroke="#fff" stroke-width="1.9" />
<rect x="1600.5" y="512.9" width="15.4" height="15.4" fill="none" stroke="#fff" stroke-width="1.9" />
<rect x="1656.4" y="512.9" width="15.4" height="15.4" fill="none" stroke="#fff" stroke-width="1.9" />
<rect x="1721.1" y="512.9" width="15.4" height="15.4" fill="none" stroke="#fff" stroke-width="1.9" />
<rect x="1431.5" y="514.6" width="15.0" height="15.0" fill="none" stroke="#111" stroke-width="2.3" />
<circle cx="1431.4" cy="332.8" r="4.5" fill="#30a030" fill-opacity="0.30" stroke="#141414" stroke-width="1.8"/>
<circle cx="1434.5" cy="370.6" r="4.5" fill="#90b090" fill-opacity="0.75" stroke="#141414" stroke-width="1.8"/>
<circle cx="1434.5" cy="410.7" r="4.5" fill="#90b090" fill-opacity="0.75" stroke="#141414" stroke-width="1.8"/>
<circle cx="1435.6" cy="446.9" r="4.5" fill="#90b090" fill-opacity="0.75" stroke="#141414" stroke-width="1.8"/>
<circle cx="1437.3" cy="482.7" r="4.5" fill="#a0b0a0" fill-opacity="0.75" stroke="#141414" stroke-width="1.8"/>
<circle cx="1540.7" cy="401.7" r="4.5" fill="#a0a000" fill-opacity="0.30" stroke="#141414" stroke-width="1.8"/>
<circle cx="1520.2" cy="425.2" r="4.5" fill="#b0b070" fill-opacity="0.80" stroke="#141414" stroke-width="1.8"/>
<circle cx="1500.0" cy="448.5" r="4.5" fill="#b0b080" fill-opacity="0.80" stroke="#141414" stroke-width="1.8"/>
<circle cx="1479.8" cy="472.1" r="4.5" fill="#b4b48c" fill-opacity="0.80" stroke="#141414" stroke-width="1.8"/>
<circle cx="1460.6" cy="495.3" r="4.5" fill="#b8b8a0" fill-opacity="0.80" stroke="#141414" stroke-width="1.8"/>
<circle cx="1359.3" cy="517.7" r="4.5" fill="#20b0b0" fill-opacity="0.50" stroke="#141414" stroke-width="1.8"/>
<circle cx="1375.1" cy="519.0" r="4.5" fill="#70b0b0" fill-opacity="0.80" stroke="#141414" stroke-width="1.8"/>
<circle cx="1392.2" cy="517.7" r="4.5" fill="#90b4b0" fill-opacity="0.80" stroke="#141414" stroke-width="1.8"/>
<circle cx="1408.0" cy="517.7" r="4.5" fill="#a0b8b4" fill-opacity="0.80" stroke="#141414" stroke-width="1.8"/>
<circle cx="1423.2" cy="517.7" r="4.5" fill="#a8b8b6" fill-opacity="0.80" stroke="#141414" stroke-width="1.8"/>
<circle cx="1440.6" cy="542.5" r="4.5" fill="#b8a8b8" fill-opacity="0.80" stroke="#141414" stroke-width="1.8"/>
<circle cx="1440.6" cy="567.4" r="4.5" fill="#b890b8" fill-opacity="0.80" stroke="#141414" stroke-width="1.8"/>
<circle cx="1442.2" cy="588.2" r="4.5" fill="#b878b8" fill-opacity="0.80" stroke="#141414" stroke-width="1.8"/>
<circle cx="1443.9" cy="614.3" r="4.5" fill="#b850b8" fill-opacity="0.80" stroke="#141414" stroke-width="1.8"/>
<circle cx="1443.9" cy="638.0" r="4.5" fill="#b020b0" fill-opacity="0.60" stroke="#141414" stroke-width="1.8"/>
<circle cx="1409.6" cy="555.2" r="4.5" fill="#a0a0c0" fill-opacity="0.80" stroke="#141414" stroke-width="1.8"/>
<circle cx="1379.5" cy="591.0" r="4.5" fill="#8888b8" fill-opacity="0.80" stroke="#141414" stroke-width="1.8"/>
<circle cx="1348.5" cy="628.5" r="4.5" fill="#7070b8" fill-opacity="0.85" stroke="#141414" stroke-width="1.8"/>
<circle cx="1315.6" cy="666.0" r="4.5" fill="#5858c0" fill-opacity="0.90" stroke="#141414" stroke-width="1.8"/>
<circle cx="1286.9" cy="700.3" r="4.5" fill="#1010c0" fill-opacity="0.70" stroke="#141414" stroke-width="1.8"/>
<circle cx="1494.9" cy="520.6" r="4.5" fill="#c09090" fill-opacity="0.80" stroke="#141414" stroke-width="1.8"/>
<circle cx="1559.6" cy="518.9" r="4.5" fill="#c07070" fill-opacity="0.80" stroke="#141414" stroke-width="1.8"/>
<circle cx="1619.1" cy="518.9" r="4.5" fill="#c05858" fill-opacity="0.80" stroke="#141414" stroke-width="1.8"/>
<circle cx="1681.5" cy="520.6" r="4.5" fill="#c04848" fill-opacity="0.80" stroke="#141414" stroke-width="1.8"/>
<circle cx="1737.8" cy="520.6" r="4.5" fill="#c00000" fill-opacity="0.50" stroke="#141414" stroke-width="1.8"/>
<circle cx="1440.3" cy="519.0" r="4.5" fill="#ffffff" fill-opacity="0.95" stroke="#141414" stroke-width="1.8"/>
<rect x="1644.4" y="182.8" width="259.3" height="218.7" fill="#333333"/>
<rect x="1648.0" y="186.0" width="252.0" height="212.6" fill="url(#in_t)"/>
<rect x="1648" y="186" width="252" height="212.6" fill="url(#in_b)" mask="url(#inmask)"/>
<rect x="1648" y="186" width="252" height="212.6" fill="none" stroke="#9a9a9a" stroke-width="1.4"/>
<rect x="1764.2" y="283.6" width="15.6" height="15.6" fill="none" stroke="#fff" stroke-width="1.8" />
<circle cx="1772.0" cy="270.8" r="4.6" fill="#a0a0b8" fill-opacity="0.90" stroke="#141414" stroke-width="1.8"/>
<rect x="722.5" y="801.6" width="793.0" height="233.0" fill="#0c0c0c"/>
<rect x="724.5" y="803.6" width="789.0" height="17.0" fill="url(#th1)"/>
<rect x="724.5" y="820.6" width="789.0" height="17.0" fill="url(#th2)"/>
<text x="1008.0" y="827.8" font-size="18.4" fill="#f4f4f4" text-anchor="middle" textLength="46.0" lengthAdjust="spacingAndGlyphs">20%</text>
<text x="1130.8" y="827.8" font-size="18.4" fill="#f4f4f4" text-anchor="middle" textLength="46.0" lengthAdjust="spacingAndGlyphs">40%</text>
<text x="1245.6" y="827.8" font-size="18.4" fill="#f4f4f4" text-anchor="middle" textLength="46.0" lengthAdjust="spacingAndGlyphs">60%</text>
<text x="1353.0" y="827.8" font-size="18.4" fill="#f4f4f4" text-anchor="middle" textLength="46.0" lengthAdjust="spacingAndGlyphs">80%</text>
<text x="1461.0" y="827.8" font-size="18.4" fill="#f4f4f4" text-anchor="middle" textLength="59.5" lengthAdjust="spacingAndGlyphs">100%</text>
<rect x="724.5" y="837.3" width="789.0" height="33.0" fill="#424242"/>
<text x="744.5" y="861.7" font-size="19.6" fill="#f2f2f2" textLength="99.0" lengthAdjust="spacingAndGlyphs" font-weight="bold">x: CIE31</text>
<text x="955.0" y="861.7" font-size="19.6" fill="#f2f2f2" textLength="78.0" lengthAdjust="spacingAndGlyphs">0,2799</text>
<text x="1077.0" y="861.7" font-size="19.6" fill="#f2f2f2" textLength="78.0" lengthAdjust="spacingAndGlyphs">0,2459</text>
<text x="1199.5" y="861.7" font-size="19.6" fill="#f2f2f2" textLength="78.0" lengthAdjust="spacingAndGlyphs">0,2104</text>
<text x="1306.5" y="861.7" font-size="19.6" fill="#f2f2f2" textLength="78.0" lengthAdjust="spacingAndGlyphs">0,1744</text>
<text x="1414.5" y="861.7" font-size="19.6" fill="#f2f2f2" textLength="78.0" lengthAdjust="spacingAndGlyphs">0,1416</text>
<rect x="724.5" y="870.0" width="789.0" height="33.0" fill="#7f7f7f"/>
<text x="744.5" y="894.4" font-size="19.6" fill="#f2f2f2" textLength="99.0" lengthAdjust="spacingAndGlyphs" font-weight="bold">y: CIE31</text>
<text x="955.0" y="894.4" font-size="19.6" fill="#f2f2f2" textLength="78.0" lengthAdjust="spacingAndGlyphs">0,2796</text>
<text x="1077.0" y="894.4" font-size="19.6" fill="#f2f2f2" textLength="78.0" lengthAdjust="spacingAndGlyphs">0,2262</text>
<text x="1199.5" y="894.4" font-size="19.6" fill="#f2f2f2" textLength="78.0" lengthAdjust="spacingAndGlyphs">0,1707</text>
<text x="1306.5" y="894.4" font-size="19.6" fill="#f2f2f2" textLength="78.0" lengthAdjust="spacingAndGlyphs">0,1149</text>
<text x="1414.5" y="894.4" font-size="19.6" fill="#f2f2f2" textLength="78.0" lengthAdjust="spacingAndGlyphs">0,0633</text>
<rect x="724.5" y="902.7" width="789.0" height="33.0" fill="#424242"/>
<text x="744.5" y="927.1" font-size="19.6" fill="#f2f2f2" textLength="15.0" lengthAdjust="spacingAndGlyphs" font-weight="bold">Y</text>
<text x="955.0" y="927.1" font-size="19.6" fill="#f2f2f2" textLength="105.5" lengthAdjust="spacingAndGlyphs">171,8833</text>
<text x="1077.0" y="927.1" font-size="19.6" fill="#f2f2f2" textLength="105.5" lengthAdjust="spacingAndGlyphs">112,9650</text>
<text x="1199.5" y="927.1" font-size="19.6" fill="#f2f2f2" textLength="92.0" lengthAdjust="spacingAndGlyphs">70,6619</text>
<text x="1306.5" y="927.1" font-size="19.6" fill="#f2f2f2" textLength="92.0" lengthAdjust="spacingAndGlyphs">40,9812</text>
<text x="1414.5" y="927.1" font-size="19.6" fill="#f2f2f2" textLength="92.0" lengthAdjust="spacingAndGlyphs">19,8988</text>
<rect x="724.5" y="935.3" width="789.0" height="33.0" fill="#7f7f7f"/>
<text x="744.5" y="959.7" font-size="19.6" fill="#f2f2f2" textLength="180.0" lengthAdjust="spacingAndGlyphs" font-weight="bold">Target x:CIE31</text>
<text x="955.0" y="959.7" font-size="19.6" fill="#f2f2f2" textLength="78.0" lengthAdjust="spacingAndGlyphs">0,2800</text>
<text x="1077.0" y="959.7" font-size="19.6" fill="#f2f2f2" textLength="78.0" lengthAdjust="spacingAndGlyphs">0,2478</text>
<text x="1199.5" y="959.7" font-size="19.6" fill="#f2f2f2" textLength="78.0" lengthAdjust="spacingAndGlyphs">0,2165</text>
<text x="1306.5" y="959.7" font-size="19.6" fill="#f2f2f2" textLength="78.0" lengthAdjust="spacingAndGlyphs">0,1852</text>
<text x="1414.5" y="959.7" font-size="19.6" fill="#f2f2f2" textLength="78.0" lengthAdjust="spacingAndGlyphs">0,1500</text>
<rect x="724.5" y="968.0" width="789.0" height="33.0" fill="#424242"/>
<text x="744.5" y="992.4" font-size="19.6" fill="#f2f2f2" textLength="180.0" lengthAdjust="spacingAndGlyphs" font-weight="bold">Target y:CIE31</text>
<text x="955.0" y="992.4" font-size="19.6" fill="#f2f2f2" textLength="78.0" lengthAdjust="spacingAndGlyphs">0,2749</text>
<text x="1077.0" y="992.4" font-size="19.6" fill="#f2f2f2" textLength="78.0" lengthAdjust="spacingAndGlyphs">0,2217</text>
<text x="1199.5" y="992.4" font-size="19.6" fill="#f2f2f2" textLength="78.0" lengthAdjust="spacingAndGlyphs">0,1700</text>
<text x="1306.5" y="992.4" font-size="19.6" fill="#f2f2f2" textLength="78.0" lengthAdjust="spacingAndGlyphs">0,1181</text>
<text x="1414.5" y="992.4" font-size="19.6" fill="#f2f2f2" textLength="78.0" lengthAdjust="spacingAndGlyphs">0,0600</text>
<rect x="724.5" y="1000.7" width="789.0" height="33.0" fill="#7f7f7f"/>
<text x="744.5" y="1025.1" font-size="19.6" fill="#f2f2f2" textLength="104.0" lengthAdjust="spacingAndGlyphs" font-weight="bold">Target Y</text>
<text x="955.0" y="1025.1" font-size="19.6" fill="#f2f2f2" textLength="105.5" lengthAdjust="spacingAndGlyphs">169,1473</text>
<text x="1077.0" y="1025.1" font-size="19.6" fill="#f2f2f2" textLength="105.5" lengthAdjust="spacingAndGlyphs">110,7698</text>
<text x="1199.5" y="1025.1" font-size="19.6" fill="#f2f2f2" textLength="92.0" lengthAdjust="spacingAndGlyphs">71,8204</text>
<text x="1306.5" y="1025.1" font-size="19.6" fill="#f2f2f2" textLength="92.0" lengthAdjust="spacingAndGlyphs">43,2447</text>
<text x="1414.5" y="1025.1" font-size="19.6" fill="#f2f2f2" textLength="92.0" lengthAdjust="spacingAndGlyphs">19,0940</text>
<rect x="1.0" y="1112.5" width="1918.0" height="53.5" fill="url(#bbar)"/>
<rect x="0.0" y="1164.8" width="1920.0" height="1.2" fill="#5c5c5c"/>
<rect x="2" y="1113.4" width="37.2" height="51" rx="3.5" fill="url(#bb1)"/>
<circle cx="20.5" cy="1120.4" r="5.8" fill="#7a7a7a"/>
<path d="M17.2,1122.2 h6.6 l-3.3,-3.8z" fill="#3a3a3a"/>
<rect x="6.2" y="1135" width="28.8" height="25" rx="2.5" fill="#0000ff"/>
<rect x="44.7" y="1113" width="125.6" height="52" rx="4" fill="url(#bbsel)" stroke="#161616" stroke-width="1.6"/>
<rect x="48.7" y="1117.4" width="117.4" height="30.2" rx="2.5" fill="#9c9cc4"/>
<text x="107.3" y="1160.0" font-size="9.2" fill="#ffffff" text-anchor="middle" textLength="17.5" lengthAdjust="spacingAndGlyphs" font-weight="bold">20%</text>
<rect x="171.7" y="1113.4" width="125.6" height="51.2" rx="3.5" fill="url(#bb1)"/>
<rect x="175.3" y="1117.2" width="118.4" height="31" rx="2.5" fill="#6c6c6c"/>
<rect x="176.2" y="1118" width="116.6" height="29.3" rx="2" fill="#7c7cc4"/>
<text x="234.3" y="1160.0" font-size="9.2" fill="#383838" text-anchor="middle" textLength="17.5" lengthAdjust="spacingAndGlyphs" font-weight="bold">40%</text>
<rect x="298.8" y="1113.4" width="125.6" height="51.2" rx="3.5" fill="url(#bb1)"/>
<rect x="302.4" y="1117.2" width="118.4" height="31" rx="2.5" fill="#6c6c6c"/>
<rect x="303.3" y="1118" width="116.6" height="29.3" rx="2" fill="#6060c0"/>
<text x="361.4" y="1160.0" font-size="9.2" fill="#383838" text-anchor="middle" textLength="17.5" lengthAdjust="spacingAndGlyphs" font-weight="bold">60%</text>
<rect x="426.2" y="1113.4" width="125.6" height="51.2" rx="3.5" fill="url(#bb1)"/>
<rect x="429.8" y="1117.2" width="118.4" height="31" rx="2.5" fill="#6c6c6c"/>
<rect x="430.7" y="1118" width="116.6" height="29.3" rx="2" fill="#4242c0"/>
<text x="488.8" y="1160.0" font-size="9.2" fill="#383838" text-anchor="middle" textLength="17.5" lengthAdjust="spacingAndGlyphs" font-weight="bold">80%</text>
<rect x="553.4" y="1113.4" width="125.6" height="51.2" rx="3.5" fill="url(#bb1)"/>
<rect x="557.0" y="1117.2" width="118.4" height="31" rx="2.5" fill="#6c6c6c"/>
<rect x="557.9" y="1118" width="116.6" height="29.3" rx="2" fill="#0000c0"/>
<text x="616.0" y="1160.0" font-size="9.2" fill="#383838" text-anchor="middle" textLength="22.5" lengthAdjust="spacingAndGlyphs" font-weight="bold">100%</text>
<path d="M1649,1128 V1116.5 Q1649,1113.2 1652.5,1113.2 H1685.5 Q1689,1113.2 1689,1116.5 V1128Z" fill="url(#bb2)"/>
<circle cx="1669" cy="1120.2" r="5.8" fill="#7c7c7c"/>
<path d="M1665.7,1122 h6.6 l-3.3,-3.8z" fill="#3a3a3a"/>
<rect x="1649" y="1128.8" width="40" height="35.6" rx="2.5" fill="#7e7e7e"/>
<rect x="1656" y="1134" width="25" height="24.6" rx="3" fill="#a8a8a8" stroke="#2a2a2a" stroke-width="1.6"/>
<rect x="1663.0" y="1140.8" width="11.6" height="11.2" fill="#101010"/>
<path d="M1690.2,1138.4 V1116 Q1690.2,1113.2 1693,1113.2 H1876.4 Q1879.2,1113.2 1879.2,1116 V1138.4Z" fill="url(#bb2)"/>
<line x1="1728.3" y1="1113.5" x2="1728.3" y2="1138.2" stroke="#5c5c5c" stroke-width="1.2"/>
<line x1="1766.3" y1="1113.5" x2="1766.3" y2="1138.2" stroke="#5c5c5c" stroke-width="1.2"/>
<line x1="1803.8" y1="1113.5" x2="1803.8" y2="1138.2" stroke="#5c5c5c" stroke-width="1.2"/>
<line x1="1841.2" y1="1113.5" x2="1841.2" y2="1138.2" stroke="#5c5c5c" stroke-width="1.2"/>
<circle cx="1708.8" cy="1125.6" r="8.2" fill="url(#icg)"/>
<circle cx="1747.4" cy="1125.6" r="8.2" fill="url(#icg)"/>
<circle cx="1785.0" cy="1125.6" r="8.2" fill="url(#icg)"/>
<circle cx="1822.8" cy="1125.6" r="8.2" fill="url(#icg)"/>
<circle cx="1860.3" cy="1125.6" r="8.2" fill="url(#icg)"/>
<rect x="1705.6" y="1122.5" width="6.4" height="6.4" fill="#303030"/>
<path d="M1745,1121.6 v8 l6.6,-4z" fill="#2a2a2a"/>
<text x="1785.0" y="1128.8" font-size="9.0" fill="#262626" text-anchor="middle" textLength="11.5" lengthAdjust="spacingAndGlyphs" font-weight="bold">[··]</text>
<text x="1822.8" y="1129.4" font-size="12.0" fill="#2a2a2a" text-anchor="middle" textLength="12.0" lengthAdjust="spacingAndGlyphs" font-weight="bold">∞</text>
<g transform="translate(1860.3,1125.6)" fill="none" stroke="#2e2e2e" stroke-width="1.7"><path d="M-4.2,-0.8 A4.3,4.3 0 0 1 3.2,-3"/><path d="M4.2,0.8 A4.3,4.3 0 0 1 -3.2,3"/></g>
<path d="M1861.6,1119.6 l3.6,0.2 l-0.6,3.6z" fill="#2e2e2e"/><path d="M1859,1131.6 l-3.6,-0.2 l0.6,-3.6z" fill="#2e2e2e"/>
<circle cx="1898.4" cy="1125.8" r="8" fill="#3c3c3c"/>
<path d="M1690.2,1139.4 H1803.4 V1164 H1693 Q1690.2,1164 1690.2,1161Z" fill="url(#bb3)"/>
<path d="M1804.4,1139.4 H1915 Q1917.8,1139.4 1917.8,1142 V1161 Q1917.8,1164 1915,1164 H1804.4Z" fill="url(#bb3)"/>
<line x1="1803.9" y1="1139.4" x2="1803.9" y2="1164.0" stroke="#6a6a6a" stroke-width="1.0"/>
<circle cx="1715.5" cy="1152.2" r="8" fill="url(#icg)"/>
<circle cx="1894.2" cy="1152.2" r="8" fill="url(#icg)"/>
<text x="1715.3" y="1157.0" font-size="16.0" fill="#303030" text-anchor="middle">«</text>
<text x="1894.4" y="1157.0" font-size="16.0" fill="#303030" text-anchor="middle">»</text>
<text x="1738.0" y="1157.9" font-size="17.6" fill="#333333" textLength="42.0" lengthAdjust="spacingAndGlyphs" stroke="#333" stroke-width="0.35">Back</text>
<text x="1827.5" y="1157.9" font-size="17.6" fill="#333333" textLength="43.0" lengthAdjust="spacingAndGlyphs" stroke="#333" stroke-width="0.35">Next</text>
</svg>
</body></html>
